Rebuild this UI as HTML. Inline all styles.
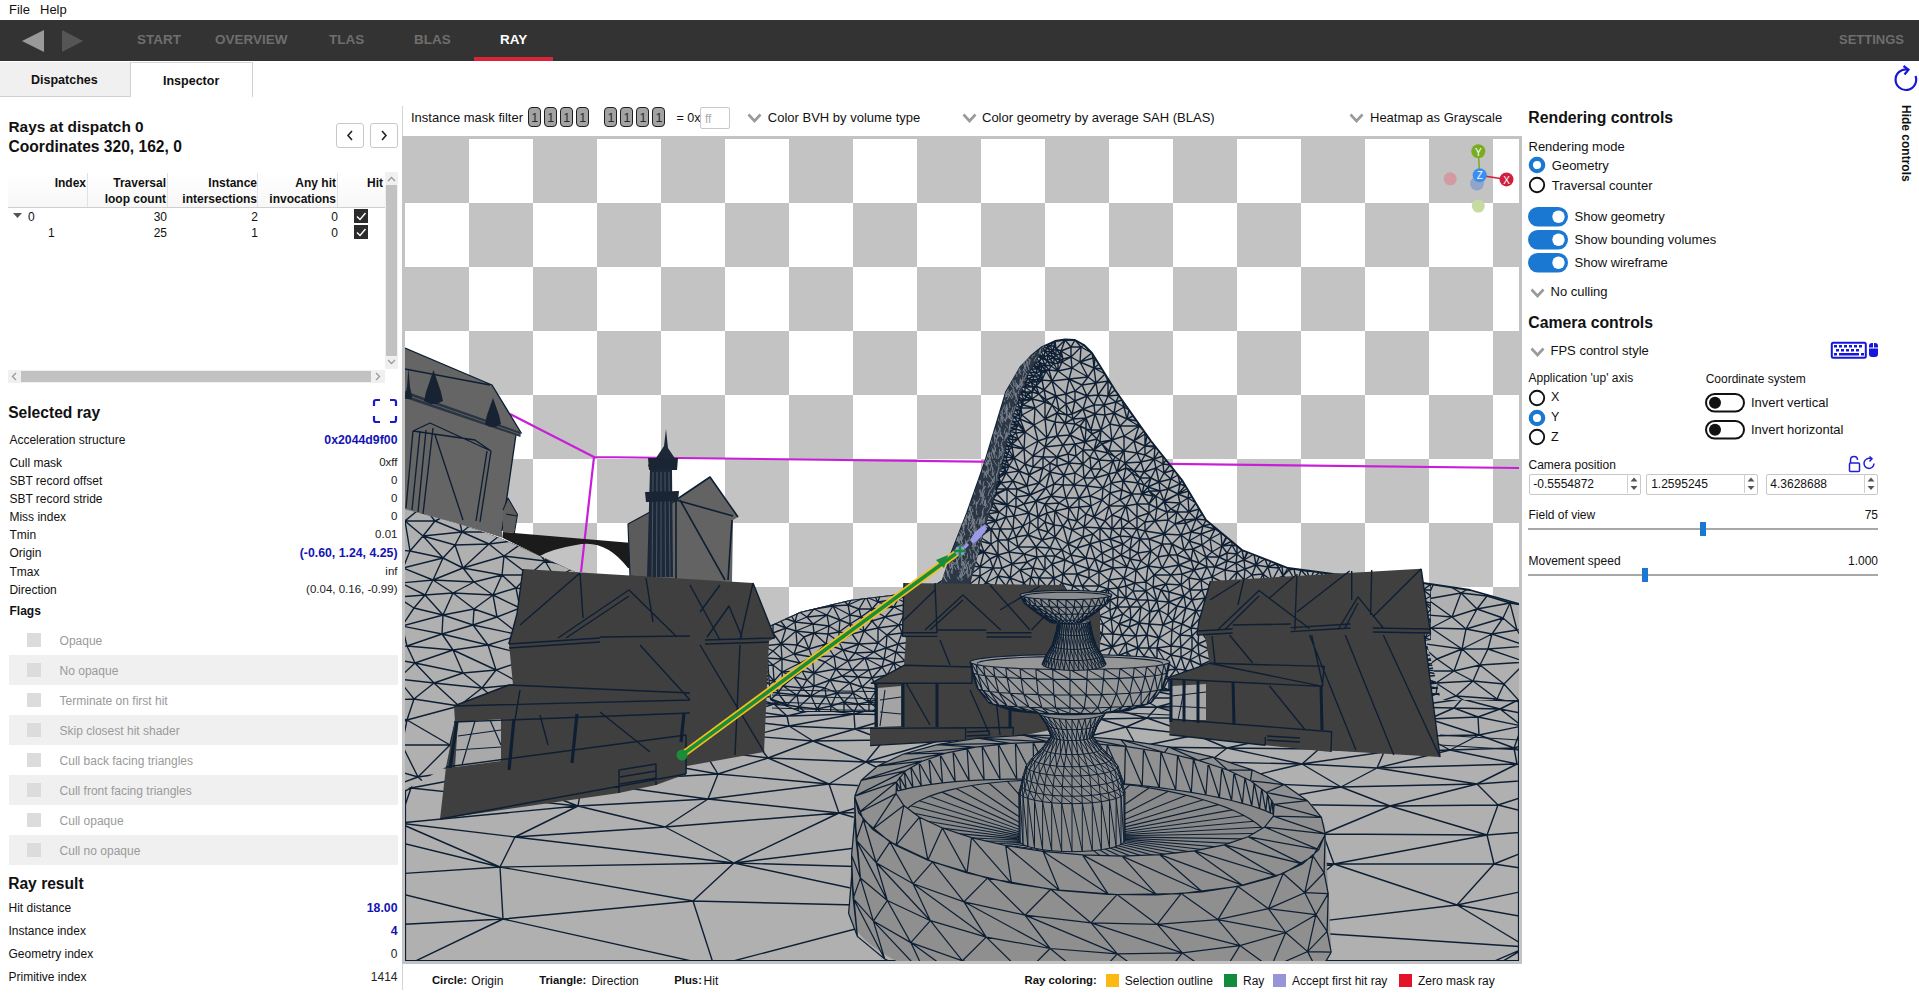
<!DOCTYPE html>
<html><head><meta charset="utf-8"><style>
html,body{margin:0;padding:0;background:#fff;width:1919px;height:997px;overflow:hidden;position:relative;font-family:"Liberation Sans", sans-serif}
.t{position:absolute;white-space:nowrap;font-family:"Liberation Sans", sans-serif}
</style></head><body>
<div class="t" style="left:9px;top:3.00px;font-size:13px;line-height:13px;font-weight:normal;color:#111;">File</div><div class="t" style="left:40px;top:3.00px;font-size:13px;line-height:13px;font-weight:normal;color:#111;">Help</div><div style="position:absolute;left:0;top:20px;width:1919px;height:41px;background:#333333"></div><svg style="position:absolute;left:0;top:20px" width="100" height="41"><polygon points="22,21 44,10 44,32" fill="#9a9a9a"/><polygon points="62,10 83,21 62,32" fill="#555555"/></svg><div class="t" style="left:137px;top:32.57px;font-size:13.5px;line-height:13.5px;font-weight:bold;color:#6e6e6e;">START</div><div class="t" style="left:215px;top:32.57px;font-size:13.5px;line-height:13.5px;font-weight:bold;color:#6e6e6e;">OVERVIEW</div><div class="t" style="left:329px;top:32.57px;font-size:13.5px;line-height:13.5px;font-weight:bold;color:#6e6e6e;">TLAS</div><div class="t" style="left:414px;top:32.57px;font-size:13.5px;line-height:13.5px;font-weight:bold;color:#6e6e6e;">BLAS</div><div class="t" style="left:500px;top:32.57px;font-size:13.5px;line-height:13.5px;font-weight:bold;color:#ffffff;">RAY</div><div class="t" style="right:15px;top:33.00px;font-size:13px;line-height:13px;font-weight:bold;color:#6e6e6e;">SETTINGS</div><div style="position:absolute;left:474px;top:57px;width:79px;height:4px;background:#d9243a"></div><div style="position:absolute;left:0;top:62px;width:130px;height:34px;background:#f0f0f0;border-right:1px solid #d0d0d0;border-bottom:1px solid #d0d0d0"></div><div style="position:absolute;left:131px;top:62px;width:121px;height:34px;background:#fff;border-right:1px solid #d0d0d0;border-top:1px solid #d8d8d8"></div><div class="t" style="left:31px;top:74.42px;font-size:12.5px;line-height:12.5px;font-weight:bold;color:#111;">Dispatches</div><div class="t" style="left:163px;top:75.42px;font-size:12.5px;line-height:12.5px;font-weight:bold;color:#111;">Inspector</div><div class="t" style="left:8.5px;top:118.96px;font-size:15.4px;line-height:15.4px;font-weight:bold;color:#111;">Rays at dispatch 0</div><div class="t" style="left:8.5px;top:138.79px;font-size:15.6px;line-height:15.6px;font-weight:bold;color:#111;">Coordinates 320, 162, 0</div><div style="position:absolute;left:336px;top:123px;width:26px;height:23px;border:1px solid #c8c8c8;border-radius:3px;background:#fff"></div><div style="position:absolute;left:370px;top:123px;width:26px;height:23px;border:1px solid #c8c8c8;border-radius:3px;background:#fff"></div><svg style="position:absolute;left:336px;top:123px" width="62" height="25"><polyline points="16,8 12,12.5 16,17" fill="none" stroke="#222" stroke-width="1.6"/><polyline points="46,8 50,12.5 46,17" fill="none" stroke="#222" stroke-width="1.6"/></svg><div style="position:absolute;left:8px;top:172px;width:377px;height:35px;background:linear-gradient(#ffffff,#f7f7f7);border-bottom:1px solid #cfcfcf"></div><div style="position:absolute;left:87px;top:173px;width:1px;height:34px;background:#e2e2e2"></div><div style="position:absolute;left:167px;top:173px;width:1px;height:34px;background:#e2e2e2"></div><div style="position:absolute;left:257px;top:173px;width:1px;height:34px;background:#e2e2e2"></div><div style="position:absolute;left:337px;top:173px;width:1px;height:34px;background:#e2e2e2"></div><div class="t" style="right:1833px;top:176.84px;font-size:12px;line-height:12px;font-weight:bold;color:#111;">Index</div><div class="t" style="right:1753px;top:176.84px;font-size:12px;line-height:12px;font-weight:bold;color:#111;">Traversal</div><div class="t" style="right:1753px;top:192.84px;font-size:12px;line-height:12px;font-weight:bold;color:#111;">loop count</div><div class="t" style="right:1662px;top:176.84px;font-size:12px;line-height:12px;font-weight:bold;color:#111;">Instance</div><div class="t" style="right:1662px;top:192.84px;font-size:12px;line-height:12px;font-weight:bold;color:#111;">intersections</div><div class="t" style="right:1583px;top:176.84px;font-size:12px;line-height:12px;font-weight:bold;color:#111;">Any hit</div><div class="t" style="right:1583px;top:192.84px;font-size:12px;line-height:12px;font-weight:bold;color:#111;">invocations</div><div class="t" style="right:1536px;top:176.84px;font-size:12px;line-height:12px;font-weight:bold;color:#111;">Hit</div><svg style="position:absolute;left:13px;top:213px" width="10" height="6"><polygon points="0,0 9,0 4.5,5" fill="#555"/></svg><div class="t" style="left:28px;top:210.84px;font-size:12px;line-height:12px;font-weight:normal;color:#111;">0</div><div class="t" style="left:48px;top:226.84px;font-size:12px;line-height:12px;font-weight:normal;color:#111;">1</div><div class="t" style="right:1752px;top:210.84px;font-size:12px;line-height:12px;font-weight:normal;color:#111;">30</div><div class="t" style="right:1752px;top:226.84px;font-size:12px;line-height:12px;font-weight:normal;color:#111;">25</div><div class="t" style="right:1661px;top:210.84px;font-size:12px;line-height:12px;font-weight:normal;color:#111;">2</div><div class="t" style="right:1661px;top:226.84px;font-size:12px;line-height:12px;font-weight:normal;color:#111;">1</div><div class="t" style="right:1581px;top:210.84px;font-size:12px;line-height:12px;font-weight:normal;color:#111;">0</div><div class="t" style="right:1581px;top:226.84px;font-size:12px;line-height:12px;font-weight:normal;color:#111;">0</div><svg style="position:absolute;left:354px;top:209px" width="14" height="14"><rect width="14" height="14" fill="#2b2b2b"/><polyline points="3,7.5 6,10.5 11.5,4" fill="none" stroke="#fff" stroke-width="1.4"/></svg><svg style="position:absolute;left:354px;top:225px" width="14" height="14"><rect width="14" height="14" fill="#2b2b2b"/><polyline points="3,7.5 6,10.5 11.5,4" fill="none" stroke="#fff" stroke-width="1.4"/></svg><div style="position:absolute;left:385px;top:172px;width:13px;height:197px;background:#f0f0f0"></div><div style="position:absolute;left:386px;top:185px;width:11px;height:171px;background:#c2c2c2"></div><svg style="position:absolute;left:385px;top:172px" width="13" height="197"><polyline points="3,9 6.5,5.5 10,9" fill="none" stroke="#999" stroke-width="1.3"/><polyline points="3,188 6.5,191.5 10,188" fill="none" stroke="#999" stroke-width="1.3"/></svg><div style="position:absolute;left:8px;top:370px;width:377px;height:13px;background:#f0f0f0"></div><div style="position:absolute;left:21px;top:371px;width:350px;height:11px;background:#c2c2c2"></div><svg style="position:absolute;left:8px;top:370px" width="377" height="13"><polyline points="8,3 4.5,6.5 8,10" fill="none" stroke="#999" stroke-width="1.3"/><polyline points="368,3 371.5,6.5 368,10" fill="none" stroke="#999" stroke-width="1.3"/></svg><div class="t" style="left:8.2px;top:404.79px;font-size:15.6px;line-height:15.6px;font-weight:bold;color:#111;">Selected ray</div><svg style="position:absolute;left:372px;top:398px" width="27" height="27"><path d="M2,8 V4 Q2,2 4,2 H8 M18,2 H22 Q24,2 24,4 V8 M24,18 V22 Q24,24 22,24 H18 M8,24 H4 Q2,24 2,22 V18" fill="none" stroke="#1a1acc" stroke-width="2.2"/></svg><div class="t" style="left:9.4px;top:433.84px;font-size:12px;line-height:12px;font-weight:normal;color:#111;">Acceleration structure</div><div class="t" style="right:1521.5px;top:433.59px;font-size:12.3px;line-height:12.3px;font-weight:bold;color:#1414b4;">0x2044d9f00</div><div class="t" style="left:9.4px;top:456.84px;font-size:12px;line-height:12px;font-weight:normal;color:#111;">Cull mask</div><div class="t" style="right:1521.5px;top:457.27px;font-size:11.5px;line-height:11.5px;font-weight:normal;color:#222;">0xff</div><div class="t" style="left:9.4px;top:474.84px;font-size:12px;line-height:12px;font-weight:normal;color:#111;">SBT record offset</div><div class="t" style="right:1521.5px;top:475.27px;font-size:11.5px;line-height:11.5px;font-weight:normal;color:#222;">0</div><div class="t" style="left:9.4px;top:492.84px;font-size:12px;line-height:12px;font-weight:normal;color:#111;">SBT record stride</div><div class="t" style="right:1521.5px;top:493.27px;font-size:11.5px;line-height:11.5px;font-weight:normal;color:#222;">0</div><div class="t" style="left:9.4px;top:510.84px;font-size:12px;line-height:12px;font-weight:normal;color:#111;">Miss index</div><div class="t" style="right:1521.5px;top:511.27px;font-size:11.5px;line-height:11.5px;font-weight:normal;color:#222;">0</div><div class="t" style="left:9.4px;top:528.84px;font-size:12px;line-height:12px;font-weight:normal;color:#111;">Tmin</div><div class="t" style="right:1521.5px;top:529.27px;font-size:11.5px;line-height:11.5px;font-weight:normal;color:#222;">0.01</div><div class="t" style="left:9.4px;top:546.84px;font-size:12px;line-height:12px;font-weight:normal;color:#111;">Origin</div><div class="t" style="right:1521.5px;top:546.59px;font-size:12.3px;line-height:12.3px;font-weight:bold;color:#1414b4;">(-0.60, 1.24, 4.25)</div><div class="t" style="left:9.4px;top:565.84px;font-size:12px;line-height:12px;font-weight:normal;color:#111;">Tmax</div><div class="t" style="right:1521.5px;top:566.27px;font-size:11.5px;line-height:11.5px;font-weight:normal;color:#222;">inf</div><div class="t" style="left:9.4px;top:583.84px;font-size:12px;line-height:12px;font-weight:normal;color:#111;">Direction</div><div class="t" style="right:1521.5px;top:584.27px;font-size:11.5px;line-height:11.5px;font-weight:normal;color:#222;">(0.04, 0.16, -0.99)</div><div class="t" style="left:9.5px;top:605.44px;font-size:12px;line-height:12px;font-weight:bold;color:#111;">Flags</div><div style="position:absolute;left:27px;top:633px;width:14px;height:14px;background:#dcdcdc"></div><div class="t" style="left:59.6px;top:634.64px;font-size:12px;line-height:12px;font-weight:normal;color:#9a9a9a;">Opaque</div><div style="position:absolute;left:9px;top:655px;width:389px;height:30px;background:#f0f0f0"></div><div style="position:absolute;left:27px;top:663px;width:14px;height:14px;background:#dcdcdc"></div><div class="t" style="left:59.6px;top:664.64px;font-size:12px;line-height:12px;font-weight:normal;color:#9a9a9a;">No opaque</div><div style="position:absolute;left:27px;top:693px;width:14px;height:14px;background:#dcdcdc"></div><div class="t" style="left:59.6px;top:694.64px;font-size:12px;line-height:12px;font-weight:normal;color:#9a9a9a;">Terminate on first hit</div><div style="position:absolute;left:9px;top:715px;width:389px;height:30px;background:#f0f0f0"></div><div style="position:absolute;left:27px;top:723px;width:14px;height:14px;background:#dcdcdc"></div><div class="t" style="left:59.6px;top:724.64px;font-size:12px;line-height:12px;font-weight:normal;color:#9a9a9a;">Skip closest hit shader</div><div style="position:absolute;left:27px;top:753px;width:14px;height:14px;background:#dcdcdc"></div><div class="t" style="left:59.6px;top:754.64px;font-size:12px;line-height:12px;font-weight:normal;color:#9a9a9a;">Cull back facing triangles</div><div style="position:absolute;left:9px;top:775px;width:389px;height:30px;background:#f0f0f0"></div><div style="position:absolute;left:27px;top:783px;width:14px;height:14px;background:#dcdcdc"></div><div class="t" style="left:59.6px;top:784.64px;font-size:12px;line-height:12px;font-weight:normal;color:#9a9a9a;">Cull front facing triangles</div><div style="position:absolute;left:27px;top:813px;width:14px;height:14px;background:#dcdcdc"></div><div class="t" style="left:59.6px;top:814.64px;font-size:12px;line-height:12px;font-weight:normal;color:#9a9a9a;">Cull opaque</div><div style="position:absolute;left:9px;top:835px;width:389px;height:30px;background:#f0f0f0"></div><div style="position:absolute;left:27px;top:843px;width:14px;height:14px;background:#dcdcdc"></div><div class="t" style="left:59.6px;top:844.64px;font-size:12px;line-height:12px;font-weight:normal;color:#9a9a9a;">Cull no opaque</div><div class="t" style="left:8.2px;top:875.79px;font-size:15.6px;line-height:15.6px;font-weight:bold;color:#111;">Ray result</div><div class="t" style="left:8.5px;top:901.84px;font-size:12px;line-height:12px;font-weight:normal;color:#111;">Hit distance</div><div class="t" style="right:1521.5px;top:901.59px;font-size:12.3px;line-height:12.3px;font-weight:bold;color:#1414b4;">18.00</div><div class="t" style="left:8.5px;top:924.84px;font-size:12px;line-height:12px;font-weight:normal;color:#111;">Instance index</div><div class="t" style="right:1521.5px;top:924.59px;font-size:12.3px;line-height:12.3px;font-weight:bold;color:#1414b4;">4</div><div class="t" style="left:8.5px;top:947.84px;font-size:12px;line-height:12px;font-weight:normal;color:#111;">Geometry index</div><div class="t" style="right:1521.5px;top:947.84px;font-size:12px;line-height:12px;font-weight:normal;color:#222;">0</div><div class="t" style="left:8.5px;top:970.84px;font-size:12px;line-height:12px;font-weight:normal;color:#111;">Primitive index</div><div class="t" style="right:1521.5px;top:970.84px;font-size:12px;line-height:12px;font-weight:normal;color:#222;">1414</div><div style="position:absolute;left:402px;top:106px;width:1px;height:884px;background:#d4d4d4"></div><div class="t" style="left:411px;top:111.00px;font-size:13px;line-height:13px;font-weight:normal;color:#111;">Instance mask filter</div><div style="position:absolute;left:528px;top:107px;width:11px;height:18px;border:1.5px solid #1e1e1e;border-radius:4px;background:#a3a3a3"></div><div class="t" style="left:531.2px;top:112.42px;font-size:12.5px;line-height:12.5px;font-weight:normal;color:#2a2a2a;">1</div><div style="position:absolute;left:544px;top:107px;width:11px;height:18px;border:1.5px solid #1e1e1e;border-radius:4px;background:#a3a3a3"></div><div class="t" style="left:547.2px;top:112.42px;font-size:12.5px;line-height:12.5px;font-weight:normal;color:#2a2a2a;">1</div><div style="position:absolute;left:560px;top:107px;width:11px;height:18px;border:1.5px solid #1e1e1e;border-radius:4px;background:#a3a3a3"></div><div class="t" style="left:563.2px;top:112.42px;font-size:12.5px;line-height:12.5px;font-weight:normal;color:#2a2a2a;">1</div><div style="position:absolute;left:576px;top:107px;width:11px;height:18px;border:1.5px solid #1e1e1e;border-radius:4px;background:#a3a3a3"></div><div class="t" style="left:579.2px;top:112.42px;font-size:12.5px;line-height:12.5px;font-weight:normal;color:#2a2a2a;">1</div><div style="position:absolute;left:604.3px;top:107px;width:11px;height:18px;border:1.5px solid #1e1e1e;border-radius:4px;background:#a3a3a3"></div><div class="t" style="left:607.5px;top:112.42px;font-size:12.5px;line-height:12.5px;font-weight:normal;color:#2a2a2a;">1</div><div style="position:absolute;left:620.3px;top:107px;width:11px;height:18px;border:1.5px solid #1e1e1e;border-radius:4px;background:#a3a3a3"></div><div class="t" style="left:623.5px;top:112.42px;font-size:12.5px;line-height:12.5px;font-weight:normal;color:#2a2a2a;">1</div><div style="position:absolute;left:636.3px;top:107px;width:11px;height:18px;border:1.5px solid #1e1e1e;border-radius:4px;background:#a3a3a3"></div><div class="t" style="left:639.5px;top:112.42px;font-size:12.5px;line-height:12.5px;font-weight:normal;color:#2a2a2a;">1</div><div style="position:absolute;left:652.3px;top:107px;width:11px;height:18px;border:1.5px solid #1e1e1e;border-radius:4px;background:#a3a3a3"></div><div class="t" style="left:655.5px;top:112.42px;font-size:12.5px;line-height:12.5px;font-weight:normal;color:#2a2a2a;">1</div><div class="t" style="left:676.5px;top:112.42px;font-size:12.5px;line-height:12.5px;font-weight:normal;color:#111;">= 0x</div><div style="position:absolute;left:700px;top:107px;width:28px;height:20px;border:1px solid #c8c8c8;border-radius:2px;background:#fff"></div><div class="t" style="left:705px;top:112.84px;font-size:12px;line-height:12px;font-weight:normal;color:#aaa;">ff</div><svg style="position:absolute;left:746.5px;top:112.5px" width="16" height="11"><polyline points="1.5,1.5 7.5,8 13.5,1.5" fill="none" stroke="#9a9a9a" stroke-width="2.6"/></svg><div class="t" style="left:767.8px;top:111.00px;font-size:13px;line-height:13px;font-weight:normal;color:#111;">Color BVH by volume type</div><svg style="position:absolute;left:961.5px;top:112.5px" width="16" height="11"><polyline points="1.5,1.5 7.5,8 13.5,1.5" fill="none" stroke="#9a9a9a" stroke-width="2.6"/></svg><div class="t" style="left:982px;top:111.00px;font-size:13px;line-height:13px;font-weight:normal;color:#111;">Color geometry by average SAH (BLAS)</div><svg style="position:absolute;left:1348.5px;top:112.5px" width="16" height="11"><polyline points="1.5,1.5 7.5,8 13.5,1.5" fill="none" stroke="#9a9a9a" stroke-width="2.6"/></svg><div class="t" style="left:1370px;top:111.00px;font-size:13px;line-height:13px;font-weight:normal;color:#111;">Heatmap as Grayscale</div><div style="position:absolute;left:402px;top:136px;width:1120px;height:828px;background:#c3c3c3"></div><svg style="position:absolute;left:405px;top:139px" width="1114" height="822" viewBox="405 139 1114 822"><rect x="405" y="139" width="1114" height="822" fill="#ffffff"/><rect x="405" y="139" width="64" height="64" fill="#c3c3c3"/><rect x="533" y="139" width="64" height="64" fill="#c3c3c3"/><rect x="661" y="139" width="64" height="64" fill="#c3c3c3"/><rect x="789" y="139" width="64" height="64" fill="#c3c3c3"/><rect x="917" y="139" width="64" height="64" fill="#c3c3c3"/><rect x="1045" y="139" width="64" height="64" fill="#c3c3c3"/><rect x="1173" y="139" width="64" height="64" fill="#c3c3c3"/><rect x="1301" y="139" width="64" height="64" fill="#c3c3c3"/><rect x="1429" y="139" width="64" height="64" fill="#c3c3c3"/><rect x="469" y="203" width="64" height="64" fill="#c3c3c3"/><rect x="597" y="203" width="64" height="64" fill="#c3c3c3"/><rect x="725" y="203" width="64" height="64" fill="#c3c3c3"/><rect x="853" y="203" width="64" height="64" fill="#c3c3c3"/><rect x="981" y="203" width="64" height="64" fill="#c3c3c3"/><rect x="1109" y="203" width="64" height="64" fill="#c3c3c3"/><rect x="1237" y="203" width="64" height="64" fill="#c3c3c3"/><rect x="1365" y="203" width="64" height="64" fill="#c3c3c3"/><rect x="1493" y="203" width="64" height="64" fill="#c3c3c3"/><rect x="405" y="267" width="64" height="64" fill="#c3c3c3"/><rect x="533" y="267" width="64" height="64" fill="#c3c3c3"/><rect x="661" y="267" width="64" height="64" fill="#c3c3c3"/><rect x="789" y="267" width="64" height="64" fill="#c3c3c3"/><rect x="917" y="267" width="64" height="64" fill="#c3c3c3"/><rect x="1045" y="267" width="64" height="64" fill="#c3c3c3"/><rect x="1173" y="267" width="64" height="64" fill="#c3c3c3"/><rect x="1301" y="267" width="64" height="64" fill="#c3c3c3"/><rect x="1429" y="267" width="64" height="64" fill="#c3c3c3"/><rect x="469" y="331" width="64" height="64" fill="#c3c3c3"/><rect x="597" y="331" width="64" height="64" fill="#c3c3c3"/><rect x="725" y="331" width="64" height="64" fill="#c3c3c3"/><rect x="853" y="331" width="64" height="64" fill="#c3c3c3"/><rect x="981" y="331" width="64" height="64" fill="#c3c3c3"/><rect x="1109" y="331" width="64" height="64" fill="#c3c3c3"/><rect x="1237" y="331" width="64" height="64" fill="#c3c3c3"/><rect x="1365" y="331" width="64" height="64" fill="#c3c3c3"/><rect x="1493" y="331" width="64" height="64" fill="#c3c3c3"/><rect x="405" y="395" width="64" height="64" fill="#c3c3c3"/><rect x="533" y="395" width="64" height="64" fill="#c3c3c3"/><rect x="661" y="395" width="64" height="64" fill="#c3c3c3"/><rect x="789" y="395" width="64" height="64" fill="#c3c3c3"/><rect x="917" y="395" width="64" height="64" fill="#c3c3c3"/><rect x="1045" y="395" width="64" height="64" fill="#c3c3c3"/><rect x="1173" y="395" width="64" height="64" fill="#c3c3c3"/><rect x="1301" y="395" width="64" height="64" fill="#c3c3c3"/><rect x="1429" y="395" width="64" height="64" fill="#c3c3c3"/><rect x="469" y="459" width="64" height="64" fill="#c3c3c3"/><rect x="597" y="459" width="64" height="64" fill="#c3c3c3"/><rect x="725" y="459" width="64" height="64" fill="#c3c3c3"/><rect x="853" y="459" width="64" height="64" fill="#c3c3c3"/><rect x="981" y="459" width="64" height="64" fill="#c3c3c3"/><rect x="1109" y="459" width="64" height="64" fill="#c3c3c3"/><rect x="1237" y="459" width="64" height="64" fill="#c3c3c3"/><rect x="1365" y="459" width="64" height="64" fill="#c3c3c3"/><rect x="1493" y="459" width="64" height="64" fill="#c3c3c3"/><rect x="405" y="523" width="64" height="64" fill="#c3c3c3"/><rect x="533" y="523" width="64" height="64" fill="#c3c3c3"/><rect x="661" y="523" width="64" height="64" fill="#c3c3c3"/><rect x="789" y="523" width="64" height="64" fill="#c3c3c3"/><rect x="917" y="523" width="64" height="64" fill="#c3c3c3"/><rect x="1045" y="523" width="64" height="64" fill="#c3c3c3"/><rect x="1173" y="523" width="64" height="64" fill="#c3c3c3"/><rect x="1301" y="523" width="64" height="64" fill="#c3c3c3"/><rect x="1429" y="523" width="64" height="64" fill="#c3c3c3"/><rect x="469" y="587" width="64" height="64" fill="#c3c3c3"/><rect x="597" y="587" width="64" height="64" fill="#c3c3c3"/><rect x="725" y="587" width="64" height="64" fill="#c3c3c3"/><rect x="853" y="587" width="64" height="64" fill="#c3c3c3"/><rect x="981" y="587" width="64" height="64" fill="#c3c3c3"/><rect x="1109" y="587" width="64" height="64" fill="#c3c3c3"/><rect x="1237" y="587" width="64" height="64" fill="#c3c3c3"/><rect x="1365" y="587" width="64" height="64" fill="#c3c3c3"/><rect x="1493" y="587" width="64" height="64" fill="#c3c3c3"/><rect x="405" y="651" width="64" height="64" fill="#c3c3c3"/><rect x="533" y="651" width="64" height="64" fill="#c3c3c3"/><rect x="661" y="651" width="64" height="64" fill="#c3c3c3"/><rect x="789" y="651" width="64" height="64" fill="#c3c3c3"/><rect x="917" y="651" width="64" height="64" fill="#c3c3c3"/><rect x="1045" y="651" width="64" height="64" fill="#c3c3c3"/><rect x="1173" y="651" width="64" height="64" fill="#c3c3c3"/><rect x="1301" y="651" width="64" height="64" fill="#c3c3c3"/><rect x="1429" y="651" width="64" height="64" fill="#c3c3c3"/><rect x="469" y="715" width="64" height="64" fill="#c3c3c3"/><rect x="597" y="715" width="64" height="64" fill="#c3c3c3"/><rect x="725" y="715" width="64" height="64" fill="#c3c3c3"/><rect x="853" y="715" width="64" height="64" fill="#c3c3c3"/><rect x="981" y="715" width="64" height="64" fill="#c3c3c3"/><rect x="1109" y="715" width="64" height="64" fill="#c3c3c3"/><rect x="1237" y="715" width="64" height="64" fill="#c3c3c3"/><rect x="1365" y="715" width="64" height="64" fill="#c3c3c3"/><rect x="1493" y="715" width="64" height="64" fill="#c3c3c3"/><rect x="405" y="779" width="64" height="64" fill="#c3c3c3"/><rect x="533" y="779" width="64" height="64" fill="#c3c3c3"/><rect x="661" y="779" width="64" height="64" fill="#c3c3c3"/><rect x="789" y="779" width="64" height="64" fill="#c3c3c3"/><rect x="917" y="779" width="64" height="64" fill="#c3c3c3"/><rect x="1045" y="779" width="64" height="64" fill="#c3c3c3"/><rect x="1173" y="779" width="64" height="64" fill="#c3c3c3"/><rect x="1301" y="779" width="64" height="64" fill="#c3c3c3"/><rect x="1429" y="779" width="64" height="64" fill="#c3c3c3"/><rect x="469" y="843" width="64" height="64" fill="#c3c3c3"/><rect x="597" y="843" width="64" height="64" fill="#c3c3c3"/><rect x="725" y="843" width="64" height="64" fill="#c3c3c3"/><rect x="853" y="843" width="64" height="64" fill="#c3c3c3"/><rect x="981" y="843" width="64" height="64" fill="#c3c3c3"/><rect x="1109" y="843" width="64" height="64" fill="#c3c3c3"/><rect x="1237" y="843" width="64" height="64" fill="#c3c3c3"/><rect x="1365" y="843" width="64" height="64" fill="#c3c3c3"/><rect x="1493" y="843" width="64" height="64" fill="#c3c3c3"/><rect x="405" y="907" width="64" height="64" fill="#c3c3c3"/><rect x="533" y="907" width="64" height="64" fill="#c3c3c3"/><rect x="661" y="907" width="64" height="64" fill="#c3c3c3"/><rect x="789" y="907" width="64" height="64" fill="#c3c3c3"/><rect x="917" y="907" width="64" height="64" fill="#c3c3c3"/><rect x="1045" y="907" width="64" height="64" fill="#c3c3c3"/><rect x="1173" y="907" width="64" height="64" fill="#c3c3c3"/><rect x="1301" y="907" width="64" height="64" fill="#c3c3c3"/><rect x="1429" y="907" width="64" height="64" fill="#c3c3c3"/><path d="M510 414L594 457L1519 468M594 457L581 572" stroke="#c81ed8" stroke-width="2.2" fill="none" stroke-linejoin="round"/><clipPath id="c1"><polygon points="405.0,509.0 460.0,524.0 500.0,538.0 540.0,556.0 575.0,572.0 610.0,586.0 700.0,600.0 765.0,628.0 800.0,612.0 850.0,600.0 900.0,594.0 930.0,588.0 945.0,578.0 949.0,559.0 967.0,513.0 985.0,462.0 1006.0,392.0 1020.0,368.0 1031.0,356.0 1042.0,347.0 1055.0,341.0 1065.0,339.5 1075.0,340.0 1084.0,345.0 1092.0,353.0 1115.0,390.0 1151.0,441.0 1182.0,480.0 1206.0,520.0 1242.0,550.0 1288.0,568.0 1333.0,574.0 1423.0,583.0 1470.0,590.0 1519.0,604.0 1519.0,961.0 405.0,961.0"/></clipPath><polygon points="405.0,509.0 460.0,524.0 500.0,538.0 540.0,556.0 575.0,572.0 610.0,586.0 700.0,600.0 765.0,628.0 800.0,612.0 850.0,600.0 900.0,594.0 930.0,588.0 945.0,578.0 949.0,559.0 967.0,513.0 985.0,462.0 1006.0,392.0 1020.0,368.0 1031.0,356.0 1042.0,347.0 1055.0,341.0 1065.0,339.5 1075.0,340.0 1084.0,345.0 1092.0,353.0 1115.0,390.0 1151.0,441.0 1182.0,480.0 1206.0,520.0 1242.0,550.0 1288.0,568.0 1333.0,574.0 1423.0,583.0 1470.0,590.0 1519.0,604.0 1519.0,961.0 405.0,961.0" fill="#b0b0b0"/><path d="M470 568L453 572M397 584L420 583M933 553L957 552M545 552L513 552M981 522L966 518M1450 666L1418 670M1511 668L1485 670M1281 649L1305 641M502 681L475 681M1026 501L995 504M419 637L432 642M752 711L774 704M966 518L1001 515M482 702L460 695M741 670L710 672M1057 650L1053 644M1141 666L1153 660M1318 611L1338 614M1049 562L1074 561M1302 764L1341 787M1152 642L1171 637M420 610L399 607M881 691L856 694M803 700L779 696M921 789L1023 787M1239 649L1262 652M957 655L971 651M1284 683L1303 690M1129 672L1105 674M992 530L1001 525M1021 387L996 382M1011 599L999 603M1066 387L1056 391M1061 524L1080 522M1004 740L981 761M407 720L481 721M1033 615L1006 608M1143 599L1134 595M1059 532L1076 539M1172 547L1165 551M1097 684L1072 680M1077 421L1086 417M969 532L992 530M1108 708L1147 718M1264 586L1277 592M1035 521L1026 527M531 657L523 651M1041 486L1024 492M580 621L553 618M1015 438L990 438M1058 367L1069 375M655 608L635 607M1106 366L1091 362M1376 587L1391 590M1140 518L1176 516M813 643L833 638M924 617L945 618M506 598L527 601M1098 607L1117 605M1373 598L1358 601M490 543L499 548M1097 465L1119 467M971 651L985 660M1236 639L1269 637M1494 864L1334 864M680 624L650 623M1010 624L1013 618M837 672L801 668M1513 604L1522 599M697 637L674 635M944 624L931 633M1116 540L1151 535M1134 488L1112 490M1001 662L985 660M1078 663L1077 670M681 608L680 604M1042 622L1066 618M1169 606L1194 606M726 689L700 681M1218 604L1215 610M1450 750L1479 735M639 611L670 612M453 536L460 529M1149 506L1140 511M807 653L777 649M631 670L594 671M888 610L877 617M724 615L699 614M745 649L735 644M416 591L437 586M1120 526L1139 529M858 682L836 687M1475 688L1437 688M1104 476L1087 480M673 681L649 678M408 627L418 621M471 550L456 556M639 611L617 611M494 749L491 773M1381 614L1373 607M791 624L810 621M455 682L453 676M579 692L577 684M1360 651L1365 644M1475 688L1487 695M734 605L711 610M1139 524L1139 529M1339 684L1364 687M1107 699L1108 708M1146 555L1151 560M1114 453L1109 460M1279 614L1303 614M1116 506L1149 506M988 613L966 610M765 668L789 663M636 590L638 597M1024 449L1028 456M738 627L703 625M1099 386L1104 394M502 681L532 688M1073 471L1052 469M783 631L789 637M1316 656L1302 649M658 667L666 676M1465 594L1443 596M1302 764L1227 748M1140 698L1107 699M565 640L539 642M1127 649L1127 644M1196 735L1287 735M631 670L647 673M1104 394L1093 401M497 636L483 640M477 649L457 648M1025 444L1046 443M697 637L690 631M1271 689L1230 692M1142 653L1127 649M515 558L496 563M614 624L606 631M1068 656L1102 653M650 623L654 618M480 670L463 667M696 667L724 661M1086 381L1069 375M1013 618L993 620M1458 603L1439 602M1527 947L1387 1029M739 678L770 676M1368 725L1429 719M1211 538L1232 539M605 591L590 594M1044 374L1018 377M1005 629L1030 628M988 613L993 620M1014 472L991 468M1413 626L1430 620M1333 633L1330 624M1019 413L1003 418M1262 652L1233 653M1095 666L1116 663M1289 608L1279 614M1097 465L1099 470M1031 511L1047 504M733 632L725 637M1424 736L1368 725M812 648L777 649M997 565L1028 561M892 704L915 692M681 608L670 612M1325 688L1369 694M1305 641L1334 644M1287 735L1320 727M1095 666L1077 670M1189 564L1165 567M428 696L445 703M1146 555L1165 551M1041 696L1076 697M1189 564L1193 556M1190 493L1166 493M735 644L717 646M841 643L812 648M1001 515L972 513M831 604L808 604M1077 350L1104 345M1042 434L1017 433M1211 499L1177 498M807 616L830 610M780 686L765 683M1498 805L1587 776M1077 350L1050 350M753 698L779 696M547 652L566 660M1001 515L1017 506M969 467L991 468M1458 603L1470 609M405 685L407 692M893 677L927 673M620 689L643 686M1123 514L1096 508M1218 648L1231 644M603 615L583 607M1208 570L1188 574M502 681L539 683M1033 463L1048 457M1339 651L1302 649M1299 578L1335 579M1343 668L1315 663M455 682L476 688M621 648L607 655M1169 485L1132 483M1314 584L1335 579M1397 667L1402 659M1126 441L1115 448M1013 618L988 613M1324 574L1341 566M1090 649L1057 650M1390 604L1373 607M735 644L757 644M527 601L526 595M574 601L590 594M1387 642L1409 642M1470 673L1457 680M1169 606L1184 602M1353 589L1376 587M1013 407L1037 410M497 636L507 627M957 557L932 563M549 667L566 660M1184 594L1161 601M1499 675L1524 675M544 587L517 586M739 678L721 680M533 570L506 573M1441 675L1418 670M930 963L1154 898M1405 707L1362 714M879 634L897 629M1001 662L976 665M1169 485L1142 478M460 695L476 688M1233 629L1228 634M1031 511L1057 516M1333 633L1351 638M1083 543L1096 540M1024 492L1044 493M972 513L989 509M660 639L643 643M890 657L868 656M919 603L899 604M984 600L984 594M1405 648L1418 654M1008 520L1024 516M1018 377L996 382M1470 609L1490 606M1254 929L1334 864M883 600L899 604M1024 449L990 448M1056 391L1035 395M1079 630L1087 622M964 636L978 631M960 614L945 618M981 761L1023 787M1408 579L1385 580M1153 454L1130 457M1215 610L1201 613M1127 649L1135 657M1017 428L1042 434M546 592L517 586M1033 725L1082 738M1102 761L1023 787M1334 644L1365 644M1130 619L1129 624M1124 560L1151 560M750 636L758 629M879 634L901 634M551 623L552 631M1098 607L1080 604M1296 594L1293 588M450 566L453 572M1107 485L1132 483M1125 475L1119 467M1196 735L1257 724M1470 673L1441 675M1213 630L1228 634M1054 595L1025 591M1157 707L1108 708M429 552L471 550M620 689L636 695M1467 650L1486 652M467 543L490 543M1211 576L1213 582M1160 524L1198 523M1390 806L1477 784M759 690L726 689M830 610L858 610M1391 595L1411 591M1471 661L1471 666M1184 594L1171 591M642 719L685 716M1151 535L1158 530M464 579L484 581M1003 399L1035 395M1478 717L1429 719M1520 628L1524 638M1333 633L1310 631M445 577L432 571M1429 719L1454 708M1017 428L1017 433M1450 666L1471 661M1077 670L1113 669M416 591L440 593M644 710L685 716M637 638L660 639M951 682L947 675M1116 506L1123 514M952 578L969 575M995 504L1017 506M1066 618L1066 623M602 602L622 600M1234 553L1211 549M718 774L582 782M1517 764L1587 776M581 653L547 652M981 500L995 504M460 695L507 698M981 761L945 739M803 700L774 704M1315 663L1335 658M765 668L782 672M1494 644L1466 644M908 579L932 586M497 636L517 640M698 660L681 657M1180 615L1153 619M665 827L734 863M1208 570L1239 564M1049 547L1074 548M1429 608L1439 602M993 639L978 631M1057 516L1024 516M1425 647L1409 642M981 689L1014 688M1021 604L1006 608M1450 666L1471 666M726 719L787 716M461 588L437 586M697 637L669 643M438 618L454 622M441 539L441 532M1286 584L1264 586M1078 581L1092 589M1060 429L1097 428M1102 761L1226 782M603 615L617 611M1077 421L1097 428M1487 599L1489 591M876 625L847 624M836 687L809 687M1081 532L1115 531M1176 516L1160 524M1310 636L1310 631M1022 638L1049 636M1035 521L1057 516M488 571L479 576M1195 518L1176 516M789 726L726 719M724 615L756 615M1019 413L996 411M705 728L726 719M1425 639L1445 639M991 468L1018 466M1003 418L1023 421M1147 718L1100 719M1035 367L1017 362M495 652L484 656M883 600L853 597M1125 475L1099 470M1166 580L1147 583M999 572L961 571M1257 724L1320 727M1218 604L1184 602M1236 610L1239 618M1025 591L1026 584M937 612L960 614M616 675L620 684M1097 494L1112 490M797 679L770 676M1080 689L1061 684M1091 372L1079 367M1409 642L1425 639M1357 627L1333 633M1055 661L1078 663M1024 492L1008 486M1387 642L1390 636M1211 641L1231 644M813 643L812 648M813 643L789 637M1411 591L1402 599M557 613L578 616M1153 593L1134 595M569 596L590 594M996 411L1003 418M1277 592L1268 599M615 595L638 597M1214 659L1233 653M1413 626L1438 629M1490 612L1492 620M1405 707L1436 694M960 614L966 610M924 617L905 619M1492 620L1520 628M588 629L614 624M1054 595L1063 590M1108 615L1108 622M878 590L888 594M1255 606L1268 599M1520 628L1509 633M1326 605L1330 597M1072 477L1087 480M1351 638L1365 644M805 660L789 663M936 593L932 586M1138 470L1125 475M665 699L697 698M556 581L573 578M944 624L972 620M1017 428L998 426M1025 444L1001 443M1201 613L1194 606M1221 558L1243 558M1357 737L1384 752M684 672L696 667M517 671L525 666M1008 486L981 483M475 681L497 686M1297 561L1279 563M996 652L1025 656M662 600L680 604M1321 617L1338 614M1373 598L1354 596M1482 679L1470 673M1058 673L1092 678M1316 646L1339 651M837 672L864 675M780 618L791 624M1143 851L1247 804M814 693L836 687M961 484L987 488M644 710L687 706M497 636L474 632M1464 615L1492 620M637 638L622 642M1103 442L1115 448M789 726L751 736M1140 511L1123 514M705 728L751 736M574 601L554 603M907 649L890 657M1390 806L1247 804M1108 615L1135 614M1097 494L1069 494M531 657L517 661M1302 764L1384 752M1091 362L1067 362M482 529L475 538M854 714L903 715M1031 352L1050 350M615 595L622 600M866 661L844 665M1156 611L1153 619M1525 622L1507 616M1183 621L1213 621M1137 681L1118 683M1206 512L1181 509M1516 701L1587 726M979 626L944 624M556 581L521 579M620 689L612 698M482 529L495 535M1357 737L1320 727M581 750L521 735M1314 714L1323 704M552 631L529 624M961 563L957 557M1015 438L1046 443M847 624L830 621M437 712L445 703M1213 630L1196 625M572 677L593 680M1390 604L1402 599M594 671L621 665M1402 691L1437 688M1189 533L1212 533M947 698L981 689M1134 488L1107 485M1045 415L1037 410M1383 575L1355 581M753 698L774 704M407 692L337 676M801 668L765 668M1153 660L1164 653M476 606L480 600M1318 611L1303 614M1086 616L1108 615M1252 642L1239 649M1097 684L1061 684M1044 493L1060 490M1485 670L1471 666M1086 409L1115 408M570 591L569 596M689 689L700 681M443 636L419 637M549 667L578 665M733 632L710 630M482 702L507 698M801 668L789 663M1294 567L1303 574M529 612L511 608M1310 636L1334 644M1522 726L1514 748M477 649L450 654M914 725L945 739M480 612L483 618M811 611L785 612M507 698L476 688M1169 606L1140 604M960 614L988 613M1284 683L1310 682M1030 402L1035 395M539 683L577 684M1264 586L1262 578M1021 387L1035 395M1376 587L1385 580M1045 666L1078 663M1026 584L1009 587M1079 630L1049 636M1146 555L1172 558M985 493L987 488M1066 455L1092 458M736 684L721 680M1153 691L1190 690M1142 478L1125 475M1045 681L1029 674M1046 362L1067 362M494 749L419 765M1354 679L1338 673M894 665L869 667M1095 666L1107 658M639 611L654 618M1341 787L1377 768M697 698L724 703M724 615L711 610M464 579L479 576M1373 607L1358 601M513 691L476 688M1437 612L1429 608M1266 632L1269 637M1201 613L1223 614M1247 804L1152 798M1055 661L1024 665M884 740L945 739M1054 689L1061 684M1449 623L1480 625M1028 632L1030 628M1139 412L1125 417M1063 590L1059 584M990 583L1026 584M1384 752L1319 749M1106 644L1127 644M1254 929L1527 947M1166 580L1170 586M440 631L474 632M517 645L539 642M507 627L526 630M1130 619L1108 622M1130 619L1153 619M484 662L499 667M809 687L797 679M1500 709L1587 726M458 612L441 609M453 536L475 538M998 559L1020 556M1227 748L1319 749M1049 562L1062 565M1047 504L1044 499M1137 681L1117 678M1060 429L1065 434M1097 684L1104 691M529 612L557 613M1024 492L1044 499M1060 429L1038 426M1245 687L1230 692M1189 533L1190 540M1152 497L1122 496M783 631L770 635M745 621L738 627M500 867L337 878M461 588L440 593M1480 625L1465 628M1126 441L1166 441M583 607L557 613M1235 670L1228 664M770 676L782 672M866 661L869 667M1163 631L1148 636M571 672L546 676M693 901L714 966M1010 495L1044 499M477 675L453 676M1088 356L1109 357M1125 417L1110 413M559 560L562 565M683 597L719 602M1232 539L1213 544M1196 735L1137 747M411 788L337 827M455 682L475 681M1186 475L1163 472M1059 705L1108 708M742 610L724 615M459 733L481 721M997 669L976 665M523 618L529 624M1106 644L1110 639M500 867L515 837M1170 586L1171 591M401 701L445 703M566 660L591 658M577 684L601 686M1152 588L1170 586M1073 471L1072 477M1163 631L1153 625M1283 655L1259 661M702 605L711 610M1438 683L1405 681M1004 635L978 631M1334 864L1323 834M1257 681L1245 687M408 627L337 625M397 584L411 595M1238 660L1233 653M936 593L961 596M1164 429L1139 428M488 626L474 632M1196 625L1193 629M587 713L612 698M461 588L472 592M1071 556L1092 557M1099 386L1119 386M1125 475L1104 476M1390 636L1425 639M1249 699L1288 705M1466 644L1445 645M432 662L437 669M1099 386L1079 392M437 586L420 583M757 644L770 635M927 673L960 668M866 661L894 665M505 567L496 563M888 685L893 677M1231 547L1213 544M1257 681L1253 676M990 583L987 588M1193 556L1214 563M984 600L999 603M1061 524L1035 521M1107 567L1113 573M1457 633L1465 628M546 703L573 700M1321 617L1318 611M1354 679L1387 679M1026 527L1001 525M1011 549L1022 540M1008 486L987 488M419 765L409 749M1103 423L1086 417M546 592L509 592M1228 634L1248 634M1152 497L1166 493M677 617L670 612M866 651L831 651M546 703L544 693M847 615L807 616M517 586L509 592M1130 688L1118 683M1395 655L1418 654M1314 714L1362 714M1079 630L1050 629M503 919L337 928M1449 623L1413 626M990 448L980 453M945 607L966 610M1259 661L1238 660M724 653L717 646M520 676L546 676M1245 623L1253 628M605 591L625 585M1084 512L1096 508M1150 541L1171 536M780 618L745 621M1021 569L1050 569M1041 486L1044 493M441 689L427 681M1150 541L1125 544M919 660L894 665M1260 571L1260 565M1015 438L1042 434M1359 704L1393 699M1165 572L1184 569M486 556L496 563M1060 344L1082 338M1130 457L1152 459M1283 655L1254 657M969 676L986 683M1364 687L1391 686M745 621L756 615M1049 562L1071 556M1236 639L1231 644M848 654L866 651M615 595L636 590M992 646L968 643M1140 464L1130 457M1031 511L1024 516M1166 580L1188 574M1080 689L1076 697M477 649L484 656M1288 705L1284 696M1045 666L1024 665M942 710L1009 716M1070 413L1046 406M1034 609L1021 604M1231 547L1259 547M1460 588L1452 581M1230 692L1213 686M1521 655L1509 650M1081 532L1076 539M521 735L577 736M689 689L697 698M811 611L783 607M1015 438L1017 433M602 602L615 595M1373 607L1357 612M456 556L433 562M1066 462L1092 458M854 700L856 694M893 677L858 682M437 712L481 721M1381 614L1391 621M1137 747L1227 748M1441 675L1457 680M1305 641L1302 649M1048 457L1047 448M665 699L636 695M683 597L714 596M622 659L599 665M488 626L504 621M1091 372L1112 376M807 616L810 621M1127 610L1098 607M440 593L472 592M872 639L893 646M622 600L635 607M1288 627L1310 631M1038 426L1058 424M488 626L483 618M807 653L831 651M813 741L751 736M1152 642L1133 639M1467 650L1468 655M710 630L738 627M733 632L750 636M1518 609L1490 606M520 676L497 675M1120 526L1113 519M1116 433L1138 435M1071 556L1074 561M947 698L915 692M1525 684L1511 679M1068 500L1047 504M1034 649L1053 644M962 590L987 588M817 709L774 704M1286 584L1299 578M581 750L577 736M1395 628L1418 634M1333 696L1284 696M951 682L932 679M403 675L405 685M587 713L644 710M1107 567L1084 566M1014 472L1003 482M1045 666L1031 670M1056 540L1049 547M1030 358L1017 362M546 592L548 597M1103 423L1118 428M483 618L454 622M1213 630L1233 629M443 636L420 633M1015 438L1001 443M484 662L517 661M985 422L998 426M1024 449L1001 443M1191 589L1170 586M517 586L484 581M1130 457L1137 448M1083 396L1093 401M1003 399L987 403M536 713L546 703M1042 580L1058 576M1079 630L1066 623M1271 689L1249 699M1524 675L1519 663M1357 737L1368 725M954 629L978 631M1256 594L1277 592M989 433L1017 433M1125 552L1092 557M1470 673L1454 671M1078 663L1095 666M1228 664L1209 667M515 558L532 561M1099 528L1104 523M1084 512L1080 517M1281 649L1252 642M432 662L408 656M399 823L500 867M437 669L463 667M1079 442L1046 443M957 557L933 553M1019 413L1037 410M549 667L543 662M565 640L554 647M1077 350L1083 343M1061 524L1081 532M1134 488L1132 483M1096 562L1092 557M1079 442L1086 435M504 621L483 618M1035 521L1024 516M1041 486L1008 486M536 556L532 561M1374 632L1351 638M1096 594L1132 589M432 571L409 569M1357 627L1374 632M847 615L830 610M602 602L635 607M812 648L831 651M1499 675L1511 668M1079 367L1069 375M700 653L681 657M1254 929L1287 1029M1289 677L1310 682M1395 655L1402 659M678 652L669 643M544 693L507 698M1443 596L1439 602M1003 482L1029 476M1126 727L1147 718M1343 668L1307 668M1042 602L1021 604M1125 544L1144 550M1097 428L1118 428M502 604L527 601M502 614L511 608M1239 564L1265 560M1138 470L1163 472M637 638L613 637M1115 531L1139 529M1076 697L1104 691M940 649L968 643M820 664L828 657M1135 398L1104 394M440 631L465 626M669 643L643 643M1387 642L1351 638M1057 419L1023 421M482 702L490 711M1238 583L1236 592M1196 735L1227 748M920 644L941 637M854 714L817 709M783 631L809 636M614 624L627 632M1083 396L1073 404M724 653L745 649M949 641L941 637M1367 622L1391 621M1129 424L1125 417M441 689L407 692M1091 372L1069 375M1092 501L1075 505M1054 689L1076 697M867 604L899 604M1005 629L1028 632M1140 518L1161 512M1140 631L1103 632M1192 649L1218 648M914 725L855 729M1324 574L1319 567M1334 587L1314 584M1033 615L1059 611M1214 587L1191 589M1126 441L1111 438M1221 558L1234 553M1104 476L1107 485M471 550L490 543M622 659L653 655M471 550L499 548M1216 673L1253 676M1124 380L1086 381M1155 684L1177 683M651 762L581 750M1008 486L1026 483M1212 680L1213 686M1032 470L1029 476M1239 649L1218 648M1113 669L1105 674M1058 673L1029 674M1277 592L1293 588M989 433L998 426M509 592L490 594M1143 599L1161 601M981 522L1001 515M807 616L811 611M892 704L903 715M493 644L483 640M1091 452L1092 458M1015 394L994 393M437 586L464 579M461 588L464 579M884 740L914 725M511 544L490 543M590 594L588 588M1351 618L1357 612M1265 560L1279 563M1056 540L1038 532M876 625L861 629M884 740L855 729M1237 571L1260 571M1151 535L1115 531M1124 560L1140 565M1063 483L1060 490M606 631L613 637M1405 707L1429 719M809 636L813 643M1183 621L1153 625M1213 630L1193 629M1143 599L1140 604M1022 679L1045 681M1128 581L1132 589M1060 429L1077 421M1096 594L1122 600M607 655L591 658M399 823L515 837M1192 637L1211 641M768 661L805 660M1116 433L1086 435M515 538L511 544M1129 672L1113 669M1437 612L1470 609M957 552L933 548M447 524L441 532M1235 670L1259 669M1096 562L1074 561M783 631L768 625M681 608L702 605M1079 442L1103 442M1103 341L1083 343M1068 500L1069 494M1080 522L1080 517M1021 569L1028 561M1390 636L1374 632M1127 649L1106 644M999 462L1013 459M1303 614L1304 623M627 632L606 631M748 661L765 668M1001 515L1024 516M1254 929L1187 1029M649 678L620 684M1283 672L1280 667M942 660L919 660M433 674L453 676M884 740L813 741M1044 588L1025 591M1066 462L1066 455M1054 689L1014 688M1060 344L1039 346M594 671L572 677M1339 609L1357 612M658 667L696 667M1183 621L1153 619M1157 707L1147 718M511 608L527 601M1526 614L1507 616M1063 590L1092 589M1323 592L1314 584M1103 423L1097 428M551 623L580 621M1140 631L1129 624M428 696L401 701M1314 584L1299 578M416 591L411 595M979 626L1005 629M471 550L435 547M992 530L1026 527M587 713L536 713M409 569L337 574M649 678L666 676M1150 541L1116 540M1190 493L1177 498M447 524L426 522M978 554L981 562M407 577L337 574M867 604L853 597M1116 433L1111 438M1339 651L1357 656M702 605L680 604M1130 688L1137 681M1191 589L1213 582M1005 629L1004 635M1288 627L1304 623M1192 637L1171 637M545 552L536 556M768 625L791 624M1195 718L1157 707M1014 688L1000 679M1114 453L1130 457M1520 628L1480 625M570 591L588 588M1033 463L1066 462M1091 362L1079 367M1184 668L1170 677M986 683L1000 679M1351 662L1335 658M1467 650L1466 644M1163 465L1185 468M493 644L477 649M1214 528L1212 533M1026 501L1044 499M1083 543L1074 548M1000 674L1000 679M639 611L635 607M1399 584L1376 587M541 637L526 630M1140 698L1130 688M1074 548L1092 557M1056 540L1076 539M990 583L1015 577M1097 494L1122 496M1129 424L1145 421M1391 686L1369 694M1321 617L1330 624M1509 650L1521 644M1504 659L1486 652M807 653L828 657M658 667L677 663M1269 637L1248 634M513 691L532 688M1289 608L1258 614M1427 660L1437 656M957 655L930 655M1078 581L1112 578M1165 567L1144 570M960 601L941 598M1190 550L1193 556M1142 478L1162 477M1231 547L1234 553M997 565L999 572M657 589L636 590M1028 561L998 559M1478 717L1500 709M831 604L853 597M1498 805L1587 827M1054 689L1033 686M1243 576L1262 578M919 660L890 657M453 536L441 532M1191 589L1171 591M1373 598L1402 599M826 626L810 621M866 762L921 789M979 626L993 620M966 585L969 575M768 758L751 736M517 671L497 675M1113 573L1145 577M475 538L495 535M927 673L947 675M839 813L708 799M897 671L915 667M1008 520L1001 515M1284 696L1323 704M966 585L987 588M1357 573L1355 581M1029 476L1026 483M1126 727L1082 738M511 655L484 656M916 589L932 586M1113 573L1084 566M1048 400L1030 402M612 698L573 700M1395 655L1360 651M1129 672L1117 678M1391 686L1387 679M942 660L957 655M602 575L567 572M1494 644L1466 639M1391 686L1405 681M1214 528L1198 523M1196 676L1170 677M1097 600L1122 600M1149 506L1160 501M726 689L721 680M507 627L529 624M477 675L475 681M1209 762L1226 782M1033 551L1056 552M1433 585L1460 588M1227 704L1190 698M1091 452L1114 453M525 666L499 667M614 624L580 621M1221 558L1239 564M399 521L426 522M1127 610L1140 604M1449 623L1430 620M581 750L582 782M1169 485L1134 488M1096 594L1092 589M890 657L909 655M1071 571L1087 576M708 799L582 782M1140 518L1123 514M594 671L593 680M493 644L517 640M630 620L603 615M1494 644L1524 638M1334 587L1355 581M577 684L593 680M1147 406L1115 408M1076 539L1096 540M678 652L700 653M460 561L496 563M515 558L513 552M1527 947L1457 905M1084 512L1113 519M1487 835L1334 864M1189 533L1190 527M1433 585L1445 591M1381 614L1357 612M409 749L397 732M1091 452L1066 455M996 652L992 646M408 656L433 649M1211 538L1213 544M1236 639L1248 634M1518 609L1513 604M1237 571L1243 576M1108 615L1083 611M1003 399L981 397M1195 518L1198 523M1082 490L1112 490M866 651L862 645M1184 668L1209 667M1097 494L1082 490M1011 549L1049 547M580 621L578 616M1302 764L1226 782M1127 644L1133 639M1129 424L1139 428M551 623L570 627M759 690L753 698M554 647L578 646M470 568L479 576M703 750L637 733M1033 725L1009 716M515 538L495 535M1254 929L1154 898M1074 548L1056 552M1524 638L1509 633M1120 526L1099 528M1387 642L1382 648M962 590L932 586M399 823L411 788M1059 532L1026 527M1438 683L1457 680M548 597L526 595M996 387L1021 387M1169 485L1184 480M529 612L502 614M807 653L786 654M847 615L847 624M521 579L484 581M971 651L968 643M907 649L930 655M1478 717L1522 726M791 624L808 629M881 691L854 700M1060 490L1069 494M408 532L441 532M420 633L397 634M725 637L735 644M905 619L897 624M587 713L642 719M1121 501L1160 501M657 628L680 624M734 863L939 907M726 719L685 716M1299 578L1303 574M1049 636L1053 644M1387 642L1405 648M1086 616L1066 618M1236 610L1218 604M462 661L463 667M653 655L678 652M724 621L738 627M1211 576L1243 576M698 620L699 614M1022 638L1029 642M1059 705L1076 697M1034 609L1042 602M665 827L578 806M1050 475L1029 476M1104 476L1132 483M990 448L962 446M1193 629L1171 637M1357 656L1360 651M1041 696L1022 707M1228 634L1211 641M495 652L511 655M1514 748L1587 776M1140 631L1148 636M1129 672L1141 666M1087 480L1107 485M551 623L553 618M1071 571L1084 566M1438 629L1465 628M1304 602L1278 604M527 601L545 608M1370 667L1343 668M1079 442L1062 439M1231 682L1213 686M506 598L526 595M1021 604L1011 599M1450 666L1449 661M1516 701L1587 676M539 642L517 640M673 681L666 676M1245 687L1213 686M1195 502L1177 498M936 593L941 598M1082 490L1069 494M1172 558L1165 567M820 679L809 687M1044 374L1069 375M456 599L472 592M1324 574L1303 574M1060 344L1061 337M985 660L1005 657M1272 712L1314 714M1003 482L981 483M1096 594L1134 595M1184 594L1211 593M1060 490L1083 485M710 630L690 631M1001 662L1025 656M1092 501L1068 500M432 662L463 667M1047 448L1025 444M1296 594L1277 592M533 570L547 576M1011 549L1002 554M461 588L484 581M1190 550L1211 549M1157 707L1190 698M1492 620L1507 616M447 524L456 517M559 560L532 561M570 591L590 594M768 625L745 621M1310 631L1330 624M1370 667L1370 675M459 733L521 735M1212 680L1253 676M1416 604L1402 599M1013 407L1030 402M1008 520L1035 521M674 635L660 639M1485 670L1454 671M1058 367L1067 362M1058 673L1077 670M630 620L654 618M495 652L517 645M1154 672L1163 666M1418 634L1445 639M1057 516L1080 517M1381 614L1367 622M1078 581L1110 586M1062 356L1067 362M934 688L981 689M1046 406L1030 402M1033 615L1034 609M1333 633L1374 632M637 733L577 736M831 604L867 604M1057 650L1046 655M1214 659L1193 662M1062 356L1077 350M458 612L454 622M653 655L646 648M1153 660L1182 658M1014 472L1018 466M1026 501L1010 495M1049 547L1022 540M814 693L856 694M780 618L807 616M1107 485L1083 485M552 631L570 627M1189 564L1172 558M1082 490L1083 485M426 522L437 515M1071 556L1074 548M1208 598L1211 593M1233 533L1212 533M1409 615L1405 609M500 867L693 901M1284 696L1303 690M1418 685L1405 681M1014 472L977 473M435 547L441 539M718 774L829 784M866 762L829 784M1015 394L1035 395M1189 564L1184 569M1163 465L1138 470M1381 614L1351 618M1521 655L1486 652M963 489L985 493M1283 655L1281 649M637 638L674 635M739 678L710 672M658 667L647 673M502 681L497 686M1143 851L1334 864M1370 675L1338 673M1441 675L1454 671M1422 665L1402 659M1104 691L1118 683M505 567L532 561M993 639L1029 642M1321 617L1351 618M581 750L491 773M826 626L826 632M1427 660L1418 654M804 674L782 672M1140 518L1140 511M1032 470L1014 472M1010 495L981 500M1102 761L1152 798M783 631L758 629M1062 356L1088 356M998 426L977 428M866 762L945 739M653 655L632 653M724 667L748 661M1355 581L1335 579M888 610L858 610M1324 679L1310 682M1107 567L1124 560M921 624L931 633M1104 523L1080 517M944 624L954 629M602 575L573 578M429 552L456 556M957 557L981 562M724 667L696 667M1177 683L1213 686M1130 457L1109 460M1116 433L1118 428M457 642L483 640M1096 562L1084 566M1192 649L1157 648M1152 642L1127 644M919 603L941 598M562 724L642 719M1281 649L1280 640M893 677L877 671M569 596L548 597M1100 719L1058 716M1255 606L1278 604M1420 677L1387 679M471 550L467 543M1055 661L1045 666M644 710L665 699M837 672L804 674M1518 609L1522 599M657 628L637 627M1420 677L1405 681M1470 609L1429 608M1287 735L1227 748M1239 618L1223 614M1522 691L1516 701M708 677L666 676M1025 591L1006 593M1138 435L1164 429M1071 571L1062 565M440 593L411 595M992 577L969 575M805 660L828 657M578 806L708 799M942 710L964 720M1485 670L1495 665M1449 623L1438 629M739 678L736 684M1125 552L1101 550M1062 565L1050 569M936 666L915 667M759 690L779 696M1466 644L1445 639M1424 598L1402 599M921 624L924 617M1066 450L1096 447M419 765L491 773M1053 644L1078 643M813 741L768 758M1082 738L1046 752M409 563L431 557M1424 736L1384 752M460 561L486 556M951 682L981 689M1026 584L1059 584M620 689L579 692M1115 531L1096 540M1113 519L1123 514M1079 442L1066 450M1032 470L1052 469M1140 464L1109 460M947 698L892 704M1152 497L1160 501M419 765L337 776M1092 501L1121 501M1209 762L1137 747M1189 564L1214 563M1433 585L1411 591M939 907L940 869M465 626L454 622M1370 675L1387 679M544 587L521 579M1042 622L1050 629M1259 661L1280 667M826 626L861 629M1163 472L1162 477M1359 704L1323 704M939 907L693 901M599 665L621 665M488 571L506 573M443 636L440 631M1450 750L1517 764M1028 632L1004 635M1235 670L1253 676M1351 662L1370 667M1153 625L1129 624M503 919L500 867M539 683L556 688M1457 905L1587 928M1304 602L1330 597M1367 622L1351 618M621 648L622 642M1304 602L1289 608M1138 470L1119 467M627 632L637 627M1239 618L1258 614M1004 740L945 739M1057 396L1073 404M411 788L491 773M1125 544L1096 540M1487 599L1490 606M1034 609L1006 608M1050 510L1075 505M768 661L765 668M1013 459L994 458M622 659L632 653M523 618L553 618M1429 719L1479 735M1321 617L1304 623M1066 450L1046 443M467 543L441 539M888 610L908 610M1019 413L1045 415M457 642L477 649M963 489L987 488M1475 688L1436 694M1228 664L1238 660M1283 574L1260 571M1190 550L1190 540M854 714L787 716M1492 620L1480 625M484 662L511 655M662 600L635 607M1066 455L1066 450M411 788L337 776M480 600L502 604M475 681L497 675M581 653L566 660M961 563L932 563M599 665L591 658M1000 674L978 672M1152 497L1177 498M1028 456L1013 459M966 585L932 586M637 733L642 719M1266 632L1253 628M1011 599L984 600M1054 689L1041 696M1184 602L1194 606M1190 493L1210 492M1427 660L1402 659M829 784L921 789M398 649L433 649M1289 608L1318 611M1195 502L1211 499M1026 501L1017 506M441 689L455 682M708 677L710 672M493 588L472 592M854 714L854 700M969 538L969 532M673 681L700 681M1380 658L1402 659M1437 612L1430 620M937 612L919 603M1522 726L1500 709M969 532L961 526M811 611L830 610M1029 674L1031 670M820 664L789 663M1249 699L1284 696M657 589L660 594M1104 394L1115 403M1124 380L1099 386M562 565L590 568M660 594L638 597M1211 641L1218 648M927 673L932 679M1063 483L1029 476M1272 712L1257 724M1031 511L1001 515M511 608L545 608M988 613L972 620M934 688L915 692M888 685L915 692M532 688L497 686M506 598L490 594M1097 600L1070 599M1113 573L1112 578M533 570L567 572M482 702L445 703M440 631L435 626M1390 636L1409 642M1303 690L1310 682M960 601L966 610M893 677L897 671M1042 622L1066 623M1099 470L1104 476M1216 673L1209 667M529 612L523 618M1059 532L1038 532M617 611L635 607M807 653L812 648M1231 682L1245 687M752 711L724 703M400 600L411 595M907 649L893 646M1103 423L1077 421M479 576L506 573M1184 668L1163 666M1387 642L1365 644M426 602L420 610M1184 594L1184 602M1418 670L1454 671M418 526L397 527M1333 696L1323 704M1080 522L1104 523M1231 682L1253 676M1038 384L1021 387M399 615L421 616M1279 622L1304 623M588 629L568 635M1490 612L1470 609M1254 929L1337 1029M1025 656L1024 665M539 565L532 561M1140 631L1110 639M1130 688L1153 691M1033 615L1042 622M1139 412L1110 413M1255 606L1289 608M876 625L877 617M456 556L486 556M1042 556L1056 552M1116 540L1115 531M426 602L400 600M1418 685L1438 683M601 650L578 646M495 652L477 649M517 661L511 655M1195 502L1225 504M1107 567L1096 562M1169 606L1178 610M597 641L601 650M1068 656L1078 663M1382 648L1395 655M398 555L431 557M494 749L409 749M1359 704L1362 714M997 669L978 672M1317 674L1338 673M1208 598L1184 602M569 596L574 601M413 643L398 640M940 569L961 571M997 565L981 562M1494 864L1587 827M1260 571L1262 578M460 561L450 566M1252 642L1280 640M1464 615L1470 609M432 662L398 663M890 657L866 651M657 628L627 632M420 633L435 626M1017 433L990 438M897 671L877 671M554 647L539 642M1066 387L1099 386M992 530L961 526M710 630L725 637M1214 659L1209 667M1050 475L1073 471M939 523L961 526M1228 664L1259 661M1511 668L1524 675M969 676L1000 679M1266 632L1248 634M470 568L488 571M881 691L915 692M1034 649L1029 642M708 677L700 681M1153 660L1163 666M914 725L964 720M1413 626L1395 628M1282 662L1307 668M748 661L761 654M541 637L568 635M745 649L777 649M1153 619L1135 614M1310 631L1304 623M1038 426L1023 421M1066 462L1052 469M1334 587L1323 592M523 618L502 614M1420 677L1438 683M438 618L435 626M1214 659L1182 658M1152 642L1180 644M888 685L858 682M997 565L1021 569M493 644L495 652M457 642L474 632M1140 565L1165 567M1310 631L1287 634M977 549L1002 554M1353 589L1354 596M1151 535L1171 536M1209 762L1227 748M1135 398L1115 403M1294 567L1279 563M1068 500L1044 499M680 624L698 620M1255 606L1246 599M1158 530L1171 536M651 762L582 782M1466 639L1445 639M1477 784L1587 776M1227 704L1230 692M999 462L1018 466M1236 639L1211 641M677 617L650 623M476 606L441 609M1138 435L1166 441M486 556L513 552M814 693L779 696M1490 612L1490 606M1035 367L1014 369M930 963L1254 929M1045 681L1033 686M1281 649L1262 652M1265 555L1243 558M1254 929L1237 1029M457 642L443 636M427 681L405 685M649 678L643 686M1071 571L1058 576M1026 501L1047 504M1050 475L1052 469M1078 643L1110 639M1150 541L1190 540M493 588L490 594M1326 605L1318 611M429 552L431 557M1170 677L1177 683M866 651L868 656M1190 493L1195 485M1137 681L1154 672M523 651L547 652M593 680L620 684M1169 485L1195 485M431 655L432 662M1357 656L1335 658M837 672L820 664M409 749L337 776M966 518L939 523M549 667L537 671M1391 686L1402 691M607 655L601 650M1153 625L1153 619M1368 725L1320 727M398 649L408 656M1033 725L1058 716M1066 387L1062 379M1108 708L1058 716M1106 366L1091 372M1109 627L1129 624M1182 658L1164 653M960 668L978 672M1233 629L1253 628M996 652L1012 649M1004 740L1033 725M1015 577L1026 584M1103 632L1109 627M1359 704L1333 696M1124 560L1092 557M1032 470L1050 475M698 620L703 625M1004 740L1046 752M657 628L637 638M531 657L547 652M1380 658L1360 651M864 675L877 671M836 687L843 678M1284 683L1257 681M1042 580L1026 584M858 682L864 675M809 636L833 638M890 657L866 661M1212 654L1182 658M1367 622L1395 628M465 626L474 632M1393 699L1436 694M603 615L578 616M1333 696L1303 690M476 606L511 608M872 639L879 634M1325 688L1310 682M1373 607L1405 609M1154 898L940 869M789 726L787 716M1227 704L1195 718M458 612L476 606M1238 583L1264 586M909 638L901 634M1153 625L1140 631M947 698L942 710M724 615L724 621M1016 534L1026 527M1045 415L1057 419M1033 463L1028 456M1152 588L1132 589M1086 417L1057 419M1195 518L1160 524M1163 465L1140 464M750 636L770 635M1214 659L1212 654M745 621L724 615M622 600L638 597M938 529L969 532M1169 485L1166 493M1087 576L1112 578M517 586L493 588M1113 573L1071 571M1009 716L1058 716M1390 636L1418 634M420 610L399 615M987 588L1009 587M637 638L643 643M1458 603L1443 596M993 701L1041 696M594 671L599 665M1245 623L1279 622M1001 515L989 509M405 685L337 676M1239 649L1233 653M1351 618L1338 614M1264 586L1236 592M1468 655L1449 661M484 662L462 661M888 610L867 604M602 602L590 594M1482 679L1499 688M1058 367L1079 367M1059 705L1041 696M745 649L742 656M1180 644L1211 641M1020 556L1002 554M660 594L636 590M1033 725L1100 719M1050 475L1063 483M1163 631L1193 629M1236 592L1246 599M1108 708L1100 719M645 583L636 590M988 613L984 608M426 602L441 609M1390 806L1323 834M443 636L474 632M1137 448L1126 441M765 683L770 676M952 578L966 585M964 636L949 641M1140 511L1161 512M783 631L808 629M1254 929L1137 1029M1334 644L1351 638M399 615L418 621M1353 589L1391 590M960 614L972 620M477 675L497 675M1033 725L964 720M1211 576L1188 574M1091 452L1066 450M1487 599L1501 595M1087 576L1058 576M1010 495L995 504M612 698L665 699M1271 689L1284 683M1465 594L1487 599M591 635L568 635M1487 637L1509 633M1370 675L1398 672M1180 615L1156 611M940 649L930 655M1024 449L1047 448M1425 647L1437 656M1025 591L1034 596M1034 609L1057 605M1165 572L1166 580M855 729L903 715M1129 424L1118 428M533 570L521 579M409 563L337 574M1021 569L999 572M1450 750L1377 768M1339 609L1338 614M1283 655L1302 649M597 641L621 648M981 500L985 493M579 692L601 686M1090 649L1102 653M1324 574L1335 579M1086 409L1086 417M1478 717L1454 708M578 806L582 782M1369 694L1402 691M687 706L724 703M697 637L717 646M1010 495L1024 492M544 587L546 592M531 657L543 662M969 538L952 545M1436 694L1402 691M1086 435L1097 428M1147 583L1132 589M1304 602L1268 599M1180 644L1171 637M890 657L894 665M1088 356L1118 353M471 550L486 556M1092 678L1077 670M952 578L961 571M1110 586L1132 589M952 578L932 578M432 571L450 566M1141 666L1163 666M1063 483L1087 480M1101 550L1092 557M1405 707L1359 704M1006 695L981 689M951 682L986 683M664 688L665 699M1189 533L1211 538M1097 465L1092 458M581 653L601 650M1083 396L1079 392M426 602L399 607M646 648L632 653M1467 650L1425 647M1056 540L1022 540M465 626L483 618M698 620L677 617M1042 580L1059 584M1467 650L1494 644M408 532L418 538M1233 629L1248 634M1257 681L1231 682M1458 603L1487 599M1140 464L1138 470M447 524L418 526M1086 381L1099 386M1288 627L1253 628M1504 659L1495 665M1437 656L1418 654M1001 662L997 669M964 720L903 715M1260 571L1294 567M1297 561L1265 560M1139 524L1160 524M1079 630L1109 627M1418 685L1402 691M477 675L480 670M1324 679L1338 673M1055 661L1046 655M1163 465L1163 472M1184 602L1161 601M1002 454L980 453M1091 362L1109 357M1097 600L1098 607M1125 552L1125 544M927 673L936 666M1128 581L1112 578M1279 622L1258 614M1215 610L1194 606M912 681L934 688M1237 571L1239 564M996 652L1005 657M579 692L612 698M702 605L719 602M681 657L677 663M826 626L850 633M546 703L490 711M1055 661L1068 656M952 578L946 582M673 681L689 689M453 676L475 681M1429 719L1362 714M1038 384L1056 391M1143 851L1152 798M971 651L992 646M1465 594L1445 591M673 681L643 686M1060 344L1050 350M1330 597L1354 596M1041 486L1026 483M1245 623L1239 618M502 614L504 621M966 518L937 516M1140 518L1139 524M1283 655L1316 656M892 704L854 700M1253 676L1283 672M1169 606L1156 611M862 645L831 651M1289 677L1317 674M614 624L630 620M1022 679L1000 679M1045 666L1058 673M985 416L1003 418M1201 613L1178 610M909 638L893 646M972 620L945 618M615 595L590 594M502 614L483 618M930 963L939 907M947 675L932 679M1218 604L1246 599M1437 612L1405 609M919 660L936 666M1514 748L1587 726M1314 714L1257 724M1061 684L1033 686M1252 642L1262 652M1125 552L1146 555M1482 679L1475 688M677 617L699 614M739 678L765 683M1172 547L1190 540M1195 718L1257 724M990 448L1001 443M964 636L968 643M1121 501L1122 496M559 560L539 565M472 592L490 594M939 907L714 966M1050 569L1058 576M1422 665L1449 661M1420 677L1441 675M451 604L441 609M1428 580L1433 585M578 806L515 837M409 563L409 569M1084 512L1050 510M869 667L844 665M1042 602L1057 605M1022 638L1028 632M481 721L521 735M1070 413L1045 415M1060 429L1086 435M1026 527L1038 532M1143 851L929 839M1122 600L1117 605M630 620L637 627M1062 379L1069 375M568 635L570 627M837 672L877 671M1500 709L1454 708M972 458L994 458M609 582L575 583M1190 540L1171 536M780 618L810 621M1138 435L1111 438M426 602L440 593M460 529L441 532M1416 604L1439 602M839 813L929 839M467 543L435 547M1086 381L1062 379M1145 577L1147 583M942 710L903 715M1000 674L1031 670M921 624L897 629M438 618L418 621M1265 555L1265 560M1084 566L1074 561M1316 656L1335 658M523 651L554 647M643 686L620 684M1010 624L979 626M1377 768L1384 752M1355 581L1385 580M669 643L646 648M571 672L578 665M1377 768L1477 784M1092 589L1059 584M1086 409L1110 413M1195 502L1181 509M1062 356L1030 358M1245 623L1213 621M620 689L601 686M893 677L912 681M1054 595L1034 596M993 701L947 698M1518 609L1507 616M976 478L981 483M892 704L881 691M1424 598L1411 591M1013 407L996 411M1109 627L1108 622M1279 614L1279 622M753 698L724 703M554 647L547 652M718 774L703 750M997 565L977 566M907 649L940 649M1397 667L1422 665M1310 636L1305 641M1438 683L1437 688M579 692L544 693M1066 618L1087 622M1066 387L1038 384M578 665L566 660M1247 804L1323 834M1181 509L1176 516M1487 695L1522 691M603 615L580 621M432 642L457 648M1324 679L1339 684M505 567L539 565M1137 747L1046 752M1055 808L1143 851M1086 381L1091 372M1138 435L1126 441M1189 580L1213 582M993 639L968 643M893 677L864 675M657 628L674 635M450 654L457 648M1153 691L1177 683M1215 610L1223 614M427 681L455 682M1289 677L1257 681M658 667L684 672M992 646L1012 649M1107 699L1104 691M1169 485L1190 493M582 782L491 773M1092 501L1069 494M578 806L491 773M1003 399L1030 402M1339 609L1318 611M976 478L1014 472M972 513L953 510M1487 637L1489 629M1130 688L1104 691M437 712L490 711M572 677L577 684M1080 689L1104 691M864 675L843 678M1092 501L1097 494M1049 636L1029 642M1430 620L1409 615M997 669L1024 665M1003 399L1013 407M969 532L991 536M1443 596L1445 591M440 593L437 586M897 671L927 673M1049 547L1056 552M399 547L418 538M588 629L580 621M1098 607L1083 611M841 643L833 638M1006 695L1014 688M433 562L431 557M850 633L833 638M765 668L770 676M398 649L413 643M1048 457L1066 462M544 587L575 583M1174 448L1154 445M779 696L774 704M1184 668L1216 673M708 799L829 784M480 670L453 676M1265 560L1243 558M797 679L780 686M591 635L613 637M1014 472L1029 476M1142 478L1132 483M969 676L978 672M700 653L724 653M1362 714L1320 727M1086 435L1065 434M1283 574L1262 578M866 661L828 657M745 621L724 621M969 538L947 540M539 683L546 676M811 611L808 604M523 618L504 621M1022 638L1004 635M991 536L980 543M1145 577L1112 578M1046 406L1073 404M813 741L866 762M809 636L789 637M1212 654L1233 653M426 602L456 599M418 621L435 626M567 572L547 576M1316 656L1339 651M1078 581L1087 576M1014 688L1033 686M1425 647L1418 654M1002 454L994 458M1465 594L1458 603M972 620L993 620M1176 437L1138 435M841 643L862 645M1050 629L1066 623M750 636L735 644M515 558L536 556M643 643L622 642M703 750L751 736M964 496L981 500M952 545L957 552M1092 589L1132 589M1116 506L1140 511M1055 808L1023 787M1424 598L1439 602M848 654L831 651M1031 670L1024 665M990 583L966 585M1086 616L1087 622M1156 611L1135 614M697 637L725 637M1104 345L1083 343M1190 690L1230 692M1238 583L1213 582M997 669L1031 670M1005 353L1030 358M1125 544L1101 550M670 612L699 614M808 629L826 632M1499 675L1511 679M972 513L937 516M460 561L433 562M407 720L459 733M921 624L897 624M1351 662L1357 656M768 661L761 654M1239 564L1243 558M1227 704L1272 712M625 585L588 588M826 626L808 629M1427 660L1449 661M1016 534L1038 532M866 762L981 761M419 637L420 633M858 682L881 691M1390 604L1373 598M1370 667L1397 667M1152 642L1157 648M1236 592L1211 593M1265 555L1234 553M1280 640L1287 634M805 660L820 664M938 529L961 526M578 616L553 618M1042 622L1030 628M908 610L905 619M493 644L457 642M999 462L991 468M1271 689L1284 696M981 500L954 502M981 522L1008 520M1110 586L1092 589M1058 673L1045 681M1355 581L1376 587M1324 679L1354 679M1457 905L1587 878M1190 527L1158 530M1180 615L1201 613M1060 429L1042 434M1381 614L1405 609M1464 615L1430 620M649 678L647 673M636 590L625 585M1166 493L1177 498M1323 592L1296 594M433 674L403 675M1139 428L1118 428M408 656L398 663M1107 567L1144 570M678 652L646 648M529 612L545 608M418 621L421 616M1286 584L1293 588M724 667L741 670M1059 611L1083 611M450 654L462 661M1097 465L1109 460M1084 512L1075 505M583 607L545 608M1021 569L1035 574M1057 419L1058 424M1003 482L1008 486M552 631L568 635M1357 627L1367 622M1236 525L1198 523M1022 638L993 639M992 530L991 536M416 542L441 539M1073 471L1066 462M1050 475L1072 477M1070 413L1086 409M1118 353L1077 350M1017 362L1046 362M992 646L1029 642M1214 587L1211 593M1499 688L1511 679M797 679L765 683M1042 580L1015 577M942 660L936 666M530 547L499 548M964 720L1009 716M1218 648L1233 653M1129 672L1154 672M1272 712L1288 705M993 639L1004 635M587 713L546 703M476 606L451 604M736 684L759 690M597 641L613 637M399 547L408 532M581 653L554 647M724 667L710 672M503 919L693 901M1153 593L1132 589M1457 633L1418 634M1059 705L1022 707M862 645L893 646M1130 619L1135 614M1283 655L1262 652M700 681L666 676M429 552L435 547M513 691L497 686M1399 584L1428 580M1237 571L1260 565M981 761L1046 752M484 662L484 656M964 636L993 639M1102 761L1046 752M526 630L529 624M1075 636L1078 643M513 691L507 698M1150 541L1151 535M433 674L437 669M1214 528L1233 533M780 643L789 637M962 590L966 585M1086 417L1125 417M1090 649L1078 643M697 646L669 643M1398 672L1418 670M588 629L570 627M1166 580L1145 577M1195 718L1147 718M583 607L617 611M1062 439L1065 434M1005 544L980 543M969 676L951 682M1165 572L1188 574M1056 391L1079 392M724 703L774 704M1125 392L1104 394M1116 433L1139 428M801 668L820 664M1186 475L1162 477M828 657L844 665M736 684L765 683M914 725L903 715M587 713L562 724M966 518L972 513M1397 667L1398 672M1060 429L1058 424M517 661L525 666M1213 621L1223 614M1192 649L1164 653M1077 421L1058 424M689 689L726 689M1234 553L1243 558M1399 584L1408 579M646 648L643 643M1343 668L1370 675M1316 646L1302 649M1059 611L1057 605M1047 504L1050 510M1462 699L1500 709M1236 639L1252 642M1214 659L1238 660M995 504L954 502M1115 403L1093 401M638 597L635 607M839 813L921 789M1075 636L1103 632M1468 655L1437 656M674 635L690 631M1090 649L1127 649M1107 699L1076 697M837 672L843 678M1021 569L1015 577M1517 764L1514 748M484 581L506 573M1390 604L1405 609M517 661L499 667M1221 558L1211 549M978 554L957 552M496 563L532 561M517 661L543 662M872 639L909 638M1247 804L1341 787M546 592L526 595M1134 488L1122 496M1457 633L1489 629M940 649L949 641M621 648L646 648M1024 449L1002 454M804 674L797 679M1196 676L1177 683M1032 470L1018 466M1464 615L1490 612M990 583L992 577M750 636L757 644M1049 562L1050 569M984 608L999 603M1127 610L1108 615M1125 552L1144 550M432 571L453 572M1471 661L1504 659M483 640L517 640M1140 698L1153 691M1494 644L1521 644M1070 413L1086 417M969 467L999 462M1140 604L1156 611M494 749L459 733M1055 661L1025 656M1498 805L1477 784M1143 851L940 869M1236 610L1223 614M1096 447L1115 448M1166 580L1189 580M1511 668L1495 665M1092 678L1072 680M1405 648L1409 642M745 649L761 654M867 604L858 610M587 713L573 700M1140 565L1151 560M1141 666L1154 672M1068 656L1057 650M981 522L992 530M993 701L942 710M1349 647L1339 651M457 642L432 642M502 681L497 675M495 652L523 651M1443 596L1411 591M426 602L451 604M549 667L571 672M912 596L883 600M1050 350L1039 346M1010 624L1030 628M533 570L539 565M1227 704L1249 699M502 614L480 612M1192 649L1211 641M940 649L920 644M801 668L782 672M1351 662L1343 668M1023 421L1058 424M517 671L520 676M1449 623L1465 628M984 594L962 590M1063 483L1026 483M1034 596L1006 593M803 700L817 709M1411 591L1445 591M1120 526L1139 524M921 624L945 618M1315 663L1316 656M621 648L632 653M1449 661L1437 656M1008 520L1001 525M1157 418L1125 417M1163 465L1152 459M1063 483L1083 485M1060 344L1077 350M1450 666L1422 665M1334 644L1339 651M1405 609L1429 608M533 570L505 567M1172 547L1190 550M653 655L681 657M1184 668L1193 662M549 667L525 666M993 701L1009 716M1214 659L1228 664M947 698L934 688M497 636L526 630M1134 488L1166 493M1260 539L1232 539M1153 454L1154 445M583 607L602 602M847 615L877 617M780 643L777 649M1154 445L1166 441M1289 608L1303 614M1351 618L1330 624M1283 574L1294 567M1042 434L1065 434M445 577L407 577M1339 684L1310 682M630 620L617 611M831 604L858 610M1180 644L1157 648M1283 655L1282 662M476 688L475 681M456 556L431 557M1010 624L1005 629M1045 415L1023 421M1314 584L1293 588M1236 610L1258 614M1125 475L1132 483M1215 519L1198 523M1262 578L1299 578M432 571L433 562M399 615L408 627M932 578L932 586M1257 724L1230 713M848 654L828 657M945 607L941 598M1255 606L1258 614M1115 408L1115 403M1034 649L1025 656M1062 356L1050 350M551 623L523 618M1259 547L1234 553M814 693L854 700M1282 662L1259 661M1135 657L1116 663M483 640L474 632M977 473L991 468M1405 648L1395 655M954 502L989 509M1142 653L1153 660M1324 679L1317 674M961 596L960 601M1152 798L1023 787M969 538L991 536M979 626L972 620M876 625L897 629M984 608L960 601M1323 592L1330 597M1470 673L1485 670M565 640L568 635M536 713L562 724M1499 675L1485 670M562 724L481 721M1013 618L1006 608M1042 602L1011 599M969 538L947 533M536 713L481 721M961 484L981 483M1057 396L1079 392M1140 698L1108 708M988 613L1006 608M1005 544L977 549M517 645L517 640M441 689L428 696M1517 764L1477 784M1338 673L1307 668M1099 528L1115 531M1289 677L1283 672M1054 595L1044 588M1083 396L1057 396M622 642L613 637M1218 604L1194 606M957 557L978 554M1192 649L1180 644M1145 421L1139 428M897 629L931 633M1405 707L1454 708M1126 727L1137 747M1464 615L1437 612M1231 547L1211 549M1122 600L1134 595M1279 622L1253 628M1208 570L1184 569M1494 864L1587 878M1046 406L1037 410M1086 409L1046 406M810 621L830 621M521 579L506 573M665 699L687 706M976 665L978 672M507 627L474 632M1349 647L1365 644M456 556L460 561M745 649L717 646M1010 624L993 620M1391 621L1413 626M569 596L546 592M998 559L981 562M797 679L782 672M443 636L432 642M937 612L924 617M1163 472L1142 478M581 653L607 655M683 597L660 594M697 637L710 630M1454 671L1471 666M662 600L638 597M1113 573L1144 570M1078 643L1106 644M1058 576L1059 584M1010 624L1042 622M1212 680L1231 682M428 696L460 695M1113 519L1080 517M1259 669L1283 672M413 643L433 649M1487 637L1457 633M1047 504L1075 505M1305 641L1287 634M807 616L830 621M883 600L888 594M1391 621L1409 615M1181 462L1152 459M1087 480L1083 485M1315 663L1307 668M1097 600L1117 605M841 643L872 639M1015 438L1025 444M921 789L981 761M1057 650L1078 643M726 689L697 698M1063 483L1072 477M1152 798L1226 782M780 686L779 696M1127 610L1156 611M447 524L477 524M1024 449L1025 444M1102 761L1209 762M745 649L757 644M839 813L829 784M511 544L499 548M1101 550L1074 548M1017 428L1038 426M463 667L453 676M1002 454L1028 456M1092 458L1109 460M1310 636L1351 638M1050 510L1057 516M1014 688L1041 696M1163 465L1181 462M942 660L960 668M1495 665L1471 666M969 676L960 668M431 655L433 649M964 496L985 493M697 646L700 653M1060 344L1083 343M1351 662L1315 663M1424 736L1479 735M1191 589L1189 580M650 662L621 665M1256 594L1236 592M1153 454L1152 459M977 549L978 554M1140 518L1113 519M768 661L786 654M1458 603L1490 606M559 560L536 556M879 634L861 629M1062 379L1038 384M1015 394L1003 399M658 667L650 662M976 478L1003 482M866 651L893 646M1487 695L1516 701M1058 673L1031 670M1077 421L1057 419M1107 658L1116 663M507 698L490 711M529 612L553 618M1357 627L1395 628M1004 740L964 720M1165 567L1184 569M698 620L724 615M894 665L915 667M1035 367L1046 362M936 593L912 596M1135 657L1153 660M637 733L562 724M961 563L981 562M409 749L337 726M1000 674L1029 674M1035 367L1044 374M1339 609L1326 605M1192 637L1228 634M876 625L897 624M996 652L971 651M814 693L809 687M1495 665L1519 663M1120 361L1091 362M533 570L562 565M1208 570L1214 563M1279 614L1258 614M1525 684L1499 688M408 532L337 524M1153 691L1190 698M507 627L504 621M1070 599L1096 594M1032 470L1033 463M579 692L556 688M421 511L403 514M1113 573L1087 576M1196 625L1183 621M908 610L899 604M1006 695L1041 696M551 623L529 624M854 714L892 704M665 827L708 799M1011 599L1006 593M1028 561L1020 556M705 728L685 716M639 611L630 620M1070 413L1057 419M1450 750L1514 748M1499 675L1470 673M1424 736L1357 737M912 596L899 604M416 591L420 583M820 679L843 678M1399 584L1391 590M1126 727L1100 719M1066 387L1086 381M1056 391L1021 387M912 596L888 594M1075 505L1096 508M1004 740L1082 738M927 673L915 667M1092 501L1122 496M1324 574L1299 578M1152 588L1153 593M1184 668L1196 676M1213 630L1192 637M960 668L947 675M515 558L486 556M1152 642L1148 636M450 654L484 656M1098 607L1108 615M1153 454L1183 454M1115 408L1093 401M546 676L537 671M1010 495L1008 486M1237 571L1208 570M1399 584L1433 585M1088 356L1091 362M1402 659L1418 654M1086 409L1093 401M1044 493L1044 499M752 711L787 716M1192 637L1180 644M1153 454L1137 448M426 602L411 595M567 572L573 578M1314 714L1288 705M734 863L500 867M957 557L957 552M919 660L915 667M839 813L734 863M1436 694L1437 688M1152 588L1147 583M650 662L677 663M1047 448L1028 456M1009 716L1022 707M433 562L409 569M708 677L721 680M1081 532L1099 528M966 585L946 582M909 638L931 633M1141 666L1113 669M428 696L407 692M441 539L418 538M780 643L813 643M999 572L969 575M481 721L490 711M593 680L601 686M1252 642L1269 637M993 701L981 689M1326 605L1358 601M1487 695L1499 688M1380 658L1370 667M1487 835L1587 827M831 604L822 598M1208 598L1218 604M1437 612L1409 615M1390 636L1395 628M1127 610L1135 614M1002 454L990 448M1482 679L1499 675M517 671L499 667M916 589L936 593M1145 577L1128 581M1163 472L1185 468M945 739L964 720M1211 576L1208 570M573 578L575 583M1078 581L1058 576M1504 659L1519 663M1150 541L1144 550M1078 663L1107 658M1057 396L1035 395M1271 689L1245 687M581 653L591 658M741 670L770 676M1080 689L1097 684M1137 448L1115 448M480 670L499 667M1418 685L1437 688M1236 525L1214 528M1120 526L1115 531M820 679L837 672M711 610L699 614M1253 676L1259 669M944 624L945 618M1019 413L1023 421M523 651L511 655M525 666L543 662M556 581L544 587M780 643L770 635M1181 509L1160 501M1061 524L1026 527M1001 662L1005 657M1041 486L1060 490M454 622L435 626M1116 540L1096 540M544 693L556 688M1364 687L1369 694M465 626L435 626M872 639L850 633M1441 675L1438 683M1304 602L1318 611M921 624L905 619M1211 538L1233 533M1086 409L1073 404M700 653L724 661M605 591L636 590M998 559L1002 554M1213 621L1201 613M977 549L957 552M940 569L952 578M1211 549L1193 556M1169 606L1161 601M1050 629L1030 628M1097 465L1073 471M1097 600L1080 604M453 536L441 539M416 542L435 547M1154 445L1126 441M703 750L581 750M814 693L803 700M531 657L511 655M548 597L554 603M556 581L575 583M1367 622L1330 624M999 572L992 577M1393 699L1369 694M1070 599L1042 602M1289 554L1265 560M1359 704L1369 694M703 750L768 758M437 669L453 676M1033 463L1052 469M523 651L517 645M759 690L780 686M1450 750L1384 752M557 613L545 608M599 665L578 665M1102 761L981 761M1303 574L1319 567M1190 690L1213 686M1370 667L1398 672M833 638L826 632M1304 602L1296 594M621 648L643 643M1471 661L1449 661M1364 687L1387 679M503 919L714 966M431 655L408 656M734 863L515 837M1487 695L1436 694M1031 511L1050 510M683 597L702 605M1487 835L1498 805M583 607L554 603M509 531L495 535M456 599L440 593M1304 623L1330 624M588 629L591 635M957 655L985 660M427 681L403 675M657 628L650 623M1183 621L1201 613M1438 629L1418 634M980 453L994 458M1099 470L1119 467M1028 561L1050 569M666 676L647 673M696 667L710 672M1460 588L1445 591M1157 648L1127 644M697 646L697 637M1140 698L1104 691M1475 688L1438 683M437 669L401 668M541 637L517 640M1196 735L1147 718M883 600L867 594M1104 394L1079 392M1196 625L1213 621M578 806L399 823M1391 621L1395 628M1212 680L1216 673M1382 648L1365 644M509 592L526 595M1266 632L1287 634M826 626L830 621M1195 518L1215 519M1172 558L1193 556M1135 657L1107 658M480 600L506 598M1034 649L1057 650M1153 593L1143 599M416 542L418 538M1289 677L1284 683M777 649L761 654M407 720L401 701M1030 358L1031 352M1227 704L1288 705M643 686L636 695M1048 457L1028 456M841 643L813 643M1254 657L1233 653M614 624L637 627M752 711L726 719M1153 593L1184 594M1049 636L1028 632M427 681L433 674M484 581L479 576M1256 594L1246 599M867 604L883 600M1127 649L1102 653M1049 562L1042 556M1110 586L1112 578M418 526L441 532M655 608L680 604M1208 598L1236 592M866 661L868 656M992 577L966 585M1113 669L1116 663M1125 392L1099 386M1310 636L1287 634M642 719L644 710M934 688L932 679M739 678L741 670M1181 509L1161 512M1091 452L1115 448M1182 658L1163 666M1190 493L1211 499M1325 688L1303 690M1092 678L1097 684M1520 628L1489 629M1190 527L1212 533M726 719L751 736M1137 681L1155 684M1391 595L1354 596M1038 426L1042 434M984 594L987 588M484 662L480 670M698 620L724 621M1494 644L1509 650M808 604L830 610M1433 585L1452 581M939 907L1154 898M836 687L856 694M1082 338L1083 343M1324 574L1357 573M759 690L765 683M531 657L566 660M607 655L632 653M1148 636L1171 637M1017 428L1023 421M877 617L897 624M1102 761L1137 747M1073 471L1099 470M1124 560L1146 555M1333 696L1369 694M1116 506L1096 508M419 637L413 643M1061 524L1099 528M1149 506L1121 501M786 654L777 649M1377 768L1517 764M877 617L847 624M1460 588L1489 591M605 591L615 595M1287 735L1319 749M1281 649L1302 649M1381 614L1409 615M1137 747L1082 738M1425 647L1405 648M847 624L861 629M854 714L855 729M966 518L961 526M1490 612L1518 609M1011 549L1020 556M768 625L738 627M1062 565L1074 561M493 644L517 645M1259 669L1228 664M697 637L660 639M1025 656L1046 655M820 679L836 687M961 571L969 575M407 577L420 583M985 422L1003 418M470 568L496 563M1272 712L1230 713M1391 621L1430 620M1264 586L1293 588M1095 666L1113 669M1028 561L1049 562M1157 648L1164 653M1314 714L1320 727M1163 631L1140 631M1137 681L1170 677M494 749L581 750M741 670L765 668M1047 448L1066 455M1147 583L1170 586M897 671L894 665M1033 463L1013 459M460 695L445 703M441 689L460 695M850 633L879 634M1021 604L999 603M1022 679L1014 688M1380 658L1397 667M655 608L670 612M1154 672L1170 677M1092 501L1116 506M961 596L941 598M1351 662L1380 658M1190 527L1198 523M1172 547L1144 550M426 522L456 517M407 720L437 712M1521 655L1519 663M1486 583L1460 588M397 584L407 577M888 685L912 681M1160 524L1139 529M909 638L879 634M753 698L726 689M1059 705L1058 716M1490 612L1507 616M1030 358L1046 362M1049 636L1050 629M1045 681L1072 680M954 629L931 633M1005 629L978 631M1416 604L1424 598M758 629L770 635M664 688L689 689M1079 442L1096 447M1060 344L1040 340M1334 587L1353 589M1390 806L1498 805M969 676L947 675M960 668L976 665M664 688L643 686M1033 615L1013 618M1212 680L1177 683M1154 898L1334 864M1140 464L1152 459M724 661L742 656M1413 626L1418 634M809 636L826 632M1018 377L994 372M1075 636L1110 639M1125 544L1116 540M1016 534L991 536M445 577L453 572M1471 661L1468 655M1088 356L1067 362M998 426L1003 418M1478 717L1479 735M458 612L438 618M803 700L854 700M1405 707L1462 699M418 538L441 532M1141 666L1135 657M1088 356L1077 350M1282 662L1280 667M1153 691L1155 684M1259 669L1259 661M602 602L574 601M961 563L977 566M1139 524L1113 519M1422 665L1418 670M984 600L960 601M1317 674L1307 668M1165 572L1144 570M1071 556L1056 552M445 577L437 586M1110 639L1133 639M597 641L578 646M1006 593L1009 587M1235 670L1216 673M1169 485L1162 477M1420 677L1418 670M1083 543L1056 540M809 687L780 686M1305 641L1280 640M1287 735L1257 724M1115 408L1139 412M1097 684L1118 683M952 545L980 543M1391 595L1391 590M1288 627L1279 622M612 698L636 695M407 720L337 726M777 649L757 644M1339 609L1358 601M1489 629L1509 633M1238 583L1243 576M1418 685L1391 686M783 631L791 624M1467 650L1445 645M1061 524L1057 516M572 677L571 672M881 691L836 687M1025 656L1012 649M1462 699L1516 701M916 589L888 594M1147 406L1115 403M403 514L437 515M1022 679L1033 686M1192 649L1182 658M748 661L724 661M1042 556L1020 556M1079 630L1103 632M1047 448L1046 443M1017 506L989 509M1108 622L1129 624M807 616L785 612M997 669L1000 674M940 649L971 651M908 610L924 617M1086 616L1108 622M1475 688L1457 680M1416 604L1405 609M511 544L539 540M637 733L581 750M869 667L877 671M1140 518L1160 524M999 572L1015 577M1130 688L1155 684M1083 543L1049 547M681 608L699 614M768 661L789 663M1283 574L1299 578M1145 577L1144 570M1062 356L1031 352M1150 541L1172 547M820 664L844 665M768 661L748 661M416 591L397 584M972 458L999 462M664 688L636 695M1264 586L1256 594M1011 599L1034 596M554 647L517 645M1087 622L1108 622M814 693L780 686M1146 555L1144 550M1341 787L1477 784M1233 629L1213 621M726 719L724 703M1266 632L1288 627M1387 679L1405 681M1462 699L1454 708M562 724L521 735M940 569L961 563M1044 374L1062 379M826 626L847 624M1180 615L1178 610M562 565L539 565M854 714L789 726M734 863L929 839M650 623L637 627M1399 584L1385 580M494 749L521 735M919 603L945 607M1160 501L1177 498M1124 560L1096 562M1494 864L1457 905M1211 538L1212 533M1425 639L1418 634M1071 571L1050 569M1288 705L1323 704M1140 464L1119 467M401 701L407 692M996 652L985 660M505 567L470 568M639 611L655 608M1070 599L1080 604M1333 696L1325 688M1310 636L1333 633M1059 611L1034 609M1018 377L1021 387M820 679L797 679M1113 519L1104 523M1068 656L1046 655M940 649L957 655M680 624L703 625M1016 534L1022 540M733 632L738 627M1511 668L1519 663M894 665L877 671M1091 372L1125 372M1152 588L1171 591M1213 630L1213 621M622 659L607 655M1097 684L1117 678M467 543L475 538M1048 457L1066 455M1254 657L1238 660M1140 604L1161 601M616 675L649 678M552 631L541 637M768 625L758 629M877 617L858 610M837 672L844 665M1416 604L1390 604M1211 593L1191 589M1134 488L1152 497M872 639L833 638M557 613L553 618M1068 656L1107 658M502 604L506 598M456 599L451 604M847 615L830 621M1193 662L1209 667M1073 471L1104 476M888 685L934 688M1142 653L1164 653M1116 433L1097 428M408 627L397 634M1354 596L1391 590M488 626L465 626M1239 564L1260 565M1330 597L1358 601M1321 617L1303 614M1468 655L1486 652M1192 649L1212 654M504 621L529 624M942 660L985 660M431 655L462 661M1127 649L1157 648M1066 387L1079 392M1181 509L1203 506M1526 614L1518 609M541 637L539 642M1208 598L1246 599M1405 707L1393 699M1271 689L1303 690M932 586L907 584M774 704L787 716M907 649L909 655M687 706L726 719M1357 737L1287 735M761 654L742 656M1057 396L1056 391M1055 808L1152 798M616 675L594 671M432 642L433 649M1140 631L1133 639M920 644L893 646M1106 366L1079 367M1142 653L1135 657M872 639L862 645M1048 400L1035 395M848 654L868 656M897 629L901 634M1117 678L1118 683M546 703L507 698M1011 549L1033 551M1033 615L1066 618M1083 543L1101 550M750 636L725 637M1193 662L1182 658M450 654L433 649M1296 594L1330 597M1070 599L1063 590M1092 678L1117 678M407 720L397 732M1256 594L1268 599M513 552L530 547M653 655L650 662M1058 367L1046 362M591 635L597 641M1092 557L1074 561M1211 538L1190 540M1062 356L1046 362M505 567L488 571M479 576L453 572M1339 651L1360 651M681 608L655 608M408 627L420 633M1058 367L1044 374M1466 644L1466 639M1092 501L1096 508M1190 540L1213 544M1425 647L1445 645M993 701L1006 695M665 827L515 837M616 675L647 673M683 597L675 591M992 646L993 639M999 462L994 458M1152 497L1121 501M683 597L695 592M571 672L537 671M601 686L620 684M897 629L861 629M1025 656L1005 657M1030 358L992 361M680 624L690 631M952 545L977 549M1061 684L1072 680M1192 637L1193 629M1103 442L1096 447M1156 611L1178 610M1073 404L1093 401M789 726L855 729M1316 646L1305 641M1464 615L1480 625M1055 808L929 839M1357 737L1319 749M1487 835L1323 834M936 666L960 668M530 547L511 544M669 643L660 639M1464 615L1449 623M985 377L1018 377M841 643L831 651M718 774L651 762M1527 947L1337 1029M1339 684L1354 679M916 589L912 596M1018 377L1038 384M912 681L932 679M1090 649L1068 656M567 572L590 568M432 662L401 668M1122 496L1112 490M1339 684L1325 688M1353 589L1355 581M1282 662L1315 663M1190 690L1177 683M464 579L453 572M662 600L660 594M1077 670L1105 674M1304 602L1326 605M433 674L401 668M1190 550L1213 544M1253 628L1248 634M1183 621L1180 615M1288 627L1287 634M1307 668L1280 667M1103 423L1129 424M837 672L869 667M964 636L941 637M1107 567L1140 565M780 643L757 644M888 594L867 594M1086 417L1110 413M1184 480L1162 477M680 624L677 617M1055 808L839 813M1138 435L1139 428M1462 699L1436 694M578 665L591 658M554 603L527 601M937 612L945 607M1279 622L1303 614M1260 565L1294 567M1196 625L1153 625M1302 764L1319 749M480 612L511 608M476 606L480 612M820 679L804 674M920 644L949 641M1048 400L1046 406M1405 648L1382 648M1467 650L1437 656M897 629L897 624M513 552L499 548M888 610L905 619M1416 604L1429 608M1120 526L1104 523M1084 512L1057 516M1196 735L1126 727M1283 574L1303 574M951 682L934 688M627 632L613 637M1317 674L1283 672M622 659L621 665M1271 689L1257 681M1343 668L1338 673M1479 735L1522 726M1425 647L1425 639M987 488L981 483M992 530L1016 534M1080 522L1099 528M1047 504L1017 506M520 676L537 671M1368 725L1362 714M445 577L420 583M581 653L578 646M620 689L620 684M1357 573L1335 579M1097 465L1066 462M609 582L588 588M1513 604L1490 606M678 652L681 657M969 440L990 448M708 677L684 672M642 719L705 728M1194 606L1178 610M850 633L826 632M907 649L920 644M1003 482L1026 483M1183 454L1152 459M1042 556L1033 551M1254 657L1259 661M1254 929L1457 905M1487 637L1466 639M1427 660L1422 665M1001 662L1024 665M1252 642L1231 644M1001 443L990 438M1045 666L1077 670M1325 688L1364 687M1075 636L1079 630M622 659L650 662M480 670L497 675M1302 764L1209 762M1249 699L1230 692M1105 674L1117 678M1044 588L1063 590M1083 543L1076 539M1254 657L1262 652M1316 646L1334 644M1058 673L1072 680M1057 605L1080 604M1062 565L1084 566M1035 574L1050 569M998 426L1023 421M570 591L546 592M1144 550L1165 551M1008 520L1026 527M1450 666L1454 671M942 660L976 665M1018 377L1014 369M1390 604L1358 601M1519 663L1587 676M1080 604L1083 611M1158 530L1160 524M909 655L930 655M733 632L758 629M622 659L591 658M1349 647L1360 651M432 571L407 577M1236 639L1228 634M588 629L606 631M1457 633L1445 639M1211 549L1213 544M1487 637L1524 638M1028 561L1042 556M1230 692L1190 698M884 740L866 762M1334 587L1335 579M1116 506L1121 501M936 593L962 590M1239 618L1213 621M1193 556L1165 551M429 552L399 547M1010 495L985 493M1221 558L1214 563M458 612L483 618M748 661L742 656M438 618L421 616M612 698L644 710M1114 453L1115 448M1520 628L1587 625M1103 442L1111 438M979 626L954 629M441 689L476 688M940 869L929 839M1525 622L1492 620M710 630L703 625M677 617L654 618M1212 680L1196 676M562 724L577 736M440 631L420 633M1109 460L1119 467M441 689L405 685M1195 718L1230 713M1190 550L1165 551M1042 602L1034 596M1107 485L1112 490M919 660L930 655M888 685L881 691M1390 806L1487 835M1302 764L1377 768M1420 677L1398 672M1323 592L1293 588M565 640L541 637M1195 502L1160 501M1140 604L1117 605M1114 453L1137 448M651 762L703 750M718 774L768 758M817 709L787 716M1354 679L1370 675M866 762L768 758M1380 658L1357 656M807 653L805 660M1070 599L1057 605M698 660L696 667M1189 533L1171 536M724 667L724 661M991 536L1022 540M789 637L770 635M1011 549L977 549M850 633L861 629M1471 661L1495 665M1140 698L1190 698M1044 374L1038 384M1091 452L1096 447M506 598L509 592M1165 572L1165 567M1143 851L1323 834M1206 512L1176 516M480 600L472 592M1383 575L1385 580M977 566L981 562M470 568L450 566M532 688L556 688M892 704L942 710M1103 442L1126 441M399 547L416 542M804 674L801 668M684 672L666 676M630 620L650 623M1063 483L1041 486M431 655L450 654M1153 454L1174 448M507 627L488 626M432 662L462 661M703 750L705 728M986 683L981 689M1227 704L1157 707M817 709L854 700M949 641L968 643M675 591L660 594M1080 522L1057 516M1005 544L991 536M409 563L398 555M597 641L622 642M1059 611L1066 618M1163 631L1171 637M627 632L637 638M1260 571L1243 576M1487 637L1494 644M831 604L830 610M1255 606L1218 604M1045 681L1061 684M1247 804L1226 782M1487 599L1513 604M1189 580L1170 586M621 648L601 650M1066 623L1087 622M734 863L940 869M748 661L741 670M681 657L650 662M1393 699L1402 691M1147 583L1128 581M594 671L578 665M984 608L966 610M1013 407L1046 406M1238 583L1262 578M1110 586L1128 581M1246 599L1268 599M1283 672L1307 668M1019 413L1013 407M484 662L463 667M734 863L693 901M1214 587L1213 582M1211 576L1189 580M1524 675L1511 679M567 572L562 565M1190 527L1214 528M1494 644L1486 652M616 675L593 680M1208 598L1184 594M698 660L677 663M961 596L962 590M1239 564L1214 563M1130 619L1108 615M1425 639L1445 645M1373 598L1391 595M687 706L697 698M521 579L547 576M1044 588L1026 584M877 617L905 619M480 600L456 599M544 693L532 688M937 612L945 618M909 638L941 637M978 554L1002 554M1362 714L1323 704M1231 547L1232 539M1050 629L1028 632M490 711L445 703M1323 592L1354 596M1149 506L1161 512M1525 622L1520 628M1140 698L1157 707M539 683L520 676M565 640L578 646M808 629L810 621M499 667L497 675M1011 599L984 594M1172 558L1151 560M1044 374L1014 369M1457 633L1438 629M1015 577L992 577M1058 367L1035 367M758 629L738 627M609 582L573 578M1196 625L1163 631M438 618L441 609M1465 594L1460 588M1380 658L1395 655M1022 679L1029 674M1153 593L1161 601M1391 595L1402 599M1462 699L1487 695M570 591L544 587M562 565L587 559M931 633L901 634M1025 591L1009 587M1482 679L1457 680M457 642L457 648M411 788L419 765M1387 679L1398 672M1324 679L1289 677M1010 495L987 488M945 607L960 601M526 630L517 640M1245 623L1233 629M1057 605L1083 611M969 538L980 543M1397 667L1418 670M1155 684L1170 677M1140 565L1144 570M1124 560L1125 552M1081 532L1059 532M1044 493L1069 494M1063 590L1096 594M683 597L680 604M490 543L475 538M724 653L724 661M1048 400L1057 396M813 741L855 729M736 684L726 689M1035 574L1058 576M995 504L989 509M697 646L678 652M1055 808L921 789M700 681L721 680M1048 400L1073 404M961 596L984 594M490 543L495 535M681 608L711 610M1255 606L1236 610M437 712L401 701M1238 583L1214 587M1058 716L1022 707M1450 750L1424 736M1084 512L1123 514M570 591L575 583M742 610L711 610M1500 709L1516 701M969 676L1000 674M1268 599L1278 604M1153 619L1129 624M684 672L710 672M670 612L654 618M976 665L985 660M1357 627L1330 624M1129 672L1137 681M1086 435L1111 438M662 600L655 608M1357 612L1338 614M1193 662L1163 666M1445 645L1445 639M1227 704L1230 713M1005 544L1022 540M1457 633L1466 639M409 563L433 562M665 827L839 813M1172 558L1165 551M1103 632L1110 639M984 608L1006 608M513 691L544 693M921 624L944 624M445 577L464 579M1149 506L1181 509M1070 413L1037 410M683 597L662 600M1374 632L1395 628M1140 604L1122 600M1259 669L1280 667M460 529L477 524M1189 580L1188 574M502 604L511 608M1231 547L1260 539M1153 593L1171 591M999 572L977 566M725 637L717 646M1127 610L1117 605M1143 599L1122 600M1059 532L1056 540M493 588L509 592M734 605L702 605M1190 527L1160 524M1125 417L1145 421M1260 565L1265 560M786 654L761 654M459 733L409 749M1243 576L1213 582M1475 688L1499 688M631 670L621 665M399 547L435 547M1072 477L1104 476M1140 631L1109 627M408 627L435 626M614 624L603 615M577 684L556 688M696 667L677 663M1083 396L1104 394M997 565L998 559M1138 470L1142 478M1071 556L1042 556M932 578L946 582M1218 648L1212 654M591 635L606 631M1457 905L1334 864M460 561L470 568M517 671L537 671M1110 639L1127 644M1115 408L1110 413M1068 500L1075 505M931 633L941 637M1034 649L1046 655M1044 588L1059 584M1053 644L1029 642M828 657L831 651M998 559L978 554M858 682L843 678M937 612L966 610M480 600L490 594M1286 584L1314 584M1349 647L1334 644M631 670L650 662M426 522L418 526M937 612L908 610M1239 649L1231 644M631 670L658 667M698 660L700 653M1148 636L1133 639M1184 668L1154 672M525 666L537 671M986 683L1014 688M399 521L418 526M1296 594L1268 599M1086 435L1103 442M1176 516L1161 512M409 569L407 577M579 692L573 700M1489 629L1480 625M572 677L546 676M1114 453L1092 458M1189 533L1158 530M1286 584L1262 578M1047 448L1066 450M847 615L858 610M1465 594L1489 591M1075 636L1049 636M753 698L697 698M977 549L980 543M1079 367L1067 362M1015 394L1021 387M961 563L961 571M502 681L520 676M1236 610L1215 610M1015 394L996 387M942 660L930 655M420 610L421 616M1103 423L1125 417M1062 439L1046 443M999 603L1006 608M419 637L398 640M1487 599L1522 599M1458 603L1429 608M1154 445L1137 448M573 578L547 576M1062 439L1086 435M1135 657L1102 653M1070 599L1054 595M1082 490L1060 490M1029 642L1012 649M583 607L578 616M907 649L866 651M594 671L571 672M565 640L591 635M1000 674L1022 679M953 510L989 509M908 610L919 603M739 678L708 677M1235 670L1209 667M718 774L708 799M503 919L403 967M1033 463L1018 466M912 596L919 603M1049 636L1078 643M1382 648L1360 651M969 532L947 533M500 867L337 827M990 583L1009 587M1504 659L1521 655M689 689L665 699M476 688L497 686M909 638L920 644M517 586L521 579M1015 577L1035 574M1390 806L1341 787M1002 454L1013 459M1066 618L1083 611M912 596L941 598M813 741L789 726M1339 651L1335 658M1424 736L1429 719M1042 580L1035 574M575 583L588 588M493 588L484 581M441 539L475 538M1260 565L1279 563M1165 567L1151 560M433 562L450 566M419 637L397 634M888 610L899 604M964 636L954 629M1042 622L1013 618M1522 691L1499 688M556 581L547 576M657 628L690 631M700 653L717 646M1083 543L1125 544M480 600L451 604M1141 666L1116 663M548 597L574 601M1221 558L1193 556M408 532L397 527M418 526L408 532M1289 677L1253 676M932 586L946 582M1034 649L1012 649M1494 864L1487 835M1280 640L1269 637M1504 659L1468 655M1279 622L1239 618M1189 564L1208 570M1092 678L1105 674M457 648L433 649M1081 532L1096 540M1399 584L1411 591M664 688L673 681M637 733L705 728M805 660L786 654M460 529L482 529M602 602L617 611M429 552L398 555M912 681L927 673M460 529L475 538M1354 679L1364 687M1282 662L1316 656M1020 556L1033 551M1017 428L989 433M631 670L616 675M1151 535L1139 529M1184 594L1191 589M605 591L588 588M513 552L536 556M1061 524L1059 532M459 733L397 732M583 607L574 601M421 616L441 609M1196 735L1195 718M544 693L573 700M979 626L978 631M515 538L490 543M1158 530L1139 529M426 522L403 514M432 642L413 643M1411 591L1391 590M961 596L984 600M1341 787L1226 782M1339 609L1373 607M697 646L717 646M458 612L480 612M1003 399L994 393M1013 459L1018 466M505 567L506 573M984 608L984 600M503 919L337 878M919 660L909 655M1196 676L1216 673M1044 499L1069 494M1211 576L1237 571M1509 650L1486 652M1080 689L1054 689M1390 636L1351 638M1424 598L1443 596M1353 589L1323 592M954 629L941 637M984 594L1006 593M866 661L848 654M536 713L490 711M1031 511L1017 506M1190 690L1190 698M421 511L399 507M1042 434L1046 443M1090 649L1106 644M1107 658L1102 653M1479 735L1514 748M1087 622L1109 627M539 683L532 688M1232 539L1233 533M1214 587L1236 592M1078 581L1059 584M1086 616L1083 611M420 610L441 609M1358 601L1354 596M1049 547L1033 551M1082 738L1100 719M687 706L685 716M447 524L460 529M552 631L526 630M981 522L961 526M1134 595L1132 589M1006 593L987 588M566 660L543 662M565 640L597 641M724 621L703 625M1188 574L1184 569M1108 708L1076 697M427 681L453 676M1143 851L1154 898M476 606L502 604M981 522L1001 525M486 556L499 548M578 806L411 788M1082 490L1107 485M809 636L808 629M572 677L539 683M1482 679L1511 679M1165 572L1145 577M690 631L703 625M829 784L768 758M554 603L545 608M462 661L484 656M1011 549L1005 544M1206 512L1195 518M1054 595L1042 602M1289 608L1278 604M969 440L1001 443M993 701L1022 707M1013 407L987 403M1142 653L1157 648M1097 600L1096 594M1489 629L1465 628M724 653L742 656M1195 502L1203 506M580 621L570 627M961 571L977 566M1269 637L1287 634M461 588L493 588M1086 381L1112 376M1022 540L1038 532M548 597L527 601M698 660L724 661M1062 439L1042 434M780 643L812 648" stroke="#0e1f33" stroke-width="1.4" fill="none" clip-path="url(#c1)"/><polygon points="405.0,509.0 460.0,524.0 500.0,538.0 540.0,556.0 575.0,572.0 610.0,586.0 700.0,600.0 765.0,628.0 800.0,612.0 850.0,600.0 900.0,594.0 930.0,588.0 945.0,578.0 949.0,559.0 967.0,513.0 985.0,462.0 1006.0,392.0 1020.0,368.0 1031.0,356.0 1042.0,347.0 1055.0,341.0 1065.0,339.5 1075.0,340.0 1084.0,345.0 1092.0,353.0 1115.0,390.0 1151.0,441.0 1182.0,480.0 1206.0,520.0 1242.0,550.0 1288.0,568.0 1333.0,574.0 1423.0,583.0 1470.0,590.0 1519.0,604.0 1519.0,961.0 405.0,961.0" fill="none" stroke="#0e1f33" stroke-width="2.2399999999999998" clip-path="url(#c1)"/><clipPath id="c2"><polygon points="405.0,509.0 460.0,524.0 500.0,538.0 540.0,556.0 575.0,572.0 610.0,586.0 640.0,620.0 600.0,700.0 520.0,730.0 446.0,767.0 405.0,790.0"/></clipPath><polygon points="405.0,509.0 460.0,524.0 500.0,538.0 540.0,556.0 575.0,572.0 610.0,586.0 640.0,620.0 600.0,700.0 520.0,730.0 446.0,767.0 405.0,790.0" fill="#b0b0b0"/><path d="M504 556L463 568M496 670L488 645M504 556L529 575M535 726L583 718M611 648L647 661M555 578L545 561M473 625L488 645M402 626L443 615M473 625L474 609M462 532L435 521M463 673L415 663M566 627L520 635M502 575L493 595M405 521L423 536M504 556L502 575M473 625L443 615M608 588L580 582M504 556L545 561M397 597L425 595M414 608L425 595M462 532L483 515M459 706L493 741M463 568L489 544M535 657L488 645M542 592L529 575M482 688L434 683M545 561L556 539M643 640L620 628M423 506L435 521M549 706L535 726M453 650L442 634M549 706L522 684M566 627L574 648M644 616L620 628M554 676L587 686M611 648L620 628M542 592L571 595M459 706L482 688M482 688L522 684M414 699L398 679M407 720L459 706M608 588L640 584M410 551L405 521M462 532L457 510M608 588L571 595M574 648L611 648M450 745L459 706M493 595L474 609M504 707L482 688M418 777L337 754M415 663L337 650M571 595L580 582M453 593L474 582M614 674L647 661M402 626L407 646M545 561L528 539M414 608L397 597M455 545L423 536M608 702L587 686M443 615L425 595M407 720L337 702M398 679L434 683M581 608L571 595M453 593L425 595M614 674L587 686M405 521L337 493M443 615L442 634M453 650L415 663M433 580L401 583M414 699L407 720M574 648L554 676M450 745L468 770M504 707L535 726M504 707L522 684M620 628L592 622M453 650L463 673M453 650L488 645M407 720L337 754M415 663L434 683M574 648L614 674M614 674L611 648M581 608L553 613M516 588L520 608M516 588L493 595M520 608L553 613M497 617L474 609M405 521L337 545M496 670L482 688M545 746L493 741M453 593L493 595M405 521L435 521M441 798L418 777M403 568L443 558M520 608L497 617M433 580L403 568M423 536L435 521M398 679L415 663M504 707L549 706M520 635L535 657M614 674L645 694M520 608L493 595M402 626L442 634M433 580L453 593M616 611L620 628M433 580L463 568M410 551L423 536M433 580L443 558M581 608L608 588M504 707L459 706M614 674L554 676M407 646L337 650M555 578L580 582M423 506L405 521M496 670L535 657M608 702L614 674M473 625L442 634M496 670L522 684M418 777L402 745M566 627L581 608M502 575L463 568M502 575L529 575M600 572L608 588M402 626L414 608M414 699L434 683M504 556L489 544M488 645L442 634M473 625L497 617M549 706L583 718M423 536L443 558M463 568L443 558M542 592L553 613M459 706L434 683M450 745L493 741M555 578L529 575M611 648L592 622M407 646L442 634M493 595L474 582M468 770L493 741M555 578L571 595M455 545L489 544M407 720L402 745M549 706L587 686M401 583L425 595M542 592L520 608M418 777L337 806M574 648L535 657M496 670L463 673M545 561L529 575M545 561L576 567M473 625L520 635M554 676L535 657M462 532L423 536M554 676L522 684M450 745L418 777M574 648L592 622M414 608L443 615M608 588L640 598M527 773L493 741M462 532L489 544M611 648L643 640M414 699L459 706M493 741L535 726M468 770L418 777M493 595L497 617M520 635L553 613M496 670L453 650M455 545L463 568M455 545L443 558M574 648L520 635M571 595L553 613M504 532L489 544M407 646L415 663M581 608L592 622M528 539L489 544M586 738L535 726M520 635L497 617M463 673L482 688M644 616L616 611M542 592L555 578M410 551L337 545M520 635L520 608M455 545L462 532M414 699L337 702M549 706L554 676M443 615L474 609M580 582L576 567M433 580L474 582M453 593L474 609M504 707L493 741M407 720L450 745M516 588L529 575M463 673L434 683M407 646L453 650M433 580L425 595M545 746L535 726M453 593L443 615M566 627L553 613M457 510L435 521M502 575L474 582M555 578L576 567M608 702L549 706M504 556L528 539M600 572L580 582M410 551L403 568M616 611L592 622M463 568L474 582M516 588L502 575M520 635L488 645M405 521L397 503M571 553L545 561M616 611L608 588M616 611L640 598M410 551L443 558M581 608L616 611M504 532L462 532M516 588L542 592M535 657L522 684M450 745L402 745M566 627L592 622" stroke="#0e1f33" stroke-width="1.4" fill="none" clip-path="url(#c2)"/><clipPath id="c3"><polygon points="765.0,628.0 800.0,612.0 850.0,600.0 900.0,594.0 930.0,588.0 945.0,578.0 955.0,600.0 965.0,690.0 905.0,712.0 800.0,712.0 770.0,700.0"/></clipPath><polygon points="765.0,628.0 800.0,612.0 850.0,600.0 900.0,594.0 930.0,588.0 945.0,578.0 955.0,600.0 965.0,690.0 905.0,712.0 800.0,712.0 770.0,700.0" fill="#b0b0b0"/><path d="M840 620L829 626M956 627L955 641M961 684L950 675M850 683L842 676M830 680L814 686M869 702L858 704M955 641L965 634M773 633L773 623M908 711L896 714M855 653L874 652M958 668L971 667M827 615L807 617M829 626L828 634M817 598L814 609M826 696L811 696M761 666L773 665M872 678L887 675M852 634L859 644M869 670L872 678M885 617L878 628M944 615L934 622M885 617L872 621M802 688L807 680M814 633L828 634M884 659L882 667M899 698L896 714M814 673L812 657M934 576L929 588M955 641L941 639M917 612L908 604M830 680L837 693M798 611L795 622M911 642L902 633M910 698L919 689M887 635L898 644M840 620L833 606M944 647L926 641M900 589L898 599M872 609L878 602M919 601L908 604M931 697L935 685M910 672L925 667M908 595L915 587M763 646L773 633M959 619L950 608M859 644L864 631M848 605L866 597M910 698L908 711M834 656L812 657M852 634L850 624M800 663L782 672M887 675L898 678M831 706L830 719M896 652L886 648M926 608L944 615M787 705L773 709M968 676L950 675M884 659L886 648M872 609L866 597M909 653L905 661M906 688L899 698M906 688L898 678M798 611L806 599M862 687L858 677M896 652L884 659M908 711L910 720M902 633L898 644M888 705L899 698M837 593L833 606M878 643L886 648M763 614L773 623M831 706L844 702M831 706L817 709M963 661L971 667M799 707L787 705M848 661L843 650M765 658L782 659M961 684L968 676M964 602L946 600M886 648L874 652M884 659L874 652M910 698L906 688M931 653L952 655M848 605L837 593M931 653L921 650M814 673L814 686M909 653L898 644M865 658L882 667M781 644L796 631M761 691L771 699M958 668L950 675M813 624L814 633M926 676L937 675M862 687L872 678M887 635L902 633M878 643L874 652M945 665L931 653M954 590L940 593M896 652L905 661M826 696L837 693M855 653L865 658M809 649L812 657M869 714L854 712M944 647L952 655M888 696L899 698M781 644L763 646M929 588L946 580M862 687L869 702M839 642L828 634M827 615L829 626M925 667L931 653M926 641L931 653M826 644L843 650M840 620L850 624M961 684L946 687M840 620L850 615M781 644L786 628M869 670L852 670M814 633L804 637M941 711L945 697M945 697L954 704M961 684L972 690M945 665L950 675M893 688L887 675M778 693L783 686M910 672L908 680M771 699L773 709M908 595L908 604M844 702L854 712M915 587L929 588M944 615L959 619M894 663L882 667M894 607L908 604M905 613L894 607M865 658L874 652M878 643L878 628M918 633L902 633M950 608L946 600M887 635L886 648M786 628L773 633M888 696L877 689M919 689L906 688M944 647L941 639M936 602L929 588M937 675L925 667M852 634L839 642M936 602L950 608M837 693L853 693M958 668L968 676M882 588L878 602M774 681L773 665M959 619L945 625M796 631L804 637M848 605L833 606M796 631L795 622M797 645L804 637M866 597L856 592M776 615L795 622M859 644L878 643M884 659L865 658M921 659L921 650M814 673L802 671M760 702L771 699M814 673L807 680M964 602L950 608M888 705L888 696M877 689L887 675M862 687L850 683M774 681L761 666M955 641L967 643M869 714L877 708M800 663L802 671M782 672L802 671M839 632L829 626M921 659L925 667M893 688L877 689M941 639L945 625M910 698L921 702M797 695L783 686M831 706L826 696M911 642L909 653M817 709L826 696M894 663L884 659M919 601L929 588M825 688L811 696M926 676L919 689M797 645L794 654M859 644L855 653M937 675L935 685M859 609L850 615M786 628L795 622M946 580L956 582M798 611L791 597M937 675L945 665M834 656L836 669M918 623L918 633M950 608L966 612M839 642L839 632M936 602L940 593M844 702L853 693M799 707L817 709M950 572L946 580M878 628L872 621M911 642L921 650M864 631L878 628M778 693L787 705M864 631L872 621M814 633L826 644M941 639L929 629M794 677L782 672M802 688L811 696M894 663L905 661M797 695L799 707M859 644L874 652M908 595L900 589M763 646L773 651M899 625L905 613M825 688L826 696M918 633L929 629M887 635L878 628M812 657L794 654M839 642L843 650M802 688L797 695M936 602L946 600M848 661L834 656M774 681L778 693M786 607L795 622M864 631L850 624M852 634L839 632M814 686L811 696M894 663L887 675M776 615L786 628M931 697L921 702M872 609L872 621M765 658L773 665M798 611L814 609M765 658L773 651M878 602L866 597M888 705L869 702M844 702L837 693M859 644L839 642M813 624L807 617M800 663L814 673M802 688L794 677M910 698L899 698M825 688L814 686M908 711L919 710M937 675L950 675M919 710L921 702M836 669L830 680M848 605L850 615M800 663L782 659M869 670L865 658M899 625L902 633M782 672L782 659M848 661L852 670M919 689L935 685M894 663L910 672M869 670L882 667M910 672L905 661M797 695L787 705M864 631L878 643M774 681L760 679M971 622L956 627M888 705L896 714M814 609L806 599M926 641L918 633M956 627L945 625M954 590L946 600M888 696L869 702M781 644L797 645M859 720L854 712M799 707L811 696M896 652L898 644M886 648L898 644M887 635L878 643M827 615L814 609M797 645L809 649M893 688L899 698M893 688L898 678M855 653L843 650M918 623L902 633M910 672L898 678M813 624L827 615M956 627L965 634M800 663L794 654M850 624L839 632M936 602L919 601M887 675L882 667M840 620L839 632M817 709L812 718M839 642L826 644M774 681L782 672M921 659L909 653M899 625L887 635M813 624L795 622M814 673L830 680M919 689L931 697M869 702L877 708M894 663L896 652M817 709L811 696M858 677L872 678M967 651L952 655M864 631L861 617M956 627L941 639M834 656L843 650M926 676L925 667M908 711L899 698M894 607L878 602M884 719L877 708M830 680L842 676M945 665L958 668M861 617L850 615M919 601L917 612M844 715L854 712M888 705L884 719M899 625L885 617M919 689L908 680M814 633L829 626M909 653L921 650M946 687L935 685M929 588L940 593M862 687L877 689M958 668L952 655M918 623L917 612M962 697L945 697M763 627L773 623M858 677L842 676M929 629L945 625M944 647L931 653M872 609L861 617M814 609L807 617M926 676L935 685M794 677L802 671M813 624L829 626M844 702L844 715M963 661L958 668M836 669L842 676M869 702L877 689M794 677L807 680M799 707L785 716M809 649L804 637M905 613L918 623M826 644L812 657M836 669L814 673M934 576L946 580M830 719L817 709M944 647L955 641M781 644L773 633M905 613L917 612M885 617L905 613M944 615L950 608M853 693L850 683M797 645L796 631M946 600L940 593M937 675L946 687M945 665L952 655M918 623L929 629M809 649L794 654M826 644L809 649M918 623L934 622M794 654L782 659M830 680L850 683M776 615L773 623M929 629L934 622M800 663L812 657M781 644L782 659M945 665L925 667M954 590L946 580M885 617L894 607M817 598L833 606M781 644L773 651M869 714L858 704M839 632L828 634M926 641L921 650M869 702L869 714M814 686L807 680M858 704L854 712M837 693L850 683M963 661L967 651M771 699L787 705M834 656L826 644M812 657L825 662M831 706L837 693M946 687L950 675M878 602L898 599M899 625L878 628M782 659L773 665M848 605L859 609M893 688L888 696M782 659L773 651M786 628L796 631M894 607L872 609M848 661L865 658M858 677L850 683M963 661L952 655M814 633L809 649M926 676L908 680M885 617L872 609M946 580L940 593M906 688L908 680M894 663L898 678M908 680L898 678M786 628L773 623M921 659L931 653M931 706L931 697M872 609L859 609M836 669L825 662M878 602L870 588M945 697L935 685M931 706L921 702M946 687L945 697M929 588L922 579M926 608L917 612M844 702L858 704M794 677L783 686M921 659L905 661M848 605L856 592M858 677L852 670M926 608L919 601M781 644L794 654M908 595L919 601M795 622L807 617M905 613L908 604M782 672L773 665M836 669L852 670M797 695L778 693M852 670L842 676M872 678L882 667M787 705L785 716M888 705L877 708M798 611L786 607M926 676L910 672M825 688L837 693M848 661L855 653M956 627L959 619M802 688L783 686M799 707L812 718M763 627L773 633M783 686L782 672M926 641L941 639M802 688L814 686M926 641L929 629M931 706L945 697M961 684L962 697M936 602L944 615M865 658L852 670M926 608L934 622M911 642L918 633M861 617L872 621M840 620L827 615M945 697L931 697M919 601L915 587M899 625L918 623M861 617L859 609M814 673L825 662M908 711L921 702M862 687L853 693M921 659L910 672M852 634L864 631M802 671L807 680M850 624L850 615M858 704L853 693M955 641L967 651M893 688L906 688M760 635L773 633M898 599L908 604M919 689L921 702M866 597L870 588M861 617L850 624M825 688L830 680M908 595L898 599M869 702L853 693M778 693L771 699M774 681L761 691M814 609L833 606M848 661L836 669M797 695L811 696M911 642L898 644M955 641L952 655M798 611L807 617M834 656L825 662M814 633L796 631M911 642L926 641M894 607L898 599M946 687L962 697M761 691L778 693M831 706L844 715M944 615L945 625M827 615L833 606M833 606L850 615M866 597L859 609M877 689L872 678M799 707L795 719M934 622L945 625M882 588L898 599M774 681L783 686M934 622L917 612M896 652L909 653M926 608L936 602M826 644L828 634M813 624L796 631M869 670L858 677M859 644L843 650" stroke="#0e1f33" stroke-width="1.35" fill="none" clip-path="url(#c3)"/><polygon points="765.0,628.0 800.0,612.0 850.0,600.0 900.0,594.0 930.0,588.0 945.0,578.0 955.0,600.0 965.0,690.0 905.0,712.0 800.0,712.0 770.0,700.0" fill="none" stroke="#0e1f33" stroke-width="2.16" clip-path="url(#c3)"/><path d="M772 695L820 697L880 699L960 700M772 702L830 704L900 705L960 706M772 708L840 710L960 711M772 690L840 691L960 693M1105 705L1170 708L1210 711M1105 712L1170 715L1210 717M1440 735L1519 740M1440 745L1519 750" stroke="#0e1f33" stroke-width="1.1" fill="none" stroke-linejoin="round"/><clipPath id="c4"><polygon points="1423.0,583.0 1470.0,590.0 1519.0,604.0 1519.0,700.0 1441.0,700.0 1426.0,640.0"/></clipPath><polygon points="1423.0,583.0 1470.0,590.0 1519.0,604.0 1519.0,700.0 1441.0,700.0 1426.0,640.0" fill="#b0b0b0"/><path d="M1437 659L1454 671M1456 696L1427 706M1510 576L1487 596M1487 596L1522 590M1437 659L1462 649M1477 609L1510 603M1483 580L1487 596M1466 629L1477 609M1504 684L1522 704M1466 629L1462 649M1488 649L1526 662M1437 659L1418 643M1477 609L1461 593M1473 681L1497 699M1461 593L1487 596M1427 599L1355 566M1527 646L1492 634M1503 618L1492 634M1461 593L1452 617M1436 683L1454 671M1510 603L1587 616M1477 609L1503 618M1431 628L1415 614M1504 684L1480 665M1456 696L1497 699M1488 649L1492 634M1420 671L1454 671M1466 629L1452 617M1461 593L1436 578M1488 649L1480 665M1431 628L1452 617M1526 662L1480 665M1427 599L1461 593M1473 681L1480 665M1436 683L1473 681M1488 649L1462 649M1473 681L1454 671M1437 659L1420 671M1510 603L1503 618M1517 630L1587 616M1427 599L1355 616M1504 684L1473 681M1522 704L1497 699M1517 630L1527 646M1462 649L1431 628M1476 707L1497 699M1462 649L1492 634M1418 643L1431 628M1436 683L1427 706M1427 599L1415 614M1462 649L1480 665M1462 649L1454 671M1477 609L1487 596M1452 617L1415 614M1436 683L1420 671M1517 630L1503 618M1456 696L1476 707M1477 609L1452 617M1526 662L1504 684M1517 630L1510 603M1427 599L1452 617M1517 630L1492 634M1488 649L1527 646M1462 649L1418 643M1483 580L1461 593M1480 665L1454 671M1466 629L1503 618M1456 696L1436 683M1456 696L1473 681M1510 603L1487 596M1466 629L1431 628M1427 599L1436 578M1504 684L1497 699M1466 629L1492 634M1510 603L1522 590" stroke="#0e1f33" stroke-width="1.35" fill="none" clip-path="url(#c4)"/><clipPath id="c5"><polygon points="940.0,620.0 949.0,559.0 967.0,513.0 985.0,462.0 1006.0,392.0 1020.0,368.0 1031.0,356.0 1042.0,347.0 1055.0,341.0 1065.0,339.5 1075.0,340.0 1084.0,345.0 1092.0,353.0 1115.0,390.0 1151.0,441.0 1182.0,480.0 1206.0,520.0 1242.0,550.0 1288.0,568.0 1333.0,574.0 1423.0,583.0 1431.0,584.0 1431.0,640.0 1300.0,660.0 1200.0,690.0 1100.0,690.0 960.0,650.0 930.0,630.0"/></clipPath><polygon points="940.0,620.0 949.0,559.0 967.0,513.0 985.0,462.0 1006.0,392.0 1020.0,368.0 1031.0,356.0 1042.0,347.0 1055.0,341.0 1065.0,339.5 1075.0,340.0 1084.0,345.0 1092.0,353.0 1115.0,390.0 1151.0,441.0 1182.0,480.0 1206.0,520.0 1242.0,550.0 1288.0,568.0 1333.0,574.0 1423.0,583.0 1431.0,584.0 1431.0,640.0 1300.0,660.0 1200.0,690.0 1100.0,690.0 960.0,650.0 930.0,630.0" fill="#b0b0b0"/><path d="M1247 676L1241 678M1402 603L1402 612M1232 545L1237 546M1033 568L1020 570M1156 690L1150 690M978 486L977 485M1112 440L1100 442M1095 670L1105 663M993 503L993 499M974 524L973 523M1018 656L1013 642M1237 672L1228 679M957 547L954 548M1025 432L1018 425M975 543L977 540M1134 441L1145 446M963 588L950 591M1162 671L1165 661M1063 485L1066 498M1215 529L1201 534M992 484L992 480M1147 635L1149 648M1016 429L1017 426M1011 387L1016 390M1045 570L1045 556M1046 488L1051 496M1283 590L1273 595M1273 641L1267 646M1362 655L1360 651M1075 401L1075 391M1068 544L1083 537M1368 599L1352 600M1094 450L1090 457M972 566L967 566M1034 376L1036 373M1402 603L1395 599M992 451L994 453M1006 586L996 596M1139 426L1144 431M1008 540L1000 529M1120 536L1110 539M1111 619L1103 624M1123 682L1135 685M972 511L977 509M1088 655L1095 660M984 473L986 470M1425 638L1425 641M1282 566L1288 568M1146 591L1146 582M1042 358L1039 354M1093 624L1103 624M1235 584L1226 592M1375 578L1381 579M1007 396L1004 398M942 586L944 590M1018 422L1020 419M1229 681L1224 683M1423 590L1431 584M1029 364L1032 361M1189 512L1188 498M1188 498L1178 494M953 553L960 556M969 559L967 555M1192 650L1198 644M955 633L948 627M1035 677L1036 672M1008 446L1012 444M1237 554L1227 553M1206 557L1199 563M1024 583L1031 577M971 537L973 534M1236 629L1247 631M1181 657L1185 670M1006 586L1017 593M1265 558L1259 557M1007 505L993 503M1124 578L1135 583M1194 690L1188 690M1114 685L1123 682M1024 583L1029 589M968 535L973 534M1010 390L1016 390M1052 564L1055 556M1234 528L1227 537M1050 352L1056 355M1101 469L1091 469M993 568L980 567M965 527L967 524M1283 576L1279 568M999 415L1001 410M1164 502L1164 501M1022 641L1013 642M971 557L969 559M1214 698L1212 686M1074 652L1088 655M984 552L991 544M996 470L990 468M1011 416L1008 412M1099 616L1091 607M1007 505L993 499M999 478L1000 475M1301 570L1307 571M1105 351L1092 353M1124 697L1131 690M1137 517L1129 522M980 596L996 596M1022 385L1025 387M1002 414L1003 410M1116 402L1122 400M1181 677L1195 672M1026 366L1026 362M940 624L936 631M1071 347L1075 340M941 576L946 577M1042 373L1046 371M984 504L987 501M962 564L968 563M1135 583L1136 570M1058 645L1062 636M943 541L956 542M1096 383L1105 374M1009 466L1019 471M1181 535L1184 550M1113 568L1099 572M1103 488L1090 496M977 497L981 499M996 443L999 447M1229 609L1235 602M1081 647L1078 636M1164 502L1157 508M1339 575L1345 575M1073 678L1065 680M975 489L978 490M1006 425L1004 426M1299 568L1294 569M1198 490L1192 497M1286 599L1295 609M984 490L978 490M1007 505L1006 517M1196 519L1191 532M1148 487L1159 482M1175 690L1169 690M1042 601L1038 589M1016 394L1021 393M1283 590L1297 584M1014 619L1016 630M1062 550L1071 555M975 489L975 490M964 596L968 612M1057 466L1057 457M1020 400L1024 400M1008 540L1013 529M1037 369L1039 368M1118 656L1105 663M1169 602L1169 592M974 469L981 473M1146 591L1135 583M930 621L935 625M987 497L993 499M1226 584L1235 584M1036 547L1045 556M954 610L942 608M1002 437L1007 438M1310 580L1324 577M1025 387L1033 387M1123 544L1113 548M1223 622L1212 631M1022 415L1020 419M1019 379L1024 382M992 453L988 450M966 490L975 489M1056 396L1046 400M1108 589L1118 588M1414 591L1408 597M1161 590L1169 592M1062 583L1063 574M1002 411L1003 410M1046 400L1052 405M1099 643L1098 652M1388 592L1387 579M1060 360L1060 354M1045 419L1045 402M1330 596L1330 585M1045 370L1045 370M973 523L974 520M1026 362L1031 356M988 513L983 507M1063 445L1075 444M1164 473L1170 465M1112 440L1124 451M1123 682L1125 690M1138 553L1141 561M1031 369L1033 366M1423 590L1431 596M1108 589L1094 594M1386 643L1395 645M968 551L972 553M1065 340L1075 340M1095 414L1086 418M1122 635L1136 636M972 511L967 513M1084 478L1074 485M984 492L988 494M987 501L993 499M1379 626L1381 636M1029 513L1014 516M1393 580L1399 581M1045 616L1053 620M1117 472L1125 463M1400 639L1397 629M1026 397L1025 392M1329 643L1319 634M1054 525L1048 532M1087 396L1083 409M1025 392L1032 392M997 390L1006 392M1116 386L1115 390M1057 457L1043 457M998 555L1002 568M1002 417L999 415M1057 413L1065 423M1221 672L1222 661M1192 636L1199 629M1196 519L1202 514M1036 501L1030 495M1364 578L1363 577M992 480L995 477M985 522L978 521M1005 441L1002 437M1222 546L1219 557M983 480L979 479M1076 456L1069 463M1065 335L1065 340M1009 431L1016 433M1082 385L1096 383M1237 649L1232 657M1143 680L1135 685M1018 425L1017 426M1105 351L1099 364M1124 697L1119 690M1006 419L1009 416M936 631L940 637M1400 639L1413 637M1205 598L1213 588M1149 624L1147 635M1025 432L1024 449M1142 494L1149 491M960 556L955 550M1370 570L1369 578M1007 489L1013 481M1137 517L1137 529M1045 570L1052 564M980 541L991 544M962 545L970 548M1004 398L1006 392M1229 609L1239 612M1221 672L1211 679M1081 647L1087 634M1092 353L1095 358M1038 653L1041 638M1055 511L1068 519M1083 464L1083 450M1031 669L1036 672M993 482L997 485M1113 559L1102 553M1020 419L1019 415M1001 650L1001 662M1189 512L1196 503M1066 404L1066 394M1279 568L1268 567M980 541L976 547M1112 690L1106 690M1375 643L1371 649M1025 464L1033 456M1078 624L1068 618M1226 537L1227 537M1040 367L1039 368M1007 489L997 493M1215 567L1206 557M964 478L979 479M980 626L969 626M971 507L971 502M1042 601L1033 609M1152 687L1153 674M973 534L974 531M1065 607L1077 614M987 497L984 492M1169 602L1184 596M992 488L996 489M1068 618L1077 614M1126 598L1137 600M1381 636L1372 631M1309 566L1301 570M989 475L990 471M1379 626L1372 631M1047 348L1048 344M940 624L948 618M1349 628L1354 615M1224 527L1216 529M970 584L962 578M929 612L940 620M1021 350L1026 362M1014 458L1008 454M991 460L993 461M1056 396L1059 410M1188 687L1194 690M1371 584L1369 578M1268 567L1276 564M972 566L968 563M1088 377L1094 368M992 451L996 450M1349 628L1340 627M1143 680L1147 668M1251 620L1239 612M959 657L960 650M1272 581L1268 567M1000 475L1004 472M1070 631L1062 636M1327 573L1333 574M1017 489L1016 497M1225 570L1237 572M1287 633L1278 630M987 638L974 633M1361 609L1365 619M1013 413L1016 410M1188 690L1181 690M1339 615L1349 628M1008 446L1003 448M1067 415L1073 419M1289 661L1280 650M1216 643L1223 631M1386 643L1383 647M1154 435L1144 431M1103 624L1102 634M1016 630L1022 641M1047 438L1057 436M1039 578L1054 578M1145 446L1147 436M1119 624L1123 614M1043 659L1055 656M1054 525L1063 526M1017 401L1017 399M1227 553L1222 546M1164 534L1172 544M1150 690L1144 690M1236 563L1237 554M962 534L960 530M1048 532L1045 522M1133 591L1137 600M1232 545L1237 554M1025 387L1032 392M1112 515L1105 521M1339 615L1354 615M1179 565L1169 555M1280 659L1289 661M1327 622L1340 627M981 530L984 527M1088 655L1087 665M984 477L979 479M1033 389L1033 387M998 540L1008 540M971 557L972 557M1025 432L1018 422M1108 381L1105 374M966 640L969 626M1079 669L1087 665M997 470L998 466M1122 490L1120 500M996 470L993 464M1009 431L1004 426M1110 677L1103 682M1244 580L1248 590M1349 583L1340 585M1164 534L1168 520M1124 407L1114 413M1021 376L1024 378M1032 358L1031 356M936 631L930 630M1087 683L1088 687M963 588L952 579M1002 452L1006 457M1086 429L1092 434M1056 349L1055 341M1406 588L1399 581M962 545L960 541M1152 687L1150 690M1192 650L1181 647M1422 601L1431 606M1053 686L1059 678M1092 697L1100 690M1426 615L1431 615M1388 610L1374 617M977 497L983 496M996 443L999 443M990 460L990 456M1031 669L1024 668M1003 448L999 443M944 597L944 596M1131 690L1125 690M1212 660L1209 649M1077 521L1086 514M1158 682L1152 687M1333 634L1319 634M960 541L965 543M984 465L985 462M1321 611L1311 601M977 534L976 528M1002 381L1006 392M1038 517L1038 529M1109 506L1120 500M987 497L994 496M1111 483L1110 493M996 596L998 604M1032 345L1031 356M1204 684L1206 688M1361 609L1368 599M997 427L1003 429M1309 566L1314 571M1249 657L1256 665M1233 638L1236 629M994 442L990 444M1094 688L1088 687M1137 529L1122 528M972 599L970 584M1330 585L1338 594M929 612L942 608M1275 557L1271 561M1176 669L1169 678M1109 474L1111 483M1186 608L1184 596M1126 506L1120 500M1188 687L1181 690M1095 685L1103 682M1137 504L1149 504M1354 575L1351 576M970 529L971 526M1040 669L1030 658M1228 679L1221 672M1273 667L1271 669M1135 685L1131 690M988 514L996 521M970 514L972 511M1006 586L1010 578M1180 484L1178 475M1045 370L1049 370M980 541L984 552M980 626L991 630M952 579L947 571M1399 581L1405 581M1362 636L1360 645M1029 372L1034 376M954 571L957 562M988 603L998 604M1032 361L1032 358M1173 466L1170 465M1043 457L1033 467M1043 685L1048 675M1052 631L1041 638M1013 529L1000 529M1140 478L1144 485M1049 370L1051 366M1154 435L1151 441M1309 630L1313 620M1199 655L1209 649M1226 584L1226 592M1157 508L1164 501M1034 389L1032 392M1001 650L1008 660M1025 612L1018 605M1023 370L1016 374M982 484L985 485M1145 446L1155 446M984 447L988 450M1115 696L1106 690M951 653L955 647M1054 611L1068 618M1083 537L1072 530M1211 521L1211 524M984 492L990 491M994 453L996 450M1431 590L1431 596M1012 444L1007 438M980 596L986 583M964 531L960 530M1053 357L1050 359M1353 649L1340 646M1321 611L1320 626M1344 602L1339 615M1250 611L1239 612M1086 418L1080 426M1220 681L1224 683M993 568L998 555M1003 406L1001 410M1221 517L1216 529M1122 490L1111 483M967 536L971 537M952 579L962 578M1027 486L1030 495M1009 466L1005 468M1011 416L1012 421M970 575L970 584M1036 386L1033 387M1333 634L1340 627M1346 570L1339 575M1112 440L1124 436M990 471L990 468M1210 670L1221 672M1279 568L1276 564M1108 381L1112 385M1005 422L1011 424M1022 415L1035 408M1204 684L1196 687M1028 535L1030 522M1003 410L1003 406M1042 673L1036 672M1018 425L1018 422M1272 655L1264 665M1340 585L1348 592M1114 685L1110 677M1087 683L1077 683M1212 552L1206 557M1168 520L1177 512M1388 592L1395 599M1089 578L1089 569M976 524L978 521M1406 588L1411 582M1280 659L1280 650M1115 390L1119 395M1155 447L1155 446M1092 697L1088 687M1414 591L1411 582M1127 662L1122 672M1127 419L1139 426M993 482L999 482M1016 410L1015 406M1068 544L1063 526M977 656L978 655M1256 565L1259 557M984 490L990 491M977 497L973 496M980 541L975 543M1039 362L1041 358M1040 367L1042 366M1020 664L1024 668M1068 618L1053 620M952 556L949 559M988 494L994 496M1375 643L1381 636M984 488L982 484M1002 381L1013 380M989 479L992 480M1135 661L1131 676M1018 439L1016 433M1032 345L1042 347M1256 565L1263 574M1228 679L1229 681M1425 641L1419 642M1063 652L1074 652M1331 606L1338 594M987 473L989 475M1117 472L1126 468M1236 629L1235 620M1027 486L1013 481M997 494L1007 505M1236 563L1227 561M1098 395L1108 381M1237 649L1228 649M1123 544L1121 555M1014 458L1009 450M991 460L995 458M1223 622L1217 609M1006 517L996 521M997 494L1007 489M1077 335L1075 340M1380 602L1368 599M1236 563L1245 569M972 566L969 559M1226 584L1225 570M1371 584L1379 588M974 520L974 515M1439 600L1431 596M1180 484L1185 486M998 466L1000 463M1317 669L1312 658M1014 417L1020 419M1062 362L1058 371M1391 581L1393 580M1095 414L1094 405M1010 405L1012 401M1101 430L1110 424M1254 603L1264 602M1008 446L1006 445M1039 625L1041 638M1046 371L1045 370M1036 501L1046 488M970 548L973 549M1017 401L1012 401M1063 686L1065 680M967 514L965 519M1095 559L1086 558M1093 624L1102 634M1250 672L1256 665M1286 673L1276 667M1029 475L1039 483M1095 358L1099 364M1159 610L1169 602M1177 512L1180 503M978 494L984 492M1249 541L1248 552M984 447L992 439M997 622L991 630M1417 582L1423 583M1069 508L1079 507M1066 404L1067 415M1110 610L1110 600M1023 405L1023 401M1106 690L1100 690M968 535L967 536M1216 643L1224 641M1006 473L999 478M1283 576L1282 566M1038 517L1029 513M1321 568L1320 572M1141 561L1130 559M1201 580L1202 590M1312 650L1312 658M964 527L967 524M1047 361L1050 359M1203 526L1191 532M1123 481L1132 494M998 540L991 529M1140 539L1149 539M1196 611L1206 610M1331 663L1336 655M1415 580L1411 582M980 567L984 552M1093 534L1100 541M1087 396L1094 405M1375 643L1372 631M1195 672L1185 670M1346 570L1351 576M1175 687L1181 690M1237 554L1242 550M1254 603L1245 600M948 618L961 621M970 575L967 566M1422 601L1426 615M1250 611L1254 603M1010 428L1016 429M971 557L972 553M1025 432L1020 419M1074 485L1087 486M1250 611L1251 620M1226 584L1237 572M1155 696L1156 690M984 504L980 502M1308 593L1318 596M1051 663L1048 675M1021 376L1016 374M1126 468L1134 471M1012 564L1009 552M1240 593L1248 590M1001 650L994 645M1257 587L1248 590M1308 593L1319 586M1127 419L1133 416M1094 368L1099 364M1181 657L1190 660M1062 362L1058 363M1007 461L1006 457M1130 607L1117 607M933 590L944 596M1304 663L1306 659M1427 655L1425 641M1267 612L1261 620M1388 592L1380 602M964 596L963 588M1085 594L1075 606M1020 400L1017 399M1088 687L1082 685M974 524L976 528M1065 560L1062 550M1280 659L1273 667M1145 531L1149 539M1063 485L1064 475M1171 646L1171 655M1213 588L1215 600M954 571L948 565M1212 631L1223 631M1020 664L1012 665M1020 391L1021 393M960 541L964 538M1344 602L1352 600M1126 405L1129 410M981 457L987 456M1065 423L1067 415M1084 617L1099 616M992 484L997 485M1032 345L1032 355M1237 649L1251 648M1079 498L1066 498M1205 598L1202 590M1155 447L1145 446M1122 635L1129 627M1218 651L1209 649M1287 562L1282 566M1084 478L1087 486M1364 578L1371 584M1034 376L1039 379M1089 335L1084 345M1086 558L1089 569M1168 615L1177 606M1004 642L1010 650M968 532L973 534M940 645L945 640M989 463L985 462M1257 553L1248 552M1095 670L1087 683M1045 556L1055 556M1086 558L1071 555M966 520L968 517M1113 461L1115 457M987 516L988 513M1134 695L1138 690M1310 580L1308 593M1149 513L1149 504M1083 537L1093 534M1180 635L1181 647M1029 364L1033 366M1401 650L1407 644M1034 425L1022 415M1029 372L1036 373M1041 371L1045 370M1400 639L1407 644M1168 520L1175 524M1273 595L1266 588M1310 610L1313 620M1200 506L1196 503M1201 534L1202 545M1256 636L1267 646M993 461L995 458M966 520L962 524M1179 565L1171 575M982 484L986 481M1386 643L1381 636M1431 634L1431 640M1232 545L1222 546M1038 529L1042 540M1068 618L1065 607M1137 517L1137 504M991 398L1001 410M1168 615L1169 602M1149 648L1144 656M1126 598L1118 597M1053 357L1054 358M1145 531L1164 534M1051 676L1048 675M1051 600L1060 599M1241 662L1256 665M1036 501L1045 504M944 590L945 583M1039 578L1047 587M1181 535L1189 541M965 527L970 529M1181 585L1184 596M1072 414L1073 419M1133 591L1126 586M1038 589L1047 587M1164 688L1169 690M1036 501L1038 517M997 427L996 427M1186 608L1177 606M1007 391L1002 381M1120 500L1132 494M996 470L996 473M1011 416L1014 417M1009 466L1005 464M1113 548L1100 541M1131 676L1143 680M1103 488L1111 483M1175 687L1169 690M1007 438L1012 436M1002 414L1009 416M1056 396L1044 390M1196 519L1184 520M1005 422L1012 421M1181 535L1175 524M1001 662L995 660M1138 483L1132 494M1018 380L1013 380M1250 611L1267 612M940 624L940 620M1361 609L1374 607M1155 521L1145 531M1240 593L1235 602M974 515L976 512M1245 600L1248 590M1084 345L1092 353M986 617L997 622M1185 478L1178 475M1350 639L1360 645M1287 643L1287 633M975 499L973 496M1381 636L1388 625M1153 674L1157 660M1094 368L1105 374M990 456L992 453M1353 649L1360 645M1012 401L1013 398M1303 648L1306 659M1141 561L1136 570M1202 545L1206 557M1145 434L1134 441M1294 624L1295 609M1091 607L1094 594M1374 617L1365 619M977 534L980 537M1402 603L1388 610M1247 552L1242 550M1041 351L1045 351M1422 575L1423 583M1329 643L1336 655M1007 489L1016 497M987 638L983 646M953 553L954 548M985 485L992 488M978 588L970 584M1431 596L1431 603M1112 515L1121 518M1222 693L1224 683M1024 449L1033 456M1383 647L1377 648M1165 661L1157 648M1112 440L1109 451M991 460L989 463M1236 563L1244 560M1109 580L1124 578M1071 682L1065 680M995 431L996 427M1050 359L1054 358M1287 562L1294 569M987 473L990 471M1131 676L1123 682M1052 381L1046 371M1110 539L1123 544M968 532L965 527M1295 648L1294 662M1257 553L1259 557M1014 458L1012 447M1357 589L1357 576M972 511L971 507M1425 638L1431 640M1011 424L1017 426M1039 483L1027 486M1272 655L1280 650M1181 535L1191 532M1031 369L1036 373M1113 568L1103 563M1423 590L1423 583M1401 650L1395 645M1182 624L1172 630M1400 639L1395 645M1196 687L1200 690M1035 677L1042 673M1008 446L1005 441M1006 473L1009 466M1215 529L1216 529M1055 422L1057 413M1046 371L1049 370M983 511L983 507M1119 395L1122 400M1109 506L1105 521M1251 620L1261 620M1348 667L1348 653M1063 574L1054 578M996 450L999 447M1431 615L1431 621M1051 663L1051 676M1103 563L1113 559M1017 399L1019 397M991 398L1004 398M1139 426L1120 426M1023 405L1022 403M1079 498L1074 485M968 535L968 532M1093 534L1084 527M1050 352L1053 351M1149 648L1157 648M1232 695L1224 683M1300 556L1294 569M1140 426L1144 431M1309 630L1319 634M1094 368L1080 362M1027 385L1025 383M992 480L999 482M1215 567L1207 567M1419 642L1413 643M1003 429L998 424M980 567L980 576M975 499L974 500M1006 419L1012 421M1147 697L1150 690M1036 373L1040 376M1018 667L1012 665M1116 402L1119 395M1164 688L1169 678M1026 366L1020 368M955 633L961 621M1149 624L1159 638M1006 473L1001 483M984 504L981 499M962 564L963 561M1245 600L1235 602M1171 509L1177 512M1113 548L1102 553M1105 415L1101 430M1132 473L1138 483M986 470L990 471M1127 567L1136 570M953 526L962 524M1425 638L1429 630M1129 410L1133 416M1078 636L1072 643M1073 678L1071 682M1151 422L1140 426M1001 452L1003 448M1030 658L1025 650M1198 490L1189 491M1062 362L1060 360M1055 511L1069 508M1051 496L1059 503M986 617L991 630M1380 602L1374 607M1016 394L1016 390M1108 453L1094 450M1256 565L1252 575M1090 544L1086 558M1210 539L1202 545M1069 508L1068 519M1283 590L1272 581M1273 595L1264 602M943 602L944 596M1024 449L1018 439M998 555L1009 552M1070 435L1065 423M974 469L979 479M930 621L930 630M1095 478L1091 469M992 506L991 502M1151 441L1155 446M1085 594L1082 586M1020 391L1025 392M1120 536L1122 528M1045 556L1050 548M1118 656L1127 652M989 475L995 477M1025 387L1025 383M1222 693L1212 686M1272 581L1279 568M1349 583L1351 576M1228 649L1222 661M1205 598L1206 610M1012 665L1007 663M1215 567L1219 557M967 524L971 526M1171 646L1180 635M1286 599L1273 605M1050 648L1043 659M988 514L990 510M970 575L980 576M1164 502L1178 494M1425 638L1419 642M1269 621L1267 612M1117 607L1111 619M1007 396L1006 392M1025 612L1033 609M998 540L1009 552M1147 668L1157 660M1031 369L1029 364M1423 590L1431 590M945 566L948 565M1118 656L1112 647M1113 461L1101 469M969 559L972 557M945 583L946 577M1217 609L1215 600M1035 677L1030 670M1042 601L1047 587M1398 590L1393 580M991 656L995 660M1069 671L1067 661M1392 651L1389 646M1087 665L1095 660M1194 570L1189 578M1075 473L1064 475M1066 404L1072 414M1162 544L1149 539M1023 401L1022 403M960 541L956 542M1035 408L1045 419M1130 607L1141 607M1116 386L1112 385M995 431L997 431M1263 574L1266 588M1206 610L1215 600M1234 528L1232 541M1002 417L997 421M1144 472L1141 462M1112 529L1105 521M1006 627L1001 613M993 568L998 576M1024 504L1030 495M1364 578L1357 576M992 480L989 475M1202 514L1199 509M1085 594L1070 596M1308 593L1297 584M999 512L993 503M1011 416L1013 413M978 612L972 599M1244 580L1237 572M1108 396L1116 402M1006 419L1002 414M1410 627L1418 619M1002 414L1008 412M1076 660L1074 652M1074 652L1067 661M1147 697L1138 690M1257 587L1263 574M1160 491L1149 491M1370 570L1363 577M1032 355L1032 358M971 507L974 504M1112 647L1126 643M1109 474L1113 461M1196 611L1200 618M1052 631L1053 620M993 482L992 484M1006 457L1008 454M1159 610L1168 615M1014 619L1025 612M1169 455L1166 460M1375 643L1377 648M1073 678L1079 669M1226 537L1221 533M1045 570L1037 557M940 620L941 614M964 478L977 485M971 507L969 507M1033 568L1037 557M977 534L980 533M1069 379L1052 381M1093 358L1080 362M1070 631L1078 636M974 469L983 468M1016 497L1016 507M973 534L970 529M986 617L998 604M1055 422L1065 423M985 485L992 484M1327 622L1320 626M1168 489L1164 501M999 447L999 443M1431 640L1425 641M1100 601L1110 600M1047 348L1042 347M987 473L984 477M1148 487L1142 494M1289 570L1288 568M1233 638L1247 631M1310 580L1314 571M1011 387L1015 385M1256 565L1244 560M1030 670L1024 668M991 460L990 460M1053 351L1056 349M1056 396L1052 405M1069 508L1077 521M970 529L974 531M1268 567L1271 561M1122 490L1132 494M1388 592L1379 588M1090 646L1098 652M1192 636L1198 644M1108 396L1104 405M1149 624L1159 610M1147 635L1136 636M959 657L966 652M1340 646L1350 639M1043 468L1050 472M988 513L990 510M1000 475L997 470M1164 534L1175 524M959 518L967 514M948 618L941 614M1076 660L1088 655M1227 561L1227 553M1103 693L1106 690M995 660L989 658M1272 581L1266 588M1032 361L1035 363M963 561L965 558M1031 369L1037 369M1386 643L1389 646M1040 376L1041 371M1196 611L1205 598M973 663L983 657M1069 379L1075 391M980 502L981 499M1144 431L1147 436M1112 647L1102 634M991 656L983 657M1052 631L1051 639M1163 625L1173 621M1012 564L1024 554M1138 553L1130 549M1244 580L1252 575M994 442L995 438M1413 643L1407 644M1164 534L1162 544M1111 619L1123 614M1016 390L1020 388M1039 368L1041 371M1138 553L1130 559M1057 457L1045 447M984 552L990 559M1010 650L1008 660M948 565L949 559M1137 529L1145 522M1071 357L1063 359M1117 472L1111 483M1189 512L1196 519M1077 574L1063 574M1002 411L1001 410M1388 610L1402 612M981 530L976 524M1137 504L1132 494M990 471L996 473M1364 578L1369 578M992 480L999 478M1018 656L1010 650M1005 441L1007 438M1377 648L1371 649M1018 380L1024 382M1126 506L1132 494M1070 435L1063 445M1065 335L1075 340M1132 473L1126 468M1220 681L1221 672M1062 583L1070 596M954 642L945 640M1003 410L1008 412M975 499L977 497M1204 684L1211 679M980 596L972 599M936 631L935 633M1000 461L995 458M978 655L972 653M1090 544L1100 541M1304 639L1295 648M1319 586L1324 577M1194 570L1182 574M1007 505L1016 497M1160 491L1164 501M960 556L962 553M1370 570L1375 578M976 524L984 527M1015 385L1010 386M1222 661L1218 651M1287 643L1273 641M986 470L990 468M1142 494L1132 494M1045 570L1033 568M1094 517L1100 528M1039 625L1053 620M1016 410L1020 411M978 612L988 603M1388 610L1395 599M993 503L992 506M1124 436L1124 451M1001 650L995 660M1036 547L1037 557M1033 366L1032 361M1062 362L1063 359M1139 623L1136 636M1144 656L1138 648M1039 362L1042 366M953 535L956 542M984 465L983 468M1020 391L1016 394M961 621L948 627M1210 539L1222 546M1110 677L1123 682M987 497L988 494M1178 475L1182 480M1034 425L1045 419M1283 576L1297 584M1195 672L1190 660M1037 557L1027 562M1164 473L1156 468M1309 566L1307 571M1178 494L1189 491M1360 651L1354 652M1272 581L1263 574M1021 350L1031 356M1001 483L999 482M993 568L1002 568M1054 358L1056 355M1084 478L1095 478M1135 661L1139 672M1228 649L1224 641M1237 672L1247 676M1181 657L1181 647M970 529L967 524M984 473L981 473M967 524L973 523M1273 667L1276 667M1154 459L1163 464M1226 592L1240 593M1145 446L1145 455M1124 407L1116 402M1410 627L1395 618M998 466L1005 468M1045 370L1045 365M1006 473L1013 481M1215 567L1227 561M1269 621L1261 620M1242 681L1241 678M1158 682L1162 690M1227 561L1225 570M1090 496L1087 486M1035 355L1036 352M1153 496L1149 504M1043 468L1033 467M1324 656L1318 657M993 568L980 576M952 579L946 577M1102 500L1103 488M1172 544L1177 555M1010 405L1015 406M1026 370L1031 369M1008 446L1009 450M967 566L968 563M944 635L955 633M1157 508L1156 496M968 551L970 548M1038 517L1045 522M1188 488L1178 494M973 663L972 653M1132 537L1130 549M1008 540L1009 552M1042 540L1055 537M1145 446L1151 441M1115 696L1112 690M1181 585L1190 590M1158 682L1153 674M1008 454L1009 450M1431 606L1431 609M1122 490L1123 481M1020 570L1024 583M1429 630L1431 628M1043 468L1043 457M1019 397L1021 393M1086 418L1073 419M1099 572L1099 586M1023 401L1024 400M1029 589L1027 602M1164 473L1159 482M1330 585L1324 577M995 431L997 427M1121 518L1122 528M1025 432L1016 433M1182 624L1186 608M1155 446L1159 451M1289 661L1288 664M1330 654L1336 655M1155 447L1145 455M1081 647L1088 655M1156 468L1163 464M1211 524L1216 529M1124 451L1134 441M1025 650L1013 642M1120 536L1123 544M995 438L992 439M1001 421L1006 419M1015 385L1017 382M1132 473L1140 478M1350 639L1340 627M1010 373L1016 374M1226 537L1224 527M984 504L983 507M1000 461L1007 461M1165 661L1157 660M973 663L977 656M1138 483L1144 485M1269 621L1278 620M1056 349L1065 340M976 524L974 520M1406 588L1405 581M1090 544L1083 537M1032 355L1035 355M985 466L990 468M1014 458L1025 464M1092 697L1094 688M1076 456L1075 444M991 656L983 646M969 545L975 543M1036 547L1018 547M1118 656L1127 662M1003 448L1006 445M1271 669L1265 671M1149 624L1139 623M1166 584L1153 587M1317 669L1318 657M977 656L983 657M1256 565L1254 554M980 596L988 603M977 534L971 537M1040 669L1042 673M1098 652L1095 660M1034 425L1025 432M955 550L957 547M946 577L947 571M953 535L960 530M977 534L981 530M991 630L999 633M991 502L993 499M1041 638L1034 633M1191 560L1199 563M995 438L995 435M1389 646L1383 647M1032 345L1036 352M1228 679L1235 679M1037 557L1045 556M1050 648L1041 638M1179 565L1182 574M1139 426L1124 436M1327 622L1333 634M1007 391L1006 392M987 473L984 473M1117 472L1120 460M1125 463L1126 468M1006 404L1002 404M955 633L945 640M1028 394L1032 392M989 658L983 657M1159 638L1157 648M1126 506L1121 518M1275 557L1276 564M1045 370L1046 371M1040 669L1043 659M966 520L973 523M1237 672L1235 679M984 527L978 521M1036 501L1024 504M1297 584L1289 570M980 567L972 557M1021 376L1016 377M1055 537L1048 532M970 529L976 528M1114 413L1116 402M1189 491L1192 497M1264 665L1256 665M995 477L1000 475M1094 450L1102 444M1304 639L1295 633M1039 354L1036 352M998 466L993 461M1107 365L1099 364M1267 632L1261 620M1003 406L1009 408M1038 653L1050 648M1126 506L1129 522M1342 654L1336 655M1208 622L1199 629M1245 569L1237 572M1024 382L1024 378M1324 577L1320 572M1125 463L1124 451M955 647L950 643M1071 357L1071 347M1241 662L1249 657M1192 636L1191 628M1068 544L1062 550M962 553L962 549M1032 361L1035 362M1438 637L1431 634M1108 589L1100 601M1025 632L1029 621M1076 456L1083 450M1256 636L1261 620M1180 503L1188 498M1054 611L1045 616M1333 634L1340 646M1286 673L1282 665M978 494L978 490M1146 591L1133 591M1020 570L1031 577M1192 600L1190 590M1249 541L1242 550M1285 625L1287 633M1078 624L1078 636M1012 444L1013 440M1140 539L1130 549M987 638L991 630M978 494L975 490M1237 649L1241 662M1164 502L1180 503M1321 568L1314 571M1354 661L1354 652M1372 631L1365 619M1282 607L1295 609M1220 681L1218 685M1006 669L1012 665M1060 676L1069 671M962 524L965 519M1380 602L1388 610M1168 489L1171 479M1232 657L1222 661M1285 625L1288 613M1257 587L1252 575M1135 661L1144 656M1362 636L1372 631M1330 654L1324 656M1361 569L1363 577M1192 636L1181 647M1280 650L1295 648M980 596L978 588M1244 560L1242 550M1127 662L1127 652M1237 554L1237 546M1002 433L1003 429M1336 655L1330 655M1208 622L1206 610M1279 568L1282 566M1021 376L1023 373M1114 413L1104 405M940 637L935 633M1025 464L1019 471M978 588L972 599M1051 663L1053 677M1118 374L1112 385M1431 584L1431 584M974 515L981 518M1163 464L1163 456M1167 512L1177 512M1073 586L1085 594M1127 419L1129 410M1094 368L1095 358M1151 551L1158 557M1192 600L1205 598M1026 684L1030 670M1140 539L1132 537M990 456L995 458M1018 656L1025 650M1189 541L1191 532M1229 669L1221 672M1438 625L1431 621M1009 605L998 604M1273 605L1278 620M1295 609L1303 620M1414 591L1417 582M980 434L994 433M1012 401L1017 403M1016 410L1021 408M1079 669L1077 683M1154 575L1153 587M1245 569L1256 565M993 503L991 502M977 656L972 653M1050 472L1039 483M1041 351L1044 357M1087 634L1102 634M1075 606L1077 614M1148 566L1136 570M1216 643L1209 649M952 546L954 548M1018 439L1012 444M1267 646L1280 650M985 504L987 501M1020 391L1016 390M1344 602L1354 615M1132 537L1122 528M1302 602L1295 609M1131 619L1123 614M984 488L985 485M981 457L985 462M1045 616L1039 625M1008 660L1012 665M1051 600L1047 587M1039 578L1031 577M966 640L955 633M1058 371L1054 364M1038 589L1031 577M1094 450L1100 442M1228 679L1224 683M1014 458L1007 461M1245 569L1252 575M1055 537L1063 526M1028 379L1034 376M1007 400L1002 404M1390 635L1381 636M1321 611L1318 596M980 626L987 638M1050 359L1054 364M1287 562L1276 564M1329 643L1319 645M1059 503L1045 504M1071 357L1080 362M940 645L950 643M1032 399L1032 392M1001 483L999 478M1203 526L1206 520M981 473L983 468M1077 335L1084 345M1171 575L1182 574M1063 652L1058 645M1083 464L1069 463M1107 365L1105 374M1095 685L1088 687M1282 665L1276 667M1161 590L1166 584M1324 577L1333 574M1098 395L1096 383M1041 371L1042 366M965 558L967 555M1374 617L1388 625M1017 401L1017 403M1001 650L1004 642M983 511L988 513M967 514L967 513M1110 539L1100 528M1008 540L1018 547M1190 590L1189 578M1162 671L1158 682M1341 656L1348 653M1181 657L1192 650M1078 624L1087 634M1021 361L1026 366M1191 560L1184 550M1079 498L1079 507M1353 649L1360 651M1073 586L1063 574M1020 388L1022 385M1022 641L1025 650M968 535L971 537M1321 568L1327 573M1120 500L1110 493M1368 599L1374 607M1113 548L1121 555M1083 464L1090 457M1072 414L1067 415M1024 583L1017 593M1331 663L1330 655M993 499L994 496M1182 480L1185 486M1017 489L1007 489M1025 432L1016 429M1182 624L1196 611M1075 424L1065 423M1248 552L1254 554M1154 459L1144 472M970 575L962 578M1235 584L1244 580M1007 438L1008 435M1244 560L1254 554M1000 461L998 466M1218 651L1224 641M1032 392L1033 389M1131 676L1135 685M1436 613L1431 615M1123 481L1138 483M1074 652L1072 643M1181 677L1169 678M962 564L967 566M1063 652L1067 661M1129 522L1137 529M1186 608L1196 611M1100 601L1091 607M1141 561L1151 551M1069 379L1082 385M1005 360L1020 368M1179 565L1191 560M1024 382L1025 383M974 515L972 511M1182 624L1191 628M974 647L974 633M969 545L970 548M1052 381L1056 396M1087 683L1079 669M1163 464L1170 465M1139 623L1141 607M1127 419L1137 421M1094 368L1102 369M1318 657L1312 658M1438 625L1431 634M989 668L989 658M933 590L944 590M1157 648L1171 655M1304 663L1300 660M1012 564L998 555M977 534L973 534M1422 575L1417 582M972 553L973 549M958 536L960 530M1368 649L1366 650M1194 570L1199 563M1162 671L1153 674M968 517L965 519M1285 625L1278 620M988 494L990 491M999 664L995 660M1089 578L1082 586M1008 660L1001 662M1013 440L1012 436M1156 468L1144 472M1007 396L1013 398M1272 581L1283 576M1233 638L1223 631M1280 659L1276 667M1112 440L1102 444M1010 578L998 576M1112 529L1122 528M969 626L974 619M1033 568L1027 562M1159 610L1150 612M1016 537L1013 529M1027 385L1031 382M1327 622L1321 611M995 431L994 433M987 473L986 470M1287 562L1288 568M1189 541L1201 534M965 543L964 538M1060 599L1070 596M1051 496L1066 498M1228 679L1229 669M1388 592L1391 581M1295 648L1300 660M940 645L940 637M998 424L997 421M1331 572L1333 574M1029 621L1033 609M1210 670L1211 679M1421 626L1426 615M1216 529L1221 533M1267 632L1273 641M1245 569L1244 560M1237 672L1229 669M1147 635L1138 648M1300 660L1294 662M1113 634L1111 619M1321 611L1313 620M1023 373L1026 370M1113 568L1109 580M1401 650L1401 645M1199 655L1190 660M1024 504L1016 497M1091 430L1086 418M1042 601L1045 616M1400 639L1401 645M1148 600L1157 601M1215 529L1211 524M1395 618L1388 625M1409 650L1407 644M992 453L994 453M994 645L1004 642M1050 472L1057 466M1069 379L1088 377M969 654L966 652M1341 656L1336 655M1070 631L1068 618M1099 586L1108 589M982 484L977 485M1161 590L1153 587M987 638L994 645M1361 609L1352 600M1017 399L1016 394M1045 351L1048 355M1124 578L1118 588M1094 368L1096 383M1113 568L1113 559M1353 649L1348 653M1303 648L1295 648M1060 626L1068 618M962 538L962 534M1085 442L1086 429M1431 584L1436 575M1180 635L1172 630M1259 652L1251 648M964 596L950 591M1018 380L1017 382M1232 541L1237 546M1200 506L1202 514M962 566L954 571M964 596L972 599M998 424L1001 421M1171 646L1157 648M1336 564L1333 574M1256 665L1259 672M1233 638L1247 640M1145 434L1144 431M1031 669L1040 669M1037 382L1039 379M988 450L990 444M1223 622L1235 620M1216 643L1218 651M1050 346L1055 341M1024 378L1025 383M971 507L977 509M1143 411L1137 421M974 515L981 514M1038 529L1030 522M953 526L960 530M1265 559L1271 561M1005 468L1000 463M1109 474L1101 469M1085 594L1094 594M1439 600L1431 606M1151 422L1137 421M1038 441L1045 447M1050 472L1050 463M1063 652L1055 656M1309 630L1303 620M1001 452L999 447M1228 649L1233 638M1127 567L1113 559M1431 647L1425 641M1192 636L1192 650M1007 505L1014 516M1196 519L1203 526M1072 530L1068 519M1303 648L1300 660M1054 525L1045 522M1045 370L1045 365M1196 611L1191 628M1388 610L1388 625M1176 669L1181 677M1076 660L1079 669M1181 535L1172 544M1193 549L1202 545M1033 642L1041 638M1247 552L1248 552M983 507L990 510M1273 605L1264 602M1159 482L1160 491M962 648L954 642M1186 523L1191 532M1018 439L1013 440M1020 391L1020 388M1051 600L1055 590M999 447L1003 448M1014 516L1016 507M1009 466L1014 458M1222 693L1218 685M1112 440L1120 426M961 621L974 619M1349 583L1345 575M1321 611L1310 610M1058 371L1058 363M1014 458L1006 457M1099 586L1082 586M986 583L978 588M1053 351L1056 355M1135 661L1127 652M1340 646L1329 643M1034 425L1038 441M1297 584L1294 595M1171 575L1154 575M1075 424L1080 426M968 532L970 529M957 558L960 556M1189 512L1184 520M1023 526L1016 537M1008 435L1009 431M947 556L952 556M1117 472L1113 461M1038 653L1025 650M1241 678L1235 679M1114 685L1112 690M1029 364L1026 362M1294 624L1287 633M1024 378L1027 375M1124 407L1122 400M1103 488L1087 486M963 561L968 563M950 591L945 583M945 566L947 571M1346 570L1354 575M1368 649L1360 645M1108 381L1108 396M962 549L962 545M1379 588L1375 578M1196 687L1194 690M1215 529L1221 533M1112 647L1098 652M1017 401L1020 400M1320 572L1327 573M1294 624L1288 613M1392 651L1395 645M1044 390L1042 380M991 529L981 530M1057 436L1045 447M1150 612L1157 601M964 527L964 531M1077 574L1074 564M1182 574L1189 578M1054 346L1056 349M1085 442L1097 439M1055 537L1050 548M1044 390L1046 400M990 491L992 488M1123 481L1126 468M1206 520L1211 524M1027 385L1033 387M1010 650L1013 642M1079 507L1086 514M1005 441L1012 444M1063 485L1051 496M980 596L995 586M1254 603L1248 590M1068 544L1077 548M1003 429L1004 426M1386 643L1390 635M1177 512L1189 512M1375 643L1362 636M991 449L988 450M1031 382L1033 380M996 521L986 520M1000 461L1000 463M1154 459L1141 462M1147 697L1144 690M1151 478L1144 485M960 556L965 558M1143 680L1144 689M1310 580L1319 586M1155 521L1149 513M1060 626L1052 631M1070 435L1057 436M1001 459L1007 461M969 545L969 544M1126 393L1119 395M1025 632L1022 641M1073 692L1077 683M1276 667L1271 669M1082 385L1088 377M1151 422L1144 431M1215 600L1223 601M947 556L949 559M1028 535L1018 547M1169 455L1163 456M1042 601L1051 600M1375 643L1383 647M1208 622L1200 618M1396 575L1399 581M1184 550L1177 555M969 544L972 541M1090 457L1091 469M977 534L974 531M983 507L980 502M1018 547L1009 552M1214 512L1206 520M1072 368L1080 362M979 481L983 480M995 458L1000 455M1422 601L1414 591M985 485L986 481M1007 396L1012 396M1122 490L1110 493M1349 583L1357 576M1057 413L1052 405M1310 580L1307 571M1054 358L1058 363M1313 620L1320 626M1395 618L1388 610M1053 351L1054 346M1147 668L1139 672M1002 414L999 415M962 534L964 531M1137 453L1141 462M1029 513L1024 504M1268 567L1265 559M1235 620L1239 612M1175 524L1184 520M997 485L999 482M1254 554L1259 557M1184 596L1169 592M1233 638L1224 641M1199 655L1198 644M1095 414L1083 409M1327 622L1331 606M978 612L980 596M964 596L954 610M1141 607L1150 612M948 618L940 620M1032 361L1026 362M1011 424L1012 421M1259 672L1253 674M1410 627L1410 614M1171 646L1181 647M1039 379L1040 376M1077 521L1068 519M1124 407L1129 410M963 561L960 556M945 566L949 559M1148 487L1160 491M969 626L961 621M1024 583L1010 578M1379 588L1387 579M1075 606L1065 607M1099 643L1087 634M980 502L977 497M1398 590L1399 581M991 656L989 658M1362 636L1358 624M1109 506L1110 493M998 540L998 555M1224 683L1218 685M1392 651L1383 647M1263 574L1268 567M1013 398L1017 399M1019 397L1024 400M1179 565L1194 570M1117 472L1123 481M1016 390L1015 385M960 541L958 536M1294 624L1295 633M974 504L971 502M994 645L999 633M1188 498L1192 497M1045 351L1050 352M977 540L980 537M1002 411L999 415M1137 453L1134 441M1036 501L1029 513M1094 517L1105 521M1202 514L1203 514M1271 561L1276 564M1018 380L1019 379M1015 385L1020 388M1168 489L1178 494M954 642L950 643M1272 581L1273 595M1087 396L1082 385M1340 585L1339 575M1054 364L1054 358M1312 658L1312 658M1352 600L1348 592M1036 373L1037 369M1001 410L1002 404M1160 491L1156 496M1188 687L1196 687M1330 654L1319 645M944 635L948 627M999 512L990 510M1131 676L1122 672M986 470L985 466M1307 571L1314 571M978 612L986 617M1010 390L1010 386M1146 591L1153 587M1055 422L1057 436M1003 448L1009 450M1169 602L1157 601M1310 610L1303 620M1060 676L1059 678M1416 645L1413 643M1206 688L1200 690M1169 555L1158 557M1065 560L1071 555M1012 401L1017 399M1014 619L1009 605M955 550L962 553M1023 526L1013 529M981 499L987 501M1205 598L1215 600M1368 599L1357 589M1161 590L1157 601M995 438L1001 440M1018 439L1012 436M1169 555L1172 544M1028 379L1027 375M1012 436L1016 433M1169 690L1162 690M1155 521L1145 522M1178 494L1185 486M1188 687L1181 677M974 647L972 653M1289 570L1294 569M1390 635L1397 629M1189 512L1180 503M1045 365L1051 366M1057 413L1067 415M1103 624L1099 616M1310 580L1320 572M1382 579L1386 571M997 622L999 633M1010 373L1016 377M964 538L967 536M1318 596L1311 601M1051 639L1058 645M967 524L966 520M1148 600L1150 612M1287 633L1295 633M1023 526L1030 522M1192 600L1196 611M1032 392L1039 394M1295 667L1294 662M1211 679L1212 686M1137 504L1149 513M1242 681L1247 676M1004 426L1005 422M1273 595L1273 605M1237 688L1229 681M1330 585L1340 585M1046 488L1030 495M1072 414L1083 409M1066 394L1075 401M952 579L945 583M1120 426L1110 424M948 618L942 608M1421 626L1413 637M1391 581L1398 590M1103 693L1100 690M1066 394L1056 396M1026 370L1026 366M1431 584L1423 590M962 553L967 555M1060 626L1062 636M1039 625L1034 633M1047 348L1045 351M1095 670L1103 682M1017 382L1013 380M977 509L983 511M1076 660L1067 661M978 494L983 496M1148 566L1141 561M1176 669L1165 661M1115 696L1119 690M1363 577L1369 578M1008 454L1003 448M1431 606L1431 603M1004 435L1002 433M1117 607L1110 610M1021 361L1026 362M1025 632L1034 633M1103 682L1106 690M991 529L984 527M974 500L971 502M1077 574L1082 586M1126 643L1127 652M964 527L965 527M973 549L975 543M953 560L948 565M1118 597L1110 600M1061 351L1065 340M1108 589L1110 600M1202 498L1192 497M1289 661L1294 662M1147 668L1144 656M986 481L989 479M1283 590L1283 576M1045 447L1033 456M1129 522L1121 518M1264 665L1273 667M1294 624L1285 625M1108 453L1102 444M950 591L953 601M1001 421L1002 417M1132 473L1134 471M1010 373L1013 380M1226 592L1213 588M1155 521L1164 534M1148 566L1154 575M1112 529L1112 515M996 521L987 516M957 562L962 564M1000 461L1001 459M1127 419L1124 407M1124 451L1109 451M1014 619L1029 621M1138 553L1151 551M1410 614L1413 604M1063 652L1072 643M1138 483L1140 478M996 427L997 421M1050 472L1064 475M1226 592L1223 601M1052 564L1054 578M1048 344L1055 341M1015 385L1013 380M1095 478L1087 486M1267 612L1273 605M1079 498L1090 496M1152 687L1144 689M1001 459L1006 457M1007 505L1016 507M1012 421L1014 417M1024 554L1036 547M1235 679L1229 681M1012 564L1020 570M1171 479L1174 470M1162 568L1158 557M1265 558L1270 548M1181 535L1186 523M1117 472L1109 474M1250 672L1241 662M1033 366L1035 363M1113 568L1127 567M953 560L957 559M1040 669L1048 675M1057 466L1050 463M1177 457L1166 460M1027 602L1018 605M1135 661L1127 662M1250 672L1237 672M1168 489L1159 482M985 504L992 506M1146 591L1137 600M953 535L958 536M1075 424L1086 418M984 488L990 491M1398 590L1395 599M1358 624L1354 615M1273 641L1280 650M1155 521L1167 512M1352 600L1354 615M1055 511L1063 526M1136 636L1129 627M1021 393L1026 397M1125 463L1120 460M1046 488L1054 484M1056 349L1060 354M1047 438L1045 419M1173 621L1177 606M980 537L980 533M1054 358L1060 360M1069 508L1066 498M1237 672L1241 678M988 514L987 516M1039 483L1030 495M984 473L983 468M998 540L1000 529M995 477L996 473M1094 450L1097 439M1070 631L1078 624M1114 668L1122 672M1180 503L1177 512M1242 681L1235 679M1158 682L1156 690M1009 416L1008 412M1218 685L1212 686M1302 602L1308 593M1033 568L1039 578M1155 521L1168 520M1062 550L1055 556M1212 577L1225 570M965 558L969 559M991 656L994 645M1123 682L1122 672M1075 401L1083 409M1158 682L1169 678M1016 374L1020 368M977 509L974 504M1099 460L1113 461M1286 673L1288 664M1142 494L1149 504M1038 441L1033 456M1414 591L1423 590M1345 575L1351 576M948 618L948 627M1019 415L1020 411M1181 690L1175 690M1201 580L1189 578M1429 630L1431 634M1020 388L1025 392M978 494L973 496M1039 368L1042 366M1188 488L1189 491M1175 687L1181 677M974 531L976 528M1310 580L1297 584M1302 602L1311 601M1283 576L1289 570M1289 661L1282 665M1057 436L1065 423M1192 650L1190 660M1330 654L1330 655M1361 569L1357 576M999 443L1005 441M1044 334L1048 344M1051 663L1040 669M1007 438L1013 440M1108 453L1115 457M1094 517L1084 527M1110 539L1112 529M970 575L980 567M1015 385L1022 385M1038 529L1048 532M1033 380L1034 376M1010 373L1020 368M1032 399L1039 394M1056 355L1056 349M1052 405L1059 410M1042 380L1040 376M1081 347L1071 347M1235 584L1240 593M1237 649L1249 657M1118 374L1108 379M1431 584L1423 583M1124 451L1120 460M1408 597L1413 604M984 477L984 473M1190 660L1185 670M1041 351L1042 347M1167 512L1171 509M1148 566L1151 551M999 512L992 506M1004 472L1005 468M1351 576L1357 576M1426 615L1418 619M1122 635L1126 643M1228 649L1232 657M980 434L992 439M1029 475L1025 464M1237 554L1244 560M1162 690L1156 690M1089 578L1077 574M1092 434L1097 439M968 563L965 558M1042 540L1036 547M977 534L977 540M1040 669L1036 672M952 546L951 553M1154 459L1163 456M1168 615L1173 621M1287 633L1273 641M978 490L984 492M1075 340L1084 345M1102 500L1110 493M981 499L987 497M1382 654L1383 647M1157 508L1149 504M1223 622L1236 629M1125 690L1119 690M1101 430L1100 442M1207 640L1209 649M1253 683L1259 672M1241 662L1237 672M1111 619L1099 616M1007 391L1010 386M1125 463L1134 471M965 543L969 544M1226 584L1212 577M974 469L984 465M941 613L948 618M1093 624L1099 616M1210 670L1201 665M964 531L965 527M1164 473L1171 479M992 439L994 433M957 558L952 556M1148 600L1141 607M984 527L986 524M1181 585L1182 574M1126 598L1118 588M1247 640L1251 648M1212 660L1221 672M1220 681L1211 679M1014 458L1019 471M1252 575L1263 574M1241 662L1229 669M1194 570L1207 567M1052 631L1062 636M1107 365L1102 369M983 646L974 633M1095 685L1094 688M1110 539L1100 541M1065 560L1055 556M1023 373L1027 375M1386 571L1375 578M1182 624L1173 621M1324 577L1327 573M1113 634L1112 647M1040 376L1042 373M1023 373L1016 374M1127 419L1114 413M1191 628L1199 629M1109 451L1115 457M965 558L962 553M1074 485L1075 473M962 553L968 551M1077 548L1071 555M1438 637L1431 640M1047 348L1048 348M1146 591L1157 601M1052 631L1039 625M977 509L983 507M1236 629L1223 631M1052 381L1042 380M1408 597L1406 588M1314 571L1320 572M1029 513L1016 507M1146 582L1136 570M1405 581L1411 582M1186 608L1173 621M1074 485L1064 475M1006 627L1004 642M1062 583L1054 578M1148 566L1158 557M1004 435L1003 429M1035 363L1035 362M1047 513L1045 522M1017 403L1022 403M1073 586L1062 583M1055 537L1062 550M1054 484L1064 475M1354 661L1348 653M991 529L986 524M1181 585L1169 592M962 538L964 538M1099 616L1110 610M1006 669L1007 663M1081 347L1080 362M1052 564L1063 574M1190 590L1202 590M1382 579L1387 579M1001 440L1005 441M1413 637L1419 642M1061 351L1071 357M1330 596L1318 596M998 424L1004 426M1244 560L1248 552M1110 677L1122 672M1087 396L1098 395M1029 475L1033 467M990 460L985 462M1035 408L1021 408M955 633L969 626M1035 366L1040 367M1436 613L1431 609M1330 596L1319 586M1259 652L1272 655M1212 660L1218 651M957 562L963 561M998 555L984 552M971 526L973 523M1108 396L1119 395M1140 539L1151 551M1010 386L1013 380M1048 348L1048 344M1084 478L1075 473M1084 617L1078 624M1380 602L1395 599M1147 635L1159 638M969 545L962 545M1186 523L1184 520M1287 643L1280 650M1212 631L1199 629M1163 464L1166 460M985 466L989 463M1094 405L1104 405M1095 478L1101 469M1008 412L1009 408M1438 625L1431 628M989 668L995 660M963 502L967 513M1156 468L1154 459M1149 648L1138 648M1145 531L1145 522M1195 672L1196 687M1032 358L1035 355M1024 554L1037 557M972 553L970 548M952 546L956 542M1368 649L1371 649M1117 607L1118 597M983 496L987 497M985 504L991 502M1069 671L1079 669M1369 578L1375 578M1192 600L1202 590M1282 607L1288 613M999 664L1001 662M1382 654L1371 649M1054 611L1060 599M1029 589L1038 589M1143 680L1153 674M1008 660L1007 663M1006 627L1016 630M1280 659L1282 665M1032 399L1024 400M1144 690L1138 690M1123 481L1111 483M1410 627L1400 639M1001 483L996 489M1044 390L1036 386M1042 366L1045 365M1007 400L1004 398M1007 505L1007 489M1253 683L1247 676M1180 484L1171 479M1039 394L1046 400M1344 602L1338 594M1199 655L1201 665M1241 543L1242 550M998 424L996 427M1247 552L1244 560M1331 572L1327 573M1203 526L1211 524M1062 550L1050 548M1308 593L1294 595M1018 380L1016 377M930 621L940 620M1093 358L1092 353M988 514L988 513M1374 607L1365 619M1054 335L1055 341M1008 435L1012 436M990 468L993 464M1319 634L1319 645M1017 382L1024 382M1045 504L1047 513M1016 377L1016 374M1069 379L1058 371M1208 691L1206 688M1003 406L1006 404M996 596L995 586M1361 569L1354 575M1223 622L1215 618M1112 440L1110 424M1386 571L1387 579M1080 426L1086 429M1267 632L1267 646M962 549L968 551M1189 541L1184 550M1019 471L1027 486M1357 589L1348 592M978 521L981 518M1055 341L1065 340M1069 379L1066 394M1110 677L1105 663M959 518L962 524M1409 650L1413 643M1085 442L1075 444M969 626L974 633M1254 603L1257 587M1267 612L1278 620M1127 567L1130 559M969 654L972 653M1073 586L1082 586M1341 656L1342 654M1387 579L1393 580M1015 406L1017 403M1138 690L1131 690M1361 609L1354 615M1030 658L1024 668M1312 650L1304 639M941 613L929 612M1353 649L1354 652M1020 388L1025 387M944 635L940 637M1397 629L1388 625M1054 578L1055 590M1023 370L1026 366M1124 578L1126 586M955 550L954 548M1099 364L1102 369M970 514L967 513M1085 442L1080 426M990 491L997 493M1163 625L1168 615M1149 513L1145 522M1185 468L1178 475M1109 580L1118 588M1001 440L995 435M1413 637L1407 644M995 435L1002 433M989 415L1001 410M1422 601L1413 604M1003 429L1009 431M1206 557L1207 567M1031 382L1036 386M1052 564L1065 560M1400 639L1390 635M1360 645L1360 651M1213 588L1212 577M1055 511L1047 513M1436 613L1431 621M1017 489L1027 486M1014 619L1018 605M1074 564L1089 569M983 480L986 481M1099 643L1112 647M1109 506L1094 517M1027 602L1038 589M1050 346L1048 344M1042 380L1042 373M1143 411L1133 416M1074 564L1071 555M1120 536L1132 537M969 545L973 549M1076 456L1068 454M1007 402L1007 400M1057 466L1064 475M1379 626L1388 625M989 668L983 657M1431 647L1431 640M963 502L971 502M1024 554L1018 547M1088 377L1072 368M984 552L976 547M1109 506L1102 500M1199 655L1192 650M1162 671L1169 678M1099 586L1094 594M1146 582L1153 587M1134 471L1140 478M1085 442L1083 450M1039 483L1046 488M1250 672L1253 674M1109 474L1103 488M1108 379L1112 385M978 490L984 488M1323 660L1324 656M1159 638L1172 630M1073 586L1070 596M1425 638L1421 626M1132 473L1123 481M1078 636L1087 634M998 555L990 559M1082 685L1077 683M962 534L967 536M1354 615L1365 619M965 543L972 541M1075 424L1073 419M1031 382L1025 383M980 533L981 530M994 496L990 491M1388 592L1398 590M1190 590L1184 596M1127 419L1120 426M1055 590L1047 587M1229 669L1222 661M1206 557L1219 557M957 558L953 553M981 671L983 657M1130 549L1130 559M960 548L957 547M996 473L997 470M1031 669L1030 658M1051 663L1067 661M1191 628L1180 635M1426 615L1413 604M1114 685L1119 690M1168 489L1180 484M1084 617L1091 607M1024 378L1023 373M1201 580L1213 588M950 591L944 590M1422 601L1431 603M1149 491L1156 496M1045 570L1054 578M1144 656L1157 660M1313 620L1303 620M1113 634L1122 635M1042 540L1028 535M1042 358L1045 365M1373 662L1371 649M989 463L990 460M1357 576L1363 577M959 518L967 513M1156 468L1151 478M1024 504L1016 507M1193 549L1206 557M1282 607L1278 620M996 596L1008 595M1130 607L1137 600M1020 411L1021 408M1155 521L1157 508M1035 355L1039 354M1196 519L1199 509M1259 652L1256 665M958 544L962 545M983 646L983 657M1006 627L999 633M1146 591L1148 600M1070 596L1055 590M1265 558L1271 561M1358 624L1372 631M1085 442L1092 434M976 528L976 524M1044 390L1039 394M1181 647L1171 655M1004 642L999 633M1192 600L1184 596M990 491L985 485M1038 441L1024 449M1083 409L1086 418M997 431L1002 433M934 640L935 633M1164 534L1149 539M1063 485L1074 485M1210 539L1215 529M1075 606L1091 607M1119 690L1112 690M1199 695L1194 690M1336 564L1339 575M1256 665L1253 674M1145 434L1147 436M1000 461L993 461M990 456L988 450M940 624L935 625M1038 517L1047 513M1151 478L1140 478M1032 355L1036 352M1249 541L1247 552M1102 500L1090 496M1035 408L1023 405M1395 599L1408 597M1035 366L1039 368M1153 496L1156 496M1235 584L1237 572M1131 619L1141 607M968 517L970 514M1042 347L1048 344M1095 414L1104 405M1175 687L1169 678M1027 602L1033 609M969 545L965 543M1005 468L1005 464M1009 394L1006 392M1362 636L1349 628M1006 404L1007 400M980 626L974 619M953 601L942 608M1138 483L1142 494M1169 455L1159 451M997 494L994 496M1109 506L1126 506M1115 457L1120 460M1396 575L1393 580M967 555L972 553M981 518L981 514M1112 529L1100 528M1036 547L1050 548M1090 457L1083 450M978 486L984 488M1390 635L1395 645M964 527L960 530M1214 512L1203 514M995 458L994 453M1058 371L1049 370M1411 582L1417 582M992 451L988 450M1100 541L1102 553M1028 379L1031 382M1018 678L1024 668M1179 565L1162 568M1302 602L1294 595M1402 603L1413 604M1112 647L1122 635M1007 396L1009 394M1100 690L1094 688M1074 564L1063 574M1110 539L1113 548M1310 580L1301 570M1044 357L1048 355M1010 578L1017 593M1032 399L1026 397M974 524L974 520M1185 478L1188 488M1001 483L997 485M964 538L972 541M986 425L994 433M1120 536L1112 529M1100 442L1102 444M1001 613L998 604M1251 620L1247 631M1084 527L1086 514M986 524L986 520M1065 680L1059 678M1047 438L1038 441M1077 574L1089 569M1114 685L1106 690M1026 370L1029 372M1245 569L1244 580M1068 544L1071 555M1124 407L1126 405M1051 663L1055 656M1055 537L1054 525M1020 664L1030 658M962 549L970 548M1379 588L1381 579M1102 369L1105 374M1436 575L1431 584M1076 456L1083 464M980 567L972 566M1004 435L1007 438M1407 578L1399 581M1431 584L1431 590M1090 544L1093 534M1013 398L1012 396M966 490L973 496M1088 377L1080 362M1035 362L1039 362M1196 519L1206 520M972 541L975 543M1188 498L1189 491M1045 351L1048 348M1267 612L1264 602M1077 521L1072 530M1122 400L1126 405M1108 453L1099 460M1108 589L1118 597M986 481L992 484M991 544L980 537M1331 606L1339 615M990 491L996 489M1431 621L1431 628M1143 680L1139 672M1001 421L1005 422M1177 512L1184 520M1124 436L1120 426M954 642L955 647M1162 544L1151 551M991 449L990 444M1048 675L1042 673M1340 585L1333 574M1265 558L1275 557M1031 382L1037 382M1312 658L1318 657M1319 645L1318 657M1227 561L1219 557M1000 461L1005 464M1018 656L1030 658M1081 647L1072 643M1138 553L1140 539M1245 600L1239 612M1250 611L1261 620M1232 545L1227 553M1433 593L1431 590M1339 615L1340 627M988 603L986 617M1006 627L997 622M1081 347L1084 345M1042 380L1046 371M1093 358L1094 368M1012 421L1018 422M1126 393L1122 400M1208 622L1215 618M1073 692L1071 682M1130 607L1131 619M1060 676L1065 680M1009 408L1010 405M1027 375L1026 370M1416 645L1419 642M1259 652L1267 646M1033 366L1037 369M947 556L951 553M1042 373L1041 371M1147 635L1139 623M1050 548L1055 556M940 624L948 627M1045 402L1032 399M969 544L975 543M983 507L985 504M970 575L972 566M1133 416L1137 421M1191 628L1200 618M1082 692L1088 687M975 489L978 486M1006 425L1005 422M1169 555L1162 544M1021 408L1023 405M1206 610L1200 618M1018 678L1012 665M1012 436L1009 431M1186 695L1194 690M1395 618L1402 612M927 634L935 633M954 511L967 513M974 647L978 655M1057 457L1050 463M1410 627L1402 612M999 512L1006 517M1045 365L1047 361M1057 413L1059 410M1340 646L1348 653M986 425L997 421M964 538L962 534M987 638L999 633M1227 561L1237 554M1169 555L1162 568M1171 575L1162 568M1266 588L1264 602M1083 537L1077 548M1074 564L1065 560M1120 426L1114 413M995 477L999 478M1259 652L1264 665M1226 592L1235 602M1289 661L1295 648M968 612L972 599M1032 392L1033 387M1135 685L1144 689M1295 667L1300 660M1211 679L1218 685M993 464L993 461M983 646L974 647M1395 645L1389 646M1004 426L1001 421M1237 688L1235 679M960 548L958 544M1105 415L1114 413M1022 415L1019 415M1019 379L1024 378M1087 396L1096 383M1368 599L1371 584M997 622L1001 613M1102 500L1094 517M1102 444L1109 451M1207 640L1199 629M1162 544L1158 557M1330 596L1331 606M1070 435L1075 444M1099 460L1101 469M1005 464L1007 461M1017 426L1012 421M1042 358L1047 361M1090 646L1087 634M1407 578L1411 582M1021 361L1020 368M1023 526L1014 516M1017 403L1020 400M1018 605L1008 595M1162 544L1172 544M966 490L977 485M1105 663L1098 652M963 588L962 578M999 512L988 514M1070 435L1080 426M1226 537L1222 546M1272 655L1267 646M1188 498L1196 503M1216 643L1212 631M1112 385L1115 390M1094 450L1083 450M954 610L961 621M1171 646L1172 630M1166 460L1170 465M986 481L984 477M1014 619L1001 613M1310 610L1295 609M1192 636L1180 635M997 431L1003 429M1009 394L1010 390M1077 683L1071 682M1045 402L1039 394M993 445L990 444M1035 366L1033 366M1033 380L1037 382M1073 678L1069 671M1171 575L1166 584M1080 362L1092 353M1340 585L1345 575M1054 364L1058 363M1312 658L1306 659M1113 634L1103 624M1236 563L1225 570M1154 459L1145 455M1217 609L1229 609M1149 504L1156 496M986 520L987 516M984 477L989 479M985 522L981 518M1097 343L1092 353M1009 431L1016 429M1066 404L1075 401M980 626L986 617M1001 459L1000 455M941 613L942 608M1012 421L1009 416M1216 643L1207 640M1135 661L1147 668M1026 366L1031 369M1180 503L1178 494M1066 404L1056 396M1134 441L1144 431M1060 676L1053 677M1027 375L1034 376M1421 626L1431 621M1273 595L1286 599M953 560L952 556M997 494L997 493M1156 496L1164 501M1061 351L1060 354M1145 434L1145 446M1024 449L1012 447M1016 537L1028 535M1057 457L1068 454M991 449L993 445M1017 593L1018 605M1431 609L1431 615M1082 692L1077 683M979 481L979 479M1058 371L1051 366M1084 527L1100 528M1024 554L1027 562M1081 647L1074 652M1028 379L1033 380M1052 381L1044 390M1186 695L1181 690M1059 678L1053 677M1333 634L1320 626M964 596L953 601M1075 444L1083 450M974 647L966 652M1007 489L996 489M1048 348L1050 346M962 566L957 562M1032 399L1028 394M1003 410L1001 410M1340 646L1336 655M964 531L968 532M1201 580L1194 570M964 538L971 537M1137 453L1145 455M992 488L997 485M1057 413L1045 419M1146 582L1154 575M1154 575L1162 568M995 435L992 439M1380 602L1379 588M1180 484L1178 494M1101 430L1097 439M1002 417L1006 419M1091 430L1101 430M1295 667L1288 664M1236 563L1237 572M1180 503L1171 509M1330 585L1319 586M1159 638L1149 648M1024 668L1018 667M1025 464L1033 467M1036 547L1028 535M1124 578L1127 567M1033 642L1022 641M1375 643L1368 649M1350 639L1349 628M974 504L974 500M1063 574L1065 560M1201 534L1203 526M1007 505L999 512M991 529L980 537M1193 549L1191 560M1191 560L1177 555M1038 529L1028 535M1153 587L1157 601M1019 415L1016 410M1004 435L1008 435M1105 521L1100 528M1103 682L1100 690M1013 398L1016 394M1039 354L1041 351M1095 670L1095 685M1103 563L1095 559M1083 409L1094 405M974 500L973 496M944 596L944 590M1067 661L1055 656M972 541L977 540M1016 537L1018 547M1147 436L1151 441M1188 488L1185 486M1071 357L1072 368M1121 555L1113 559M953 560L949 559M1222 546L1221 533M967 524L962 524M1202 498L1196 503M1093 624L1087 634M1264 676L1265 671M1062 583L1055 590M1169 602L1177 606M999 443L1001 440M1407 644L1401 645M1044 334L1042 347M976 512L976 512M998 576L1002 568M1108 453L1109 451M1344 602L1348 592M1045 402L1052 405M1007 663L1001 662M1177 512L1168 520M967 536L964 531M1154 575L1166 584M1045 616L1033 609M1117 607L1126 598M1425 638L1413 637M971 526L976 528M1118 374L1105 374M1210 670L1212 660M1124 451L1115 457M1137 504L1142 494M1083 409L1073 419M1344 602L1331 606M1041 351L1036 352M1244 580L1240 593M968 612L954 610M1008 412L1013 413M1139 623L1150 612M1052 381L1058 371M1007 400L1007 396M972 653L966 652M1171 479L1178 475M1007 391L1009 394M1163 439L1159 451M1062 362L1072 368M1032 358L1035 362M1002 452L1008 454M996 521L1000 529M1013 481L1001 483M1119 624L1122 635M1042 373L1045 370M1177 457L1170 465M1154 459L1159 451M981 514L983 511M1105 374L1108 379M981 499L983 496M1099 586L1089 578M1159 451L1163 456M1135 661L1138 648M996 443L1001 440M1149 513L1157 508M1029 589L1017 593M1167 512L1157 508M978 490L975 490M1042 366L1045 370M1136 570L1130 559M1182 624L1180 635M1043 457L1050 463M1148 487L1149 491M1048 355L1050 352M1149 624L1163 625M1145 531L1140 539M967 514L968 517M1038 653L1030 658M962 566L967 566M956 542L958 536M1161 590L1169 602M1188 488L1194 475M1331 606L1318 596M1144 472L1140 478M1146 582L1135 583M1431 628L1431 634M1043 685L1051 676M962 648L966 652M1027 602L1025 612M1039 625L1029 621M1054 525L1047 513M1354 652L1348 653M1060 626L1070 631M1126 598L1126 586M1095 685L1100 690M1157 648L1157 660M1273 676L1271 669M1022 415L1020 411M1073 586L1077 574M1058 363L1060 360M1090 544L1077 548M1042 358L1039 362M1318 596L1319 586M977 509L977 505M1172 697L1175 690M1134 403L1126 405M1201 534L1191 532M1000 455L1001 452M1349 583L1357 589M1159 482L1151 478M1015 406L1021 408M1220 681L1228 679M1229 609L1235 620M1012 396L1016 394M1371 584L1357 589M1273 641L1278 630M1018 656L1012 665M1196 519L1186 523M1058 645L1055 656M1154 459L1155 447M952 556L953 553M1398 590L1406 588M986 617L974 619M971 537L977 540M1091 430L1092 434M1006 586L998 576M1070 596L1065 607M1043 457L1045 447M1042 601L1027 602M1034 389L1033 389M1047 438L1045 447M954 610L953 601M1099 460L1091 469M990 510L992 506M1137 421L1140 426M1084 617L1077 614M1237 649L1247 640M1222 546L1232 541M1192 497L1196 503M1382 579L1381 579M1051 496L1054 484M1164 473L1163 464M1303 648L1312 650M1013 529L1014 516M1024 400L1026 397M1036 672L1030 670M1042 380L1036 386M1287 643L1295 648M1053 686L1051 676M1030 658L1043 659M998 576L995 586M1035 366L1035 363M1033 380L1039 379M1250 611L1245 600M1056 355L1060 354M1009 605L1018 605M985 466L985 462M1148 566L1162 568M986 617L1001 613M1099 572L1089 569M1027 602L1017 593M988 603L996 596M957 562L957 559M1421 626L1418 619M1108 396L1115 390M1199 655L1212 660M1264 665L1265 671M984 477L989 475M1114 668L1110 677M1000 463L1005 464M1007 402L1010 405M1278 620L1278 630M1137 517L1149 513M1251 620L1235 620M1069 379L1072 368M933 600L942 608M968 563L969 559M1033 642L1034 633M942 608L943 602M1055 511L1059 503M1091 506L1079 507M1144 689L1144 690M1193 549L1199 563M1006 425L1009 431M1095 478L1103 488M1189 541L1202 545M1024 449L1012 444M1009 450L1012 447M999 664L1007 663M1382 654L1377 648M1232 545L1232 541M980 567L990 559M1207 567L1199 563M1235 602L1223 601M1060 626L1053 620M1256 636L1247 631M1021 393L1025 392M980 541L977 540M1253 683L1253 674M1045 419L1052 405M947 571L948 565M1159 610L1163 625M1095 685L1087 683M1241 543L1237 546M957 558L957 559M1170 465L1174 470M992 484L989 479M1072 530L1084 527M960 548L962 553M1402 603L1410 614M996 473L1000 475M1054 335L1048 344M990 468L989 463M962 648L955 647M1362 655L1366 650M1371 649L1366 650M1297 584L1301 570M1118 588L1126 586M983 657L978 655M1016 377L1013 380M1132 537L1137 529M1208 691L1212 686M1029 475L1019 471M1259 652L1249 657M992 451L992 453M1386 571L1381 579M1139 426L1140 426M1006 517L1000 529M1414 591L1413 604M944 597L953 601M972 566L972 557M1088 655L1098 652M1033 642L1025 650M1020 570L1010 578M989 463L993 464M1172 697L1162 690M1171 646L1159 638M1134 403L1133 416M1018 422L1014 417M1072 643L1062 636M1014 417L1019 415M1131 676L1127 662M991 529L980 533M1015 406L1012 401M1035 355L1039 362M1119 624L1131 619M1004 435L1009 431M1038 441L1025 432M1069 463L1057 466M1051 366L1054 364M1126 506L1137 517M944 635L945 640M1078 624L1077 614M957 547L958 544M951 553L954 548M1139 426L1134 441M1147 668L1153 674M1143 680L1152 687M976 528L981 530M1014 458L1024 449M1185 468L1174 470M1112 647L1105 663M1333 634L1350 639M1330 585L1333 574M1413 637L1413 643M1135 583L1126 586M995 435L997 431M1141 462L1145 455M1366 650L1360 651M989 415L999 415M1382 579L1379 588M1118 588L1118 597M1013 529L1006 517M1010 390L1011 387M954 642L955 633M1006 473L1000 475M976 512L977 509M996 521L986 524M1329 643L1330 654M1016 630L1013 642M1360 645L1366 650M966 652L960 650M1094 450L1085 442M990 460L987 456M1113 568L1124 578M985 522L984 527M968 517L974 520M1203 514L1206 520M1148 487L1151 478M1023 526L1028 535M1010 428L1017 426M1006 404L1010 405M1063 445L1057 436M935 633L930 630M963 502L969 507M941 576L945 583M1071 347L1065 340M1051 639L1050 648M1099 586L1109 580M1095 670L1110 677M1352 600L1357 589M1007 391L1010 390M933 600L944 596M981 518L986 520M1072 368L1058 371M996 443L993 445M1100 601L1094 594M1414 591L1406 588M1069 508L1079 498M1185 478L1185 486M977 505L980 502M1117 607L1123 614M979 481L982 484M1038 653L1033 642M995 458L1001 459M978 490L978 486M1032 399L1023 405M1323 660L1330 655M1070 435L1085 442M993 445L994 442M1257 587L1266 588M1020 400L1019 397M1044 357L1047 361M974 524L976 524M1021 408L1022 403M1137 517L1145 522M957 547L956 542M1295 609L1288 613M991 656L1001 650M1050 346L1054 346M1094 517L1086 514M1201 665L1190 660M1139 623L1131 619M971 502L973 496M967 514L970 514M1287 643L1295 633M1141 462L1134 471M1006 445L1005 441M1093 358L1095 358M1401 645L1395 645M1159 638L1163 625M1051 639L1062 636M1054 335L1065 340M1312 658L1306 659M1362 655L1354 652M1038 517L1030 522M1159 482L1171 479M1034 376L1040 376M1208 691L1200 690M1022 415L1021 408M1055 511L1054 525M1436 613L1431 606M950 591L944 596M1386 571L1393 580M1054 346L1055 341M957 559L960 556M1114 685L1103 682M973 523L968 517M1217 609L1223 601M1422 601L1431 596M1140 539L1137 529M976 512L981 514M1109 580L1108 589M1042 358L1041 358M974 500L977 497M1186 523L1175 524M1188 687L1195 672M1126 643L1138 648M959 518L965 519M1013 413L1019 415M1123 682L1131 690M1193 549L1184 550M942 586L945 583M1095 559L1102 553M1256 636L1251 620M1413 604L1418 619M970 575L962 566M998 604L1008 595M1017 593L1008 595M1212 660L1222 661M987 501L987 497M1163 456L1166 460M1034 389L1036 386M1265 558L1265 559M1181 585L1171 575M1023 526L1029 513M1272 655L1273 667M1244 580L1257 587M1077 521L1084 527M1055 511L1045 504M1024 449L1025 464M934 640L940 637M1001 440L1002 437M1020 570L1027 562M1025 392L1025 387M1131 619L1129 627M1199 695L1200 690M997 390L1004 398M1053 357L1056 355M1124 436L1134 441M1374 617L1372 631M1042 380L1037 382M990 456L987 456M1145 531L1137 529M1179 565L1177 555M1032 355L1031 356M1265 558L1257 553M944 635L936 631M1309 630L1320 626M1035 366L1035 362M1153 496L1149 491M1164 502L1171 509M1098 395L1094 405M997 470L1004 472M996 470L997 470M1125 463L1137 453M1009 466L1007 461M1035 408L1045 402M1312 650L1319 645M1348 653L1342 654M984 552L972 557M1105 351L1095 358M1124 697L1125 690M1124 578L1136 570M1007 402L1012 401M1303 648L1304 639M1009 408L1016 410M1113 634L1102 634M1069 463L1068 454M1114 668L1127 662M1142 494L1144 485M1162 671L1157 660M950 643L945 640M963 502L973 496M1144 472L1151 478M941 576L947 571M1103 563L1099 572M1006 473L1019 471M1102 500L1091 506M967 555L968 551M1250 672L1247 676M1117 607L1110 600M1099 643L1090 646M983 496L984 492M1006 425L1010 428M1299 568L1301 570M1018 656L1008 660M1018 678L1030 670M1028 379L1024 378M1100 541L1100 528M1323 660L1318 657M1223 622L1223 631M984 490L984 492M1199 629L1200 618M1082 586L1094 594M964 596L970 584M1040 367L1035 362M1181 677L1185 670M1060 599L1055 590M975 489L977 485M958 544L956 542M1045 365L1049 370M1327 622L1339 615M1037 369L1041 371M1044 357L1045 351M979 481L964 478M960 530L962 524M1034 425L1020 419M980 541L980 537M1006 586L995 586M1100 442L1097 439M981 457L984 465M1001 421L997 421M1213 588L1202 590M1031 382L1033 387M1198 490L1188 488M984 465L985 466M994 496L997 493M980 626L974 633M1196 503L1199 509M1192 600L1186 608M1210 539L1201 534M993 464L998 466M960 548L962 549M1214 512L1202 514M1201 580L1207 567M1349 583L1348 592M1330 655L1324 656M1099 460L1090 457M952 579L950 591M1033 389L1036 386M945 640L940 637M1295 648L1295 633M1091 506L1079 498M1212 552L1210 539M1060 360L1063 359M1247 631L1235 620M1029 513L1030 522M970 514L974 515M992 451L991 449M1410 614L1418 619M1226 584L1213 588M1422 601L1431 609M1241 662L1232 657M1088 377L1096 383M1267 632L1256 636M968 612L974 619M1164 473L1174 470M1058 645L1072 643M1373 662L1366 650M989 463L993 461M1178 494L1164 501M1294 662L1288 664M1081 647L1090 646M1004 435L1002 437M1013 413L1009 408M1123 682L1119 690M963 588L970 584M1035 362L1035 355M1035 355L1041 358M1196 519L1203 514M953 553L955 550M1212 631L1208 622M1066 498L1059 503M986 583L998 576M1229 609L1223 601M1210 539L1221 533M1353 558L1354 575M973 549L976 547M967 513L969 507M983 646L978 655M972 511L969 507M994 453L1000 455M1038 517L1045 504M1127 567L1121 555M1009 605L1001 613M962 534L958 536M1010 578L1002 568M1009 394L1012 396M1083 537L1084 527M1087 683L1087 665M993 568L990 559M1257 587L1264 602M1295 609L1294 595M954 642L966 640M1042 540L1048 532M1125 463L1141 462M1177 512L1177 512M1026 397L1028 394M1410 627L1421 626M1025 632L1016 630M1116 386L1119 395M1006 473L1004 472M1051 496L1045 504M1319 645L1324 656M1076 660L1069 671M1302 602L1310 610M979 479L981 473M1410 614L1402 612M1215 567L1212 577M1174 470L1178 475M991 529L996 521M971 557L967 555M985 522L986 524M968 517L974 515M983 480L984 477M1433 593L1431 584M1237 546L1242 550M1012 564L1010 578M1081 347L1075 340M1108 453L1113 461M1215 567L1225 570M1032 358L1026 362M1169 555L1177 555M1022 385L1024 382M1368 599L1379 588M1095 670L1095 660M1009 408L1006 404M1416 645L1425 641M966 640L974 633M953 601L943 602M1002 452L1000 455M953 560L957 562M1050 648L1058 645M1014 619L1006 627M1152 687L1156 690M981 518L987 516M1240 593L1245 600M1426 615L1431 609M977 497L978 494M996 443L994 442M1083 464L1091 469M1031 669L1030 670M944 597L943 602M964 527L962 524M991 449L996 450M1309 630L1304 639M1032 399L1023 401M1012 447L1012 444M1189 512L1199 509M1021 408L1017 403M1018 678L1018 667M1068 544L1072 530M1212 552L1219 557M962 538L958 536M1034 389L1039 394M1123 544L1130 549M1288 613L1278 620M978 612L968 612M1048 348L1050 352M1043 468L1039 483M1072 530L1063 526M1043 457L1033 456M954 548L956 542M986 425L996 427M985 462L987 456M1204 684L1212 686M1047 438L1055 422M1247 631L1247 640M989 475L996 473M1002 437L1002 433M1310 610L1311 601M1224 527L1221 533M929 612L941 614M1009 605L1008 595M995 431L986 425M1212 577L1207 567M1249 657L1251 648M1019 379L1021 376M960 650L955 647M1006 586L1008 595M1188 687L1188 690M1371 584L1375 578M1016 497L1030 495M1226 537L1234 528M1099 643L1102 634M1204 684L1195 672M974 520L978 521M1135 685L1138 690M1431 584L1422 575M974 504L977 505M1011 387L1010 386M1095 559L1089 569M1033 456L1033 467M1288 568L1294 569M1159 610L1157 601M1042 358L1044 357M1084 478L1091 469M954 571L953 560M1123 544L1132 537M1407 578L1405 581M1050 472L1054 484M1108 381L1096 383M930 630L935 625M983 646L994 645M944 635L940 624M954 610L948 618M966 490L975 490M1039 354L1041 358M1023 370L1023 373M1154 435L1147 436M1374 617L1379 626M1028 379L1025 383M1006 627L1013 642M1374 617L1374 607M958 544L960 541M984 447L987 456M951 653L960 650M1211 521L1206 520M1004 642L1013 642M1109 506L1112 515M1138 648L1127 652M999 443L1006 445M1126 598L1133 591M1053 357L1048 355M1075 606L1070 596M1176 669L1162 671M1099 460L1094 450M997 431L997 427M1052 564L1045 556M1025 632L1033 642M1047 361L1051 366M1269 621L1278 630M986 583L993 568M1207 640L1212 631M1221 517L1211 524M1181 585L1166 584M1130 607L1126 598M1042 380L1039 379M1126 506L1112 515M973 496L975 490M1181 677L1181 690M1308 593L1311 601M1076 660L1087 665M1069 463L1075 473M978 588L980 576M984 477L981 473M1319 634L1320 626M1136 636L1126 643M1108 381L1108 379M1433 593L1431 596M1217 609L1215 618M1081 347L1092 353M1097 343L1084 345M997 470L1005 468M996 470L998 466M1009 431L1010 428M1306 659L1300 660M1321 611L1331 606M941 613L941 614M1018 425L1012 421M1109 474L1095 478M1069 463L1064 475M984 552L972 553M950 591L944 597M1007 400L1012 401M936 631L935 625M1087 683L1082 685M1070 631L1072 643M1195 672L1201 665M1009 408L1015 406M1027 375L1029 372M940 620L935 625M1112 440L1101 430M1063 445L1045 447M1034 425L1047 438M1207 640L1198 644M1061 351L1056 349M962 545L965 543M981 514L987 516M1082 385L1075 391M1053 686L1053 677M1206 610L1215 618M1426 615L1431 621M1402 603L1408 597M1054 611L1053 620M1090 544L1102 553M993 482L992 480M978 486L982 484M1082 692L1082 685M1033 568L1031 577M979 481L977 485M1020 400L1023 401M1006 425L1011 424M1091 506L1086 514M1286 599L1294 595M1012 564L1027 562M984 490L984 488M1069 463L1057 457M1038 529L1045 522M1121 555L1130 549M1186 695L1188 690M1126 506L1137 504M927 634L930 630M1201 580L1190 590M1040 367L1039 362M1048 355L1050 359M1151 551L1149 539M1121 555L1130 559M1340 646L1342 654M1002 381L1010 386M1141 607L1137 600M1362 636L1350 639M1204 684L1200 690M992 488L992 484M986 583L980 576M1227 537L1232 541M1309 630L1295 633M1091 607L1077 614M1201 580L1212 577M1101 430L1092 434M1087 396L1075 401M994 442L992 439M1098 395L1104 405M960 548L962 545M1288 664L1282 665M1256 636L1251 648M1177 512L1175 524M1091 506L1090 496M991 460L990 456M1116 402L1104 405M1029 475L1027 486M1118 656L1126 643M1105 415L1104 405M1362 636L1368 649M1256 565L1268 567M1354 575L1357 576M990 444L992 439M1079 498L1087 486M1105 415L1110 424M1098 395L1108 396M1149 648L1157 660M1259 557L1265 559M1180 484L1182 480M1063 445L1068 454M1212 631L1215 618M1000 455L1006 457M1212 552L1202 545M1283 590L1286 599M1391 581L1387 579M1253 674L1247 676M1204 684L1210 670M1103 563L1102 553M1173 466L1174 470M952 556L957 559M1043 685L1042 673M1063 686L1071 682M1105 663L1095 660M1390 635L1388 625M1154 435L1155 446M972 557L972 553M1105 415L1095 414M1164 502L1167 512M1050 648L1055 656M1023 370L1020 368M972 541L971 537M1029 621L1034 633M984 447L990 444M1194 570L1191 560M951 653L950 643M1029 621L1025 612M1066 404L1059 410M1264 676L1271 669M1055 422L1045 419M976 512L972 511M1163 625L1172 630M1100 601L1110 610M1100 601L1099 616M1017 489L1030 495M968 612L961 621M1029 475L1043 468M1086 418L1086 429M1256 636L1247 640M1312 650L1318 657M1025 387L1027 385M1045 402L1046 400M1267 632L1278 630M1047 361L1048 355M1003 406L1002 404M1035 366L1037 369M1034 425L1035 408M1056 355L1060 360M1075 401L1072 414M1006 473L1005 468M1062 362L1071 357M1269 621L1267 632M986 470L983 468M1036 386L1039 394M1346 570L1345 575M1019 379L1016 377M991 529L1000 529M1019 471L1013 481M999 482L999 478M1276 564L1282 566M985 522L986 520M1358 624L1349 628M970 584L980 576M1294 624L1309 630M1003 410L1009 408M1118 656L1114 668M1153 496L1142 494M1119 624L1111 619M1237 649L1233 638M1280 659L1272 655M1155 696L1162 690M1035 408L1032 399M1099 572L1089 578M1099 572L1095 559M1422 601L1423 590M1163 439L1155 446M1215 529L1203 526M1114 413L1110 424M1421 626L1431 628M999 512L996 521M1002 452L1001 452M1016 537L1008 540M1137 453L1124 451M1061 351L1063 359M981 514L977 509M1181 585L1189 578M1113 548L1113 559M1155 447L1159 451M1226 592L1215 600M1259 652L1256 636M1199 629L1198 644M1148 566L1146 582M1135 583L1133 591M996 443L995 438M1051 600L1045 616M1043 468L1050 463M1069 508L1059 503M1200 690L1194 690M1256 565L1265 559M974 524L971 526M1319 634L1304 639M1069 671L1065 680M1066 394L1052 381M1148 600L1137 600M1039 362L1045 365M954 571L947 571M1148 487L1144 485M1020 664L1018 667M1388 610L1374 607M986 583L995 586M1048 348L1053 351M960 541L962 538M969 507L971 502M962 566L962 564M952 556L951 553M1144 472L1134 471M1017 489L1013 481M997 493L996 489M1103 488L1110 493M995 435L994 433M997 427L998 424M1014 516L1006 517M991 529L991 544M1149 624L1150 612M1090 646L1088 655M1095 670L1087 665M1017 382L1022 385M1112 529L1121 518M1273 676L1276 667M1036 386L1037 382M1045 570L1039 578M998 555L991 544M1232 657L1229 669M972 511L976 512M987 516L983 511M1045 351L1042 347M1050 472L1046 488M974 520L981 518M1439 600L1431 603M1304 663L1312 658M1304 639L1319 645M1172 697L1181 690M1134 403L1122 400M1095 414L1101 430M1333 574L1339 575M1168 489L1160 491M1000 455L996 450M1136 636L1138 648M954 571L962 578M1087 396L1075 391M1381 636L1383 647M1172 630L1173 621M1029 372L1031 369M1051 639L1041 638M1012 396L1010 390M1165 661L1171 655M1054 611L1065 607M1066 394L1075 391M1172 544L1184 550M1008 446L1012 447M1039 354L1044 357M1333 634L1329 643M1023 370L1026 370M1063 686L1059 678M1091 430L1086 429M1086 558L1074 564M976 547L975 543M1054 578L1047 587M990 510L985 504M996 450L1001 452M982 484L983 480M1222 546L1227 537M1283 590L1294 595M1129 522L1122 528M995 435L1002 437M1264 676L1259 672M1063 485L1054 484M1016 433L1016 429M1010 390L1016 394M1053 357L1050 352M1283 576L1288 568M998 540L991 544M1024 400L1021 393M1051 676L1053 677M976 512L981 514M1086 558L1077 548M1312 650L1306 659M1166 584L1169 592M1047 361L1054 364M1330 596L1338 594M1415 580L1417 582M967 536L968 532M985 466L983 468M987 456L988 450M996 470L990 471M1011 416L1009 416M1108 396L1112 385M1264 665L1271 669M1175 687L1175 690M1007 402L1006 404M1005 422L1006 419M1265 671L1259 672M1282 607L1273 605M1091 506L1094 517M1176 669L1171 655M1093 534L1100 528M1286 599L1282 607M984 552L973 549M1155 696L1150 690M984 504L985 504M1007 400L1013 398M1093 624L1078 624M1026 366L1029 364M962 648L974 647M1169 678L1169 690M1177 606L1184 596M1285 625L1278 630M1024 554L1009 552M997 421L999 415M1113 634L1119 624M1130 607L1123 614M1068 544L1055 537M977 505L983 507M1364 578L1357 589M1144 689L1150 690M1114 668L1105 663M1077 521L1079 507M1071 357L1081 347M1294 569L1301 570M1029 589L1031 577M993 445L999 447M1016 630L1029 621M1016 394L1019 397M1054 611L1051 600M1060 599L1065 607M1042 540L1050 548M1020 400L1022 403M1119 624L1129 627M1209 649L1198 644M1038 653L1043 659M1050 346L1053 351M962 566L962 578M1039 625L1033 609M1111 619L1110 610M953 553L951 553M1051 663L1043 659M1395 618L1397 629M1070 435L1075 424M1063 526L1068 519M1410 627L1397 629M1241 543L1232 541M1065 423L1073 419M1001 650L1010 650M1159 482L1156 468M989 479L989 475M960 548L955 550M997 431L994 433M1193 549L1189 541M1227 553L1219 557M962 648L966 640M962 648L960 650M1039 578L1038 589M1051 663L1060 676M1297 584L1294 569M1002 417L1002 414M1002 411L1002 414M952 579L954 571M1060 354L1063 359M1257 553L1254 554M1139 426L1137 421M957 559L963 561M1294 624L1303 620M1340 585L1338 594M1113 461L1120 460M1223 631L1224 641M1083 464L1075 473M1002 404L1004 398M1223 622L1229 609M1052 381L1049 370M1425 638L1431 634M1060 676L1067 661M1164 688L1158 682M1410 627L1413 637M1022 385L1025 383M974 500L980 502M1134 695L1131 690M1172 697L1169 690M1134 403L1129 410M1228 649L1218 651M1014 417L1013 413M1018 656L1020 664M1212 686L1206 688M1007 489L1001 483M1423 590L1417 582M1084 478L1083 464M1235 602L1239 612M1212 552L1222 546M1176 669L1185 670M1421 626L1429 630M1012 564L1002 568M1084 617L1093 624M1200 506L1199 509M1338 594L1348 592M987 501L991 502M1075 444L1068 454M1025 432L1018 439M1095 559L1090 544M966 520L965 519M1176 669L1181 657M1063 445L1057 457M996 450L993 445M1036 501L1051 496M989 415L997 421M1217 609L1206 610M991 398L1002 404M1137 453L1145 446M1025 392L1028 394M1131 676L1139 672M1168 520L1167 512M1074 485L1066 498M1181 535L1164 534M1061 351L1071 347M1232 695L1229 681M1212 660L1201 665M1139 623L1129 627M1164 688L1162 690M1353 649L1350 639M996 489L997 485M1099 572L1109 580M1018 425L1016 429M1264 665L1259 672M1085 594L1091 607M1210 670L1195 672M1010 428L1011 424M1398 590L1408 597M966 640L974 647M1254 603L1267 612M997 494L993 499M1059 410L1067 415M1036 373L1041 371M933 600L943 602M1002 452L1003 448M1185 478L1182 480M1181 657L1171 655M1036 352L1042 347M977 505L974 500M1358 624L1365 619M1091 430L1095 414M1073 678L1077 683M1144 689L1138 690M978 612L974 619M990 456L994 453" stroke="#0e1f33" stroke-width="1.4" fill="none" clip-path="url(#c5)"/><path d="M949 559L967 513L985 462L1006 392L1020 368L1031 356L1042 347L1055 341L1065 339.5L1075 340L1084 345L1092 353L1115 390L1151 441L1182 480L1206 520L1242 550L1288 568L1333 574L1423 583L1470 590L1519 604" stroke="#0e1f33" stroke-width="1.8" fill="none" stroke-linejoin="round"/><clipPath id="bandclip"><polygon points="940.0,585.0 949.0,559.0 967.0,513.0 985.0,462.0 1006.0,392.0 1020.0,366.0 1031.0,356.0 1045.0,345.0 1036.0,362.0 1029.0,372.0 1018.0,400.0 1005.0,450.0 993.0,500.0 982.0,540.0 970.0,585.0"/></clipPath><polygon points="940.0,585.0 949.0,559.0 967.0,513.0 985.0,462.0 1006.0,392.0 1020.0,366.0 1031.0,356.0 1045.0,345.0 1036.0,362.0 1029.0,372.0 1018.0,400.0 1005.0,450.0 993.0,500.0 982.0,540.0 970.0,585.0" fill="#2c3745"/><path d="M954 560l-0.8 -4.6M1022 386l-0.4 -3.4M959 543l-2.0 -6.8M1008 392l-0.1 -3.4M1023 380l-0.2 -3.5M965 556l-3.1 -6.0M970 529l3.0 -7.2M987 457l2.7 -5.0M994 482l0.6 -5.6M982 492l2.9 -6.0M970 570l-1.6 -7.4M982 513l2.2 -5.8M990 487l2.6 -5.8M958 560l2.3 -4.4M947 582l-3.5 -6.2M1027 375l-1.7 -3.0M996 435l-2.2 -3.6M1040 354l0.3 -5.1M960 534l-1.5 -6.1M962 575l-0.1 -7.1M1015 387l0.2 -7.0M1018 394l0.7 -3.4M962 563l-1.1 -6.8M988 462l-1.5 -2.9M1036 353l-2.2 -4.8M1028 367l-1.9 -7.0M959 578l0.8 -3.3M1001 463l0.0 -3.6M971 567l2.5 -5.0M1011 384l-1.9 -5.0M991 454l2.1 -4.1M979 525l1.2 -7.4M983 496l1.6 -5.6M977 515l-0.7 -4.8M968 528l0.9 -6.4M999 421l-2.4 -5.0M996 440l3.3 -5.4M965 525l0.3 -5.6M964 546l-2.6 -4.2M985 464l-2.9 -5.7M1016 397l-1.6 -5.2M1002 460l2.0 -6.4M970 521l-4.2 -6.1M988 469l-0.3 -3.5M1034 361l2.5 -4.3M990 471l1.5 -6.1M1023 376l1.5 -5.7M974 544l2.6 -4.3M1010 431l-0.6 -6.5M991 483l3.6 -6.1M986 476l1.4 -3.5M1019 390l4.5 -6.3M966 544l2.5 -3.5M947 574l2.4 -3.7M974 547l2.6 -6.1M962 556l-3.8 -6.5M961 579l-0.1 -3.7M973 524l1.6 -5.0M1003 453l0.1 -4.6M997 434l-1.6 -3.3M998 437l-0.3 -4.4M963 563l3.6 -4.6M987 513l3.8 -6.1M975 528l-2.0 -5.7M961 581l1.9 -2.8M975 537l-0.6 -6.7M952 566l-0.8 -3.8M981 522l-0.5 -3.4M993 482l0.1 -3.6M952 574l0.3 -4.4M1018 388l-0.9 -4.3M982 500l0.5 -4.2M1005 402l-3.2 -6.8M990 491l3.6 -6.4M982 537l-1.8 -3.2M1006 410l1.0 -5.5M1013 419l-4.2 -6.4M980 493l0.4 -3.5M984 489l1.7 -3.1M975 522l-1.6 -3.3M948 577l-1.3 -7.3M948 573l-2.5 -6.2M994 453l2.0 -6.1M975 542l1.0 -4.7M976 553l-1.9 -3.4M968 578l-0.3 -4.1M966 548l-0.5 -3.4M975 495l-1.4 -6.3M971 516l0.8 -4.9M1002 454l-0.2 -3.7M969 541l0.5 -4.0M983 505l-1.0 -4.5M964 548l2.9 -4.8M983 486l1.0 -4.9M1005 421l2.5 -3.4M964 530l-0.8 -5.3M984 523l1.0 -6.6M975 562l-2.0 -5.4M1039 354l1.8 -6.3M975 504l-1.4 -4.7M976 536l3.1 -4.6M973 524l0.5 -3.3M944 577l-0.0 -3.0M962 543l-2.3 -6.7M950 568l-0.3 -4.2M1024 381l0.4 -3.6M970 576l0.9 -6.9M1029 365l1.4 -5.6M989 458l-2.2 -4.6M1022 386l-0.5 -5.9M957 539l-1.2 -6.6M983 524l0.8 -5.3M986 508l-1.3 -5.2M986 466l2.6 -4.4M1004 414l4.1 -6.3M980 523l-0.7 -3.8M1034 356l-0.0 -3.9M967 522l-3.3 -5.6M957 565l-0.1 -5.1M976 558l1.0 -4.7M965 535l-1.1 -3.7M983 515l-0.5 -4.6M1017 377l-0.3 -3.4M963 525l1.6 -5.7M984 506l1.8 -6.4M974 559l-0.5 -5.2M972 521l0.7 -5.0M995 443l-0.7 -6.7M1011 420l-3.0 -4.7M987 466l-0.3 -3.3M967 570l0.7 -3.2M1002 411l3.0 -6.0M975 533l-1.8 -7.6M953 558l2.7 -5.1M981 530l-0.1 -5.1M1019 374l0.4 -4.7M997 481l-0.6 -7.6M1008 397l-0.1 -6.9M962 549l-1.6 -4.6M995 435l0.3 -6.2M966 574l1.0 -3.7M969 511l1.4 -4.8M951 567l2.9 -5.1M976 509l1.1 -7.3M993 471l-0.4 -3.6M1005 438l1.5 -6.2M951 573l1.6 -5.3M967 564l2.1 -3.3M1021 372l-3.3 -6.0M981 523l3.5 -5.1M964 528l0.2 -5.0M1028 360l0.9 -4.3M1003 438l-1.7 -2.6M1007 437l-1.0 -3.9M1000 435l0.1 -7.6M963 526l1.0 -3.4M988 474l0.2 -5.4M973 505l2.2 -4.1M1014 386l-1.4 -6.4M961 551l-1.0 -4.0M958 564l-1.6 -5.4M950 562l1.8 -3.5M993 470l-2.2 -7.0M999 447l-1.2 -6.1M970 575l1.4 -5.6M1016 404l-1.9 -4.0M970 567l0.8 -3.4M983 473l-1.4 -5.0M993 459l-2.2 -6.2M998 459l3.5 -5.6M1020 386l0.1 -6.2M1013 393l0.4 -6.1M958 541l-2.5 -6.5M971 554l-1.4 -5.0M987 474l1.6 -2.6M1002 426l-2.3 -4.7M971 513l-1.5 -6.3M1017 388l1.6 -2.8M962 543l-1.5 -5.5M1013 388l-4.0 -5.9M959 580l-1.9 -3.2M1027 371l-2.3 -3.5M967 525l-1.8 -5.7M963 533l0.5 -6.2M965 521l0.2 -5.3M1018 371l-0.6 -6.4M980 540l2.2 -3.3M959 570l-2.0 -3.8M1019 388l1.8 -4.6M1001 422l0.0 -5.3M976 505l0.6 -3.2M984 478l0.4 -4.5M988 464l1.5 -3.4M982 471l-0.3 -3.2M1011 423l1.2 -4.1M1028 364l-1.0 -3.1M1008 395l3.1 -4.2M950 559l2.4 -6.4M988 503l2.8 -6.1M958 555l-1.8 -3.3M956 556l4.0 -5.1M994 434l-0.9 -4.7M953 563l-2.9 -6.1M960 555l0.1 -4.6M993 497l-2.0 -4.1M1007 395l-1.5 -6.6M991 507l-1.1 -4.2M973 535l-4.1 -5.9M976 557l3.4 -7.1M951 555l1.3 -4.2M964 573l-0.5 -3.5M1025 372l-1.8 -3.2M1025 364l-3.0 -5.1M957 554l-1.3 -3.2M1003 423l-1.7 -4.8M982 497l-2.8 -7.2M976 554l2.4 -5.8M1016 400l0.2 -7.4M995 455l-2.6 -5.4M990 460l-0.8 -7.5M972 547l1.8 -3.4M1004 441l2.4 -5.2M1009 434l0.2 -6.4M950 561l1.4 -3.3M1014 396l0.1 -6.9M988 496l1.6 -5.7M985 504l0.5 -3.4M982 528l-1.3 -4.9M971 533l-2.7 -4.1M1017 388l-0.2 -3.3M973 550l-0.1 -6.3M980 484l-1.6 -4.6M961 577l2.0 -2.9M971 519l-2.4 -6.8M1012 399l-2.7 -4.4M961 578l-1.1 -6.8M963 571l2.4 -6.5M1023 371l3.3 -6.1M959 544l1.3 -6.3M1013 413l2.5 -7.1M966 553l-1.7 -2.6M987 472l1.9 -2.6M1001 445l1.6 -4.7M1006 397l-0.1 -5.3M1003 449l-1.6 -5.2M1009 396l2.9 -6.2M974 550l-0.1 -5.3M1025 378l0.9 -3.3M1002 456l-2.1 -5.1M977 504l3.0 -5.9M958 568l-0.2 -4.5M968 572l-1.6 -7.6M1029 370l-1.4 -4.9M971 528l1.8 -3.9M969 521l-0.2 -4.9M982 494l1.6 -7.7M992 465l-1.8 -5.2M941 582l-1.3 -6.7M971 559l-0.4 -3.8M969 519l1.4 -5.8M973 512l-0.7 -3.3M959 540l2.9 -6.2M966 521l0.5 -6.9M946 581l-2.9 -6.0M975 530l-0.3 -7.6M966 569l-1.5 -2.7M994 452l-2.2 -4.5M1021 382l-0.7 -3.7M1025 366l2.9 -3.8M1002 418l0.4 -6.7M1011 414l2.2 -7.5M956 559l-1.9 -7.3M992 444l-1.0 -6.3M957 541l-3.9 -5.6M1017 403l0.7 -4.4M962 557l-1.0 -3.5M959 569l-0.9 -3.8M988 507l-4.1 -6.2M963 568l-0.7 -7.1M975 535l1.4 -7.3M1016 375l-1.3 -4.5M949 564l1.7 -5.6M955 552l2.0 -4.3M994 454l-0.7 -4.4M998 433l1.8 -4.3M963 575l-2.5 -6.5M964 555l-2.9 -6.0M981 534l0.1 -5.9M979 524l1.9 -3.4M956 541l0.0 -5.1M963 576l2.9 -4.8M1003 439l-2.4 -5.0M974 557l-0.5 -3.5M980 505l3.4 -6.3M1017 399l-1.8 -6.2M966 547l-0.5 -7.4M975 533l-3.0 -4.4M992 474l0.7 -3.3M963 540l-3.2 -7.3M1029 362l0.7 -3.0M1010 429l0.2 -6.4M979 548l-1.9 -2.9M987 459l-3.7 -5.8M967 559l0.7 -5.5M987 465l-2.0 -4.9M997 459l-1.0 -3.8M1007 413l0.3 -5.0M1026 369l-2.1 -3.9M1006 414l0.5 -4.4M1005 411l0.2 -3.9M955 565l3.0 -5.7M991 487l-4.1 -6.2M953 558l0.9 -5.4M979 543l-2.5 -5.0M958 553l-1.6 -6.1M974 542l-1.6 -4.6M956 570l-1.7 -3.8M1005 398l1.4 -3.2M1007 418l-0.6 -6.6M959 542l-1.6 -5.6M1009 419l3.2 -5.9M1003 421l-0.5 -4.1M972 542l1.9 -5.2M984 501l-1.4 -5.9M986 473l1.2 -3.4M1032 358l0.4 -6.4M1008 428l-2.4 -3.5M1000 430l-1.7 -4.7M963 526l-1.3 -3.5M1009 417l1.0 -5.2M989 465l-0.5 -5.2M953 569l-2.4 -6.1M1002 418l-1.0 -3.5M985 498l-3.4 -4.8M1018 387l-1.8 -4.4M994 447l2.9 -5.3M945 570l0.4 -6.6M963 560l-3.0 -5.7M1022 384l0.7 -5.0M1002 405l-2.9 -4.5M1012 420l-2.8 -3.9M957 542l2.1 -6.3M990 477l-1.7 -2.8M975 538l2.5 -3.2M1000 437l0.8 -4.9M1005 421l2.7 -7.5M964 565l-1.1 -3.3M1004 434l1.4 -5.7M1043 348l-2.1 -3.5M1010 408l-0.8 -5.7M996 439l-2.4 -4.2M941 583l-1.5 -6.4M1008 410l-1.7 -5.5M977 537l-0.4 -4.9M1007 400l2.8 -5.0M988 488l2.0 -5.5M999 469l-0.3 -6.9M986 475l-2.7 -4.0M1008 418l1.6 -3.8M981 485l-1.0 -5.0M985 465l2.9 -3.8M982 518l0.9 -6.6M1025 368l-1.5 -5.6M994 434l-0.7 -4.9M1006 422l-3.1 -5.4M994 476l-1.8 -2.8M964 565l2.2 -4.1M980 497l2.1 -4.8M970 521l-2.2 -6.2M969 577l-2.5 -7.0M994 494l0.5 -4.5M970 510l1.4 -3.3M973 518l-1.5 -3.9M994 483l-3.9 -6.7M1013 398l-1.4 -3.8M996 442l2.1 -7.1M992 476l2.9 -4.8M964 546l4.2 -6.1M970 536l1.6 -4.8M965 569l2.6 -6.4M970 532l-2.5 -4.0M961 541l0.7 -6.5M1021 375l-1.6 -3.1M993 495l1.2 -3.0M962 538l2.8 -3.9M1017 390l-1.3 -4.4M974 524l-1.5 -4.2M976 547l-1.4 -4.0M1043 348l0.7 -3.6M1008 435l-1.4 -3.2M965 569l-2.0 -7.5M982 524l-0.4 -7.9M1003 439l-1.4 -3.8M951 568l4.3 -5.7M1003 414l-2.3 -3.2M997 475l1.7 -7.1M963 528l-0.1 -3.4M974 563l1.7 -2.5M964 548l-3.3 -4.6M1001 416l-1.7 -4.4M962 577l0.1 -4.4M1003 451l-2.2 -5.2M976 524l2.4 -6.4M999 457l0.6 -7.9M997 466l-3.4 -5.8M1017 389l3.7 -6.0M950 579l-1.9 -6.3M1000 464l1.6 -4.2M985 506l0.3 -6.5M1007 397l-3.1 -6.6M996 452l-2.0 -6.8M995 458l-1.9 -6.2M987 478l-2.4 -7.3M963 534l-2.4 -4.1M950 569l2.2 -4.4M969 507l1.1 -5.5M962 566l-1.0 -3.0M970 524l3.5 -5.5M1005 439l4.3 -6.4M989 461l1.9 -4.7" stroke="#7d848e" stroke-width="0.9" fill="none" clip-path="url(#bandclip)"/><polygon points="405.0,348.0 492.0,385.0 521.5,433.5 516.0,434.5 502.0,531.0 503.0,538.0 460.0,524.0 405.0,509.0" fill="#656565"/><path d="M405 348L492 385L521.5 433.5M405 369L490 385M516 434.5L502 531M413 431L430 423L491 451M413 431L475 440L491 451M413 431L406 508M420 431L412 510M426 430L418 512M433 428L423 514M435 435L463 520M491 451L480 522M487 451L476 521" stroke="#0e1f33" stroke-width="1.35" fill="none" stroke-linejoin="round"/><polygon points="405.0,391.0 520.5,432.0 520.5,437.0 405.0,398.0" fill="#2a3442"/><path d="M405 394.5L520.5 434.5" stroke="#6a6a6a" stroke-width="0.8" fill="none" stroke-linejoin="round"/><polygon points="405.0,396.0 407.0,387.0 408.5,368.0 410.0,387.0 412.0,396.0 411.5,399.0 405.5,399.0" fill="#172233"/><polygon points="424.0,401.0 426.0,392.0 433.5,370.0 441.0,392.0 443.0,401.0 436.5,404.0 430.5,404.0" fill="#172233"/><polygon points="485.0,424.0 487.0,415.0 493.0,398.0 499.0,415.0 501.0,424.0 496.0,427.0 490.0,427.0" fill="#172233"/><polygon points="503.0,510.0 508.0,498.0 517.5,514.5 514.0,533.0 503.0,532.0" fill="#5f5f5f"/><path d="M503 510L508 498L517.5 514.5L514 535M506 514L517 516" stroke="#0e1f33" stroke-width="1.1" fill="none" stroke-linejoin="round"/><path d="M503,532 L644,544 L644,571 L628,568 Q605,538 576,545 Q552,549 540,556 L503,538 Z" fill="#1b1b1b"/><polygon points="664.0,508.0 710.0,477.0 738.0,517.0 733.0,520.0 732.0,582.0 650.0,580.0 655.0,512.0" fill="#636363"/><path d="M664 508L710 477L738 517M676 500L733 516M676 500L676 582M680 500L725 580M732 520L728 580" stroke="#0e1f33" stroke-width="1.6" fill="none" stroke-linejoin="round"/><polygon points="628.0,524.0 650.0,512.0 652.0,578.0 630.0,576.0" fill="#5b5b5b" stroke="#0e1f33" stroke-width="1.2" stroke-linejoin="round"/><polygon points="666.0,429.0 668.0,448.0 676.0,460.0 676.0,468.0 672.0,470.0 673.0,577.0 647.0,577.0 650.0,470.0 648.0,465.0 656.0,458.0 664.0,446.0" fill="#1c2838"/><path d="M653 472L652 577M657 472L656.5 577M661 472L661 577M665 472L665.5 577M669 472L670 577" stroke="#55606e" stroke-width="0.8" fill="none" stroke-linejoin="round"/><polygon points="645.0,492.0 679.0,491.0 678.0,501.0 646.0,502.0" fill="#1a2432"/><polygon points="648.0,458.0 678.0,458.0 677.0,470.0 649.0,470.0" fill="#1a2432"/><polygon points="523.0,569.0 753.0,583.0 775.0,638.0 769.0,641.0 764.0,752.0 687.0,766.0 686.0,774.0 656.0,785.0 619.0,793.0 440.0,819.0 446.0,767.0 455.0,722.0 454.0,706.0 509.0,685.0 513.0,685.0 509.0,644.0 508.0,644.0 517.0,614.0" fill="#3f3f3f"/><polygon points="458.0,722.0 501.0,719.0 501.0,761.0 455.0,767.0" fill="#a9a9a9"/><path d="M458 736L501 730M456 750L501 747M475 721L462 765M490 720L501 745" stroke="#0e1f33" stroke-width="1.2" fill="none" stroke-linejoin="round"/><path d="M523 569L517 614L509 644M753 583L775 638M509 644L600 638M600 637L690 636M705 640L775 638M509 648L600 642M705 644L769 642M558 638L629 590L677 637M566 638L629 596M707 637L729 606L742 637M580 573L583 618M580 573L520 625M646 578L653 622M690 585L720 640M720 585L700 612M753 583L740 640M454 706L509 685L690 693M454 706L690 700M454 722L690 713M446 767L686 735M440 819L686 774M686 735L686 774M619 770L656 764L656 785M620 777L656 771M620 784L656 778M619 793L619 770M700 645L764 752M740 645L735 755M600 712L650 752M540 715L548 745M520 690L515 720M640 645L690 700" stroke="#0e1f33" stroke-width="1.45" fill="none" stroke-linejoin="round"/><path d="M457 722L450 768M514 719L509 770M577 714L572 763M684 713L681 742" stroke="#0e1f33" stroke-width="3.2" fill="none" stroke-linejoin="round"/><polygon points="904.0,583.0 1063.0,585.0 1067.0,593.0 1080.0,600.0 1100.0,610.0 1100.0,720.0 1013.0,737.5 870.0,745.6 870.0,728.4 876.0,726.0 876.0,683.3 870.8,683.3 904.0,665.3 906.0,637.0 902.4,636.4" fill="#404040"/><polygon points="878.0,688.0 901.0,686.0 901.0,726.0 878.0,727.0" fill="#a4a4a4"/><path d="M880 700L901 697M880 712L901 714M885 690L880 726" stroke="#0e1f33" stroke-width="1.1" fill="none" stroke-linejoin="round"/><path d="M904 583L902.4 636.4M902.4 636.4L937.6 636.4M902 632.8L937.6 632.8M925 630L962.9 594.9L1000.8 630M930 630L962.9 600M986.4 632.8L1031.5 632.8M986.4 637L1031.5 637M937.6 630L986.4 630M1031.5 630L1066.7 593M904 620L935 590M935 583L937 632M990 585L1030 630M1000 610L1040 586M870.8 683.3L904 665.3L972 667L972 683.3L870.8 683.3M906 683L930 725M940 640L950 665M995 690L1000 735M970 690L990 735M870 728.4L1013.4 727.5L1013 737.5L870 745.6M965.6 728L965.6 740M967 732L990 731M967 736L990 735" stroke="#0e1f33" stroke-width="1.4" fill="none" stroke-linejoin="round"/><path d="M876 684L876 727M903 684L903 727M937 684L937 727M1010 685L1010 727" stroke="#0e1f33" stroke-width="3.0" fill="none" stroke-linejoin="round"/><polygon points="1210.5,581.0 1421.2,568.8 1430.6,633.7 1424.3,634.8 1440.1,757.0 1330.6,750.6 1331.0,752.0 1265.3,745.3 1169.5,734.8 1169.5,719.0 1170.5,679.0 1170.5,676.9 1209.5,663.2 1205.0,635.0 1196.9,634.8 1199.0,621.0" fill="#404040"/><polygon points="1172.0,686.0 1206.0,684.0 1206.0,720.0 1172.0,720.0" fill="#a6a6a6"/><path d="M1172 696L1206 692M1172 706L1206 708M1185 686L1178 720" stroke="#0e1f33" stroke-width="1.1" fill="none" stroke-linejoin="round"/><path d="M1210.5 581L1199 621L1196.9 634.8M1421.2 568.8L1430.6 633.7M1197 635L1232.7 633M1197 631L1232.7 629M1290.6 631.6L1350.6 628M1290.6 627.6L1350.6 624M1372.7 632L1430 633M1372.7 628L1430 629M1232.7 625L1290.6 624M1218 629.5L1259 590.5L1309.5 628.5M1225 629.5L1259 596M1339 628L1358 596.9L1383.3 628M1345 628L1358 603M1424.3 634.8L1440.1 757M1309.5 635L1355.9 750M1345.3 635L1393.8 755M1383.3 635L1440 757M1311.6 635L1323 686M1229.5 635L1252.7 663M1269.5 686L1305.3 730M1212 636L1215 663M1244.2 578L1237.9 605M1296.9 574L1294.8 630M1351.7 571L1351.7 600M1371.7 570L1370.6 615M1349.6 571L1296.9 612M1421 569L1372.7 617M1294.8 576L1269.5 598M1210 600L1240 581M1170.5 676.9L1209.5 663.2L1324.3 666.4L1322.2 686.4L1170.5 679M1209.5 663.2L1322.2 686.4M1169.5 719L1331.6 731.7L1331 752M1169.5 734.8L1265.3 745.3M1265.3 737L1265.3 745.3M1267 740L1300 742M1267 736L1300 738" stroke="#0e1f33" stroke-width="1.4" fill="none" stroke-linejoin="round"/><path d="M1171 679L1171 722M1184 680L1184 722M1198 681L1198 723M1233 682L1234 725M1321 686L1322 730" stroke="#0e1f33" stroke-width="3.0" fill="none" stroke-linejoin="round"/><clipPath id="fclip"><rect x="405" y="139" width="1114" height="822"/></clipPath><g clip-path="url(#fclip)"><polygon points="848.9,907.6 848.9,911.9 849.6,916.2 850.9,920.5 853.0,924.9 855.7,929.3 859.1,933.6 863.1,938.0 867.8,942.3 873.1,946.5 879.0,950.7 885.5,954.9 892.6,959.0 900.3,962.9 908.5,966.8 917.2,970.6 926.4,974.2 936.1,977.7 946.2,981.1 956.7,984.3 967.6,987.3 978.8,990.2 990.3,992.9 1002.2,995.4 1014.3,997.7 1026.5,999.8 1039.0,1001.7 1051.6,1003.4 1064.4,1004.9 1077.2,1006.1 1090.0,1007.2 1102.8,1008.0 1115.6,1008.6 1128.4,1008.9 1141.0,1009.0 1153.5,1008.9 1165.8,1008.5 1177.8,1008.0 1189.7,1007.2 1201.2,1006.1 1212.5,1004.8 1223.3,1003.4 1233.9,1001.7 1244.0,999.7 1253.6,997.6 1262.8,995.3 1271.5,992.8 1279.7,990.1 1287.4,987.2 1294.5,984.2 1301.0,981.0 1306.9,977.6 1312.2,974.1 1316.9,970.4 1320.9,966.7 1324.3,962.8 1327.0,958.8 1329.1,954.8 1330.4,950.6 1331.1,946.4 1325.2,833.9 1325.2,829.8 1324.6,825.6 1323.2,821.3 1321.2,817.1 1318.6,812.8 1315.3,808.6 1311.4,804.3 1306.8,800.1 1301.6,795.9 1295.8,791.8 1289.5,787.8 1282.6,783.8 1275.1,779.9 1267.1,776.2 1258.6,772.5 1249.6,769.0 1240.2,765.5 1230.3,762.3 1220.1,759.1 1209.5,756.2 1198.5,753.4 1187.2,750.7 1175.7,748.3 1163.9,746.0 1151.9,744.0 1139.7,742.1 1127.4,740.5 1115.0,739.0 1102.5,737.8 1090.0,736.8 1077.5,736.0 1065.0,735.4 1052.6,735.1 1040.2,735.0 1028.1,735.1 1016.1,735.4 1004.3,736.0 992.8,736.8 981.5,737.8 970.5,739.1 959.9,740.5 949.7,742.2 939.8,744.0 930.4,746.1 921.4,748.4 912.9,750.8 904.9,753.4 897.4,756.2 890.5,759.2 884.1,762.4 878.4,765.6 873.2,769.1 868.6,772.6 864.7,776.3 861.4,780.1 858.8,783.9 856.8,787.9 855.4,792.0 854.8,796.1" fill="#8f8f8f"/><polygon points="1274.6,810.6 1273.8,815.0 1271.7,819.3 1268.5,823.5 1264.1,827.5 1258.5,831.3 1251.9,835.0 1244.2,838.4 1235.5,841.5 1225.9,844.4 1215.3,847.0 1204.0,849.3 1191.8,851.3 1179.1,853.0 1165.7,854.3 1151.8,855.2 1137.5,855.8 1122.8,856.1 1107.9,856.0 1092.9,855.5 1077.8,854.7 1062.8,853.5 1047.9,851.9 1033.2,850.1 1018.9,847.9 1005.0,845.4 991.6,842.6 978.7,839.5 966.6,836.2 955.2,832.7 944.6,828.9 934.9,824.9 926.2,820.8 918.4,816.5 911.8,812.2 906.2,807.7 901.7,803.2 898.4,798.7 896.3,794.1 895.4,789.6 895.6,785.2 897.1,780.8 899.8,776.6 903.6,772.5 908.6,768.6 914.7,764.8 921.8,761.3 930.0,758.0 939.2,755.0 949.3,752.2 960.3,749.8 972.0,747.6 984.5,745.8 997.6,744.3 1011.2,743.2 1025.3,742.4 1039.8,742.0 1054.6,741.9 1069.6,742.2 1084.6,742.9 1099.7,743.9 1114.7,745.3 1129.5,747.0 1144.0,749.0 1158.1,751.3 1171.8,754.0 1184.9,756.9 1197.4,760.1 1209.2,763.5 1220.2,767.2 1230.3,771.1 1239.6,775.1 1247.8,779.3 1255.0,783.6 1261.2,788.0 1266.2,792.5 1270.1,797.1 1272.8,801.6 1274.3,806.1 1274.6,810.6" fill="#898989"/><clipPath id="innerclip"><polygon points="1274.6,810.6 1273.8,815.0 1271.7,819.3 1268.5,823.5 1264.1,827.5 1258.5,831.3 1251.9,835.0 1244.2,838.4 1235.5,841.5 1225.9,844.4 1215.3,847.0 1204.0,849.3 1191.8,851.3 1179.1,853.0 1165.7,854.3 1151.8,855.2 1137.5,855.8 1122.8,856.1 1107.9,856.0 1092.9,855.5 1077.8,854.7 1062.8,853.5 1047.9,851.9 1033.2,850.1 1018.9,847.9 1005.0,845.4 991.6,842.6 978.7,839.5 966.6,836.2 955.2,832.7 944.6,828.9 934.9,824.9 926.2,820.8 918.4,816.5 911.8,812.2 906.2,807.7 901.7,803.2 898.4,798.7 896.3,794.1 895.4,789.6 895.6,785.2 897.1,780.8 899.8,776.6 903.6,772.5 908.6,768.6 914.7,764.8 921.8,761.3 930.0,758.0 939.2,755.0 949.3,752.2 960.3,749.8 972.0,747.6 984.5,745.8 997.6,744.3 1011.2,743.2 1025.3,742.4 1039.8,742.0 1054.6,741.9 1069.6,742.2 1084.6,742.9 1099.7,743.9 1114.7,745.3 1129.5,747.0 1144.0,749.0 1158.1,751.3 1171.8,754.0 1184.9,756.9 1197.4,760.1 1209.2,763.5 1220.2,767.2 1230.3,771.1 1239.6,775.1 1247.8,779.3 1255.0,783.6 1261.2,788.0 1266.2,792.5 1270.1,797.1 1272.8,801.6 1274.3,806.1 1274.6,810.6"/></clipPath><path d="M1020.0 838.0L899.3 822.6M1020.3 836.9L900.9 816.8M1021.3 835.8L904.7 811.2M1022.9 834.7L910.8 805.8M1025.1 833.7L919.1 800.8M1028.0 832.7L929.5 796.2M1031.3 831.8L941.9 792.1M1035.2 830.9L956.0 788.6M1039.6 830.2L971.8 785.6M1044.3 829.5L989.0 783.2M1049.4 829.0L1007.4 781.4M1054.8 828.6L1026.7 780.3M1060.4 828.3L1046.8 779.9M1066.2 828.1L1067.4 780.2M1072.0 828.0L1088.2 781.1M1077.8 828.1L1109.0 782.7M1083.6 828.3L1129.5 785.0M1089.2 828.6L1149.4 787.8M1094.6 829.0L1168.5 791.3M1099.7 829.5L1186.5 795.2M1104.4 830.2L1203.3 799.7M1108.8 830.9L1218.6 804.6M1112.7 831.8L1232.2 809.9M1116.0 832.7L1243.9 815.5M1118.9 833.7L1253.7 821.3M1121.1 834.7L1261.3 827.2M1122.7 835.8L1266.7 833.3M1123.7 836.9L1269.8 839.4M1124.0 838.0L1270.7 845.4M1123.7 839.1L1269.1 851.2M1122.7 840.2L1265.3 856.8M1121.1 841.3L1259.2 862.2M1118.9 842.3L1250.9 867.2M1116.0 843.3L1240.5 871.8M1112.7 844.2L1228.1 875.9M1108.8 845.1L1214.0 879.4M1104.4 845.8L1198.2 882.4M1099.7 846.5L1181.0 884.8M1094.6 847.0L1162.6 886.6M1089.2 847.4L1143.3 887.7M1049.4 847.0L1001.5 876.7M1044.3 846.5L983.5 872.8M1039.6 845.8L966.7 868.3M1035.2 845.1L951.4 863.4M1031.3 844.2L937.8 858.1M1028.0 843.3L926.1 852.5M1025.1 842.3L916.3 846.7M1022.9 841.3L908.7 840.8M1021.3 840.2L903.3 834.7M1020.3 839.1L900.2 828.6M899.3 822.6L900.2 818.4L902.3 814.3L905.5 810.3L909.9 806.5L915.5 802.8L922.1 799.4L929.8 796.1L938.5 793.1L948.2 790.4L958.7 788.0L970.1 785.8L982.2 784.0L995.0 782.5L1008.3 781.3L1022.2 780.5L1036.5 780.0L1051.0 779.9L1065.8 780.1L1080.8 780.7L1095.7 781.6L1110.6 782.9L1125.3 784.4L1139.8 786.3L1153.9 788.6L1167.5 791.1L1180.6 793.9L1193.1 796.9L1204.9 800.2L1215.9 803.7L1226.1 807.4L1235.4 811.3L1243.6 815.3L1250.9 819.5L1257.1 823.7L1262.1 828.0L1266.0 832.4L1268.8 836.7L1270.3 841.1L1270.7 845.4" stroke="#0e1f33" stroke-width="1.15" fill="none" clip-path="url(#innerclip)"/><polygon points="896.5,782.2 899.5,776.9 904.3,771.8 910.9,767.0 919.1,762.5 928.9,758.4 940.3,754.7 953.0,751.3 967.1,748.5 982.2,746.1 998.4,744.3 1015.4,742.9 1033.1,742.1 1051.3,741.9 1069.8,742.2 1088.4,743.1 1107.0,744.5 1125.4,746.5 1143.5,748.9 1160.9,751.8 1177.6,755.2 1193.4,759.0 1208.2,763.2 1221.8,767.8 1234.0,772.6 1244.9,777.7 1254.1,783.0 1261.7,788.5 1267.6,794.1 1271.8,799.7 1274.1,805.3 1273.2,813.8 1270.3,812.8 1265.8,810.9 1259.6,808.6 1251.8,806.0 1242.4,803.3 1231.6,800.5 1219.4,797.7 1205.9,795.0 1191.3,792.4 1175.7,790.0 1159.3,787.7 1142.2,785.7 1124.5,783.9 1106.5,782.4 1088.2,781.1 1070.0,780.1 1051.9,779.5 1034.0,779.1 1016.7,779.0 1000.0,779.3 984.1,779.8 969.1,780.6 955.2,781.6 942.5,782.8 931.2,784.3 921.3,785.8 912.9,787.4 906.1,788.9 901.0,790.2 897.5,790.8" fill="#919191"/><path d="M896.5 782.2L897.5 790.8M896.5 782.2L901.0 790.2M899.5 776.9L901.0 790.2M899.5 776.9L906.1 788.9M904.3 771.8L906.1 788.9M904.3 771.8L912.9 787.4M910.9 767.0L912.9 787.4M910.9 767.0L921.3 785.8M919.1 762.5L921.3 785.8M919.1 762.5L931.2 784.3M928.9 758.4L931.2 784.3M928.9 758.4L942.5 782.8M940.3 754.7L942.5 782.8M940.3 754.7L955.2 781.6M953.0 751.3L955.2 781.6M953.0 751.3L969.1 780.6M967.1 748.5L969.1 780.6M967.1 748.5L984.1 779.8M982.2 746.1L984.1 779.8M982.2 746.1L1000.0 779.3M998.4 744.3L1000.0 779.3M998.4 744.3L1016.7 779.0M1015.4 742.9L1016.7 779.0M1015.4 742.9L1034.0 779.1M1033.1 742.1L1034.0 779.1M1033.1 742.1L1051.9 779.5M1051.3 741.9L1051.9 779.5M1051.3 741.9L1070.0 780.1M1069.8 742.2L1070.0 780.1M1069.8 742.2L1088.2 781.1M1088.4 743.1L1088.2 781.1M1088.4 743.1L1106.5 782.4M1107.0 744.5L1106.5 782.4M1107.0 744.5L1124.5 783.9M1125.4 746.5L1124.5 783.9M1125.4 746.5L1142.2 785.7M1143.5 748.9L1142.2 785.7M1143.5 748.9L1159.3 787.7M1160.9 751.8L1159.3 787.7M1160.9 751.8L1175.7 790.0M1177.6 755.2L1175.7 790.0M1177.6 755.2L1191.3 792.4M1193.4 759.0L1191.3 792.4M1193.4 759.0L1205.9 795.0M1208.2 763.2L1205.9 795.0M1208.2 763.2L1219.4 797.7M1221.8 767.8L1219.4 797.7M1221.8 767.8L1231.6 800.5M1234.0 772.6L1231.6 800.5M1234.0 772.6L1242.4 803.3M1244.9 777.7L1242.4 803.3M1244.9 777.7L1251.8 806.0M1254.1 783.0L1251.8 806.0M1254.1 783.0L1259.6 808.6M1261.7 788.5L1259.6 808.6M1261.7 788.5L1265.8 810.9M1267.6 794.1L1265.8 810.9M1267.6 794.1L1270.3 812.8M1271.8 799.7L1270.3 812.8M1271.8 799.7L1273.2 813.8M1274.1 805.3L1273.2 813.8M897.5 790.8L901.0 790.2L906.1 788.9L912.9 787.4L921.3 785.8L931.2 784.3L942.5 782.8L955.2 781.6L969.1 780.6L984.1 779.8L1000.0 779.3L1016.7 779.0L1034.0 779.1L1051.9 779.5L1070.0 780.1L1088.2 781.1L1106.5 782.4L1124.5 783.9L1142.2 785.7L1159.3 787.7L1175.7 790.0L1191.3 792.4L1205.9 795.0L1219.4 797.7L1231.6 800.5L1242.4 803.3L1251.8 806.0L1259.6 808.6L1265.8 810.9L1270.3 812.8L1273.2 813.8M854.7 797.3L863.3 819.8L890.0 841.9L932.5 861.8L987.5 878.1L1050.7 889.3L1117.0 894.6L1181.1 893.6L1238.0 886.4L1283.2 873.5L1313.0 856.0L1325.1 835.1M854.9 817.8L856.2 840.1L876.2 862.7L913.1 883.8L964.0 901.8L1025.0 915.2L1091.1 922.9L1157.2 924.4L1217.9 919.6L1268.4 908.7L1304.8 892.7L1324.1 872.8M851.6 855.3L860.4 878.1L887.3 900.5L930.4 920.7L986.2 937.1L1050.1 948.5L1117.3 953.9L1182.3 952.9L1239.9 945.6L1285.7 932.5L1315.9 914.7L1328.2 893.6M851.8 875.7L853.2 898.3L873.4 921.1L910.8 942.6L962.4 960.8L1024.2 974.3L1091.1 982.2L1158.0 983.7L1219.5 978.8L1270.7 967.8L1307.6 951.6L1327.1 931.4M848.6 913.3L857.4 936.4L884.7 959.0L928.4 979.5L984.8 996.2L1049.6 1007.7L1117.7 1013.2L1183.5 1012.2L1241.9 1004.7L1288.2 991.5L1318.8 973.5L1331.2 952.1M854.7 797.3L854.9 817.8M854.7 797.3L856.2 840.1M863.3 819.8L856.2 840.1M863.3 819.8L876.2 862.7M890.0 841.9L876.2 862.7M890.0 841.9L913.1 883.8M932.5 861.8L913.1 883.8M932.5 861.8L964.0 901.8M987.5 878.1L964.0 901.8M987.5 878.1L1025.0 915.2M1050.7 889.3L1025.0 915.2M1050.7 889.3L1091.1 922.9M1117.0 894.6L1091.1 922.9M1117.0 894.6L1157.2 924.4M1181.1 893.6L1157.2 924.4M1181.1 893.6L1217.9 919.6M1238.0 886.4L1217.9 919.6M1238.0 886.4L1268.4 908.7M1283.2 873.5L1268.4 908.7M1283.2 873.5L1304.8 892.7M1313.0 856.0L1304.8 892.7M1313.0 856.0L1324.1 872.8M1325.1 835.1L1324.1 872.8M854.9 817.8L851.6 855.3M854.9 817.8L860.4 878.1M856.2 840.1L860.4 878.1M856.2 840.1L887.3 900.5M876.2 862.7L887.3 900.5M876.2 862.7L930.4 920.7M913.1 883.8L930.4 920.7M913.1 883.8L986.2 937.1M964.0 901.8L986.2 937.1M964.0 901.8L1050.1 948.5M1025.0 915.2L1050.1 948.5M1025.0 915.2L1117.3 953.9M1091.1 922.9L1117.3 953.9M1091.1 922.9L1182.3 952.9M1157.2 924.4L1182.3 952.9M1157.2 924.4L1239.9 945.6M1217.9 919.6L1239.9 945.6M1217.9 919.6L1285.7 932.5M1268.4 908.7L1285.7 932.5M1268.4 908.7L1315.9 914.7M1304.8 892.7L1315.9 914.7M1304.8 892.7L1328.2 893.6M1324.1 872.8L1328.2 893.6M851.6 855.3L851.8 875.7M851.6 855.3L853.2 898.3M860.4 878.1L853.2 898.3M860.4 878.1L873.4 921.1M887.3 900.5L873.4 921.1M887.3 900.5L910.8 942.6M930.4 920.7L910.8 942.6M930.4 920.7L962.4 960.8M986.2 937.1L962.4 960.8M986.2 937.1L1024.2 974.3M1050.1 948.5L1024.2 974.3M1050.1 948.5L1091.1 982.2M1117.3 953.9L1091.1 982.2M1117.3 953.9L1158.0 983.7M1182.3 952.9L1158.0 983.7M1182.3 952.9L1219.5 978.8M1239.9 945.6L1219.5 978.8M1239.9 945.6L1270.7 967.8M1285.7 932.5L1270.7 967.8M1285.7 932.5L1307.6 951.6M1315.9 914.7L1307.6 951.6M1315.9 914.7L1327.1 931.4M1328.2 893.6L1327.1 931.4M851.8 875.7L848.6 913.3M851.8 875.7L857.4 936.4M853.2 898.3L857.4 936.4M853.2 898.3L884.7 959.0M873.4 921.1L884.7 959.0M873.4 921.1L928.4 979.5M910.8 942.6L928.4 979.5M910.8 942.6L984.8 996.2M962.4 960.8L984.8 996.2M962.4 960.8L1049.6 1007.7M1024.2 974.3L1049.6 1007.7M1024.2 974.3L1117.7 1013.2M1091.1 982.2L1117.7 1013.2M1091.1 982.2L1183.5 1012.2M1158.0 983.7L1183.5 1012.2M1158.0 983.7L1241.9 1004.7M1219.5 978.8L1241.9 1004.7M1219.5 978.8L1288.2 991.5M1270.7 967.8L1288.2 991.5M1270.7 967.8L1318.8 973.5M1307.6 951.6L1318.8 973.5M1307.6 951.6L1331.2 952.1M1327.1 931.4L1331.2 952.1M1325.2 833.9L1318.8 849.7L1302.4 863.9L1276.6 876.0L1242.8 885.4L1202.2 891.8L1156.7 894.8L1108.4 894.3L1059.2 890.3L1011.4 883.1L967.0 872.9L927.9 860.1L896.0 845.4L872.6 829.3L858.6 812.7L854.8 796.1L861.2 780.3L877.6 766.1L903.4 754.0L937.2 744.6L977.8 738.2L1023.3 735.2L1071.6 735.7L1120.8 739.7L1168.6 746.9L1213.0 757.1L1252.1 769.9L1284.0 784.6L1307.4 800.7L1321.4 817.3L1325.2 833.9M1273.4 816.1L1264.6 827.1L1248.0 836.8L1224.3 844.9L1194.4 850.9L1159.8 854.7L1122.0 856.1L1082.5 854.9L1043.1 851.4L1005.6 845.5L971.5 837.6L942.4 828.0L919.5 817.2L903.8 805.5L896.1 793.6L896.6 781.9L905.4 770.9L922.0 761.2L945.7 753.1L975.6 747.1L1010.2 743.3L1048.0 741.9L1087.5 743.1L1126.9 746.6L1164.4 752.5L1198.5 760.4L1227.6 770.0L1250.5 780.8L1266.2 792.5L1273.9 804.4L1273.4 816.1M1325.2 833.9L1273.4 816.1M1325.2 833.9L1264.6 827.1M1318.8 849.7L1264.6 827.1M1318.8 849.7L1248.0 836.8M1302.4 863.9L1248.0 836.8M1302.4 863.9L1224.3 844.9M1276.6 876.0L1224.3 844.9M1276.6 876.0L1194.4 850.9M1242.8 885.4L1194.4 850.9M1242.8 885.4L1159.8 854.7M1202.2 891.8L1159.8 854.7M1202.2 891.8L1122.0 856.1M1156.7 894.8L1122.0 856.1M1156.7 894.8L1082.5 854.9M1108.4 894.3L1082.5 854.9M1108.4 894.3L1043.1 851.4M1059.2 890.3L1043.1 851.4M1059.2 890.3L1005.6 845.5M1011.4 883.1L1005.6 845.5M1011.4 883.1L971.5 837.6M967.0 872.9L971.5 837.6M967.0 872.9L942.4 828.0M927.9 860.1L942.4 828.0M927.9 860.1L919.5 817.2M896.0 845.4L919.5 817.2M896.0 845.4L903.8 805.5M872.6 829.3L903.8 805.5M872.6 829.3L896.1 793.6M858.6 812.7L896.1 793.6M858.6 812.7L896.6 781.9M854.8 796.1L896.6 781.9M854.8 796.1L905.4 770.9M861.2 780.3L905.4 770.9M861.2 780.3L922.0 761.2M877.6 766.1L922.0 761.2M877.6 766.1L945.7 753.1M903.4 754.0L945.7 753.1M903.4 754.0L975.6 747.1M937.2 744.6L975.6 747.1M937.2 744.6L1010.2 743.3M977.8 738.2L1010.2 743.3M977.8 738.2L1048.0 741.9M1023.3 735.2L1048.0 741.9M1023.3 735.2L1087.5 743.1M1071.6 735.7L1087.5 743.1M1071.6 735.7L1126.9 746.6M1120.8 739.7L1126.9 746.6M1120.8 739.7L1164.4 752.5M1168.6 746.9L1164.4 752.5M1168.6 746.9L1198.5 760.4M1213.0 757.1L1198.5 760.4M1213.0 757.1L1227.6 770.0M1252.1 769.9L1227.6 770.0M1252.1 769.9L1250.5 780.8M1284.0 784.6L1250.5 780.8M1284.0 784.6L1266.2 792.5M1307.4 800.7L1266.2 792.5M1307.4 800.7L1273.9 804.4M1321.4 817.3L1273.9 804.4M1321.4 817.3L1273.4 816.1" stroke="#0e1f33" stroke-width="1.25" fill="none"/></g><polygon points="1038.0,712.0 1046.0,724.0 1051.0,736.0 1042.0,748.0 1032.0,758.0 1026.0,766.0 1023.0,776.0 1021.0,785.0 1019.0,792.0 1019.0,840.0 1019.0,840.0 1019.5,841.6 1021.0,843.1 1023.4,844.6 1026.7,846.1 1030.9,847.4 1035.8,848.5 1041.4,849.5 1047.6,850.4 1054.3,851.0 1061.2,851.4 1068.4,851.6 1075.6,851.6 1082.8,851.4 1089.7,851.0 1096.4,850.4 1102.6,849.5 1108.2,848.5 1113.1,847.4 1117.3,846.1 1120.6,844.6 1123.0,843.1 1124.5,841.6 1125.0,840.0 1125.0,792.0 1123.0,785.0 1121.0,776.0 1118.0,766.0 1112.0,758.0 1102.0,748.0 1093.0,736.0 1098.0,724.0 1106.0,712.0 1106.0,712.0 1105.7,711.0 1104.7,710.0 1103.2,709.0 1101.1,708.1 1098.4,707.3 1095.2,706.5 1091.6,705.9 1087.6,705.4 1083.4,705.0 1078.9,704.7 1074.3,704.5 1069.7,704.5 1065.1,704.7 1060.6,705.0 1056.4,705.4 1052.4,705.9 1048.8,706.5 1045.6,707.3 1042.9,708.1 1040.8,709.0 1039.3,710.0 1038.3,711.0 1038.0,712.0" fill="#8a8a8a"/><path d="M1038.0 712.0L1038.7 713.5L1040.6 714.9L1043.7 716.2L1048.0 717.3L1053.1 718.2L1059.0 718.9L1065.4 719.3L1072.0 719.5L1078.6 719.3L1085.0 718.9L1090.9 718.2L1096.0 717.3L1100.3 716.2L1103.4 714.9L1105.3 713.5L1106.0 712.0M1046.0 724.0L1046.5 725.1L1048.0 726.2L1050.4 727.2L1053.6 728.0L1057.6 728.8L1062.1 729.3L1066.9 729.6L1072.0 729.7L1077.1 729.6L1081.9 729.3L1086.4 728.8L1090.4 728.0L1093.6 727.2L1096.0 726.2L1097.5 725.1L1098.0 724.0M1051.0 736.0L1051.4 736.9L1052.6 737.8L1054.5 738.6L1057.2 739.3L1060.3 739.8L1064.0 740.3L1067.9 740.5L1072.0 740.6L1076.1 740.5L1080.0 740.3L1083.7 739.8L1086.8 739.3L1089.5 738.6L1091.4 737.8L1092.6 736.9L1093.0 736.0M1042.0 748.0L1042.6 749.3L1044.3 750.5L1047.1 751.7L1050.8 752.7L1055.3 753.5L1060.5 754.1L1066.1 754.5L1072.0 754.6L1077.9 754.5L1083.5 754.1L1088.7 753.5L1093.2 752.7L1096.9 751.7L1099.7 750.5L1101.4 749.3L1102.0 748.0M1032.0 758.0L1032.8 759.7L1035.0 761.4L1038.7 762.9L1043.7 764.2L1049.8 765.3L1056.7 766.1L1064.2 766.6L1072.0 766.8L1079.8 766.6L1087.3 766.1L1094.2 765.3L1100.3 764.2L1105.3 762.9L1109.0 761.4L1111.2 759.7L1112.0 758.0M1026.0 766.0L1026.9 768.0L1029.5 769.9L1033.8 771.6L1039.5 773.2L1046.4 774.4L1054.4 775.3L1063.0 775.9L1072.0 776.1L1081.0 775.9L1089.6 775.3L1097.6 774.4L1104.5 773.2L1110.2 771.6L1114.5 769.9L1117.1 768.0L1118.0 766.0M1023.0 776.0L1023.9 778.1L1026.7 780.1L1031.3 782.0L1037.4 783.6L1044.8 785.0L1053.2 786.0L1062.4 786.6L1072.0 786.8L1081.6 786.6L1090.8 786.0L1099.2 785.0L1106.6 783.6L1112.7 782.0L1117.3 780.1L1120.1 778.1L1121.0 776.0M1021.0 785.0L1022.0 787.2L1024.9 789.3L1029.6 791.2L1035.9 792.9L1043.7 794.3L1052.5 795.4L1062.1 796.0L1072.0 796.2L1081.9 796.0L1091.5 795.4L1100.3 794.3L1108.1 792.9L1114.4 791.2L1119.1 789.3L1122.0 787.2L1123.0 785.0M1019.0 792.0L1020.0 794.3L1023.0 796.5L1027.9 798.5L1034.5 800.2L1042.6 801.7L1051.7 802.8L1061.7 803.4L1072.0 803.7L1082.3 803.4L1092.3 802.8L1101.4 801.7L1109.5 800.2L1116.1 798.5L1121.0 796.5L1124.0 794.3L1125.0 792.0M1019.0 840.0L1020.0 842.3L1023.0 844.5L1027.9 846.5L1034.5 848.2L1042.6 849.7L1051.7 850.8L1061.7 851.4L1072.0 851.7L1082.3 851.4L1092.3 850.8L1101.4 849.7L1109.5 848.2L1116.1 846.5L1121.0 844.5L1124.0 842.3L1125.0 840.0M1038.0 712.0L1046.0 724.0M1038.0 712.0L1046.5 725.1M1038.7 713.5L1046.5 725.1M1038.7 713.5L1048.0 726.2M1040.6 714.9L1048.0 726.2M1040.6 714.9L1050.4 727.2M1043.7 716.2L1050.4 727.2M1043.7 716.2L1053.6 728.0M1048.0 717.3L1053.6 728.0M1048.0 717.3L1057.6 728.8M1053.1 718.2L1057.6 728.8M1053.1 718.2L1062.1 729.3M1059.0 718.9L1062.1 729.3M1059.0 718.9L1066.9 729.6M1065.4 719.3L1066.9 729.6M1065.4 719.3L1072.0 729.7M1072.0 719.5L1072.0 729.7M1072.0 719.5L1077.1 729.6M1078.6 719.3L1077.1 729.6M1078.6 719.3L1081.9 729.3M1085.0 718.9L1081.9 729.3M1085.0 718.9L1086.4 728.8M1090.9 718.2L1086.4 728.8M1090.9 718.2L1090.4 728.0M1096.0 717.3L1090.4 728.0M1096.0 717.3L1093.6 727.2M1100.3 716.2L1093.6 727.2M1100.3 716.2L1096.0 726.2M1103.4 714.9L1096.0 726.2M1103.4 714.9L1097.5 725.1M1105.3 713.5L1097.5 725.1M1105.3 713.5L1098.0 724.0M1106.0 712.0L1098.0 724.0M1046.0 724.0L1051.0 736.0M1046.0 724.0L1051.4 736.9M1046.5 725.1L1051.4 736.9M1046.5 725.1L1052.6 737.8M1048.0 726.2L1052.6 737.8M1048.0 726.2L1054.5 738.6M1050.4 727.2L1054.5 738.6M1050.4 727.2L1057.2 739.3M1053.6 728.0L1057.2 739.3M1053.6 728.0L1060.3 739.8M1057.6 728.8L1060.3 739.8M1057.6 728.8L1064.0 740.3M1062.1 729.3L1064.0 740.3M1062.1 729.3L1067.9 740.5M1066.9 729.6L1067.9 740.5M1066.9 729.6L1072.0 740.6M1072.0 729.7L1072.0 740.6M1072.0 729.7L1076.1 740.5M1077.1 729.6L1076.1 740.5M1077.1 729.6L1080.0 740.3M1081.9 729.3L1080.0 740.3M1081.9 729.3L1083.7 739.8M1086.4 728.8L1083.7 739.8M1086.4 728.8L1086.8 739.3M1090.4 728.0L1086.8 739.3M1090.4 728.0L1089.5 738.6M1093.6 727.2L1089.5 738.6M1093.6 727.2L1091.4 737.8M1096.0 726.2L1091.4 737.8M1096.0 726.2L1092.6 736.9M1097.5 725.1L1092.6 736.9M1097.5 725.1L1093.0 736.0M1098.0 724.0L1093.0 736.0M1051.0 736.0L1042.0 748.0M1051.0 736.0L1042.6 749.3M1051.4 736.9L1042.6 749.3M1051.4 736.9L1044.3 750.5M1052.6 737.8L1044.3 750.5M1052.6 737.8L1047.1 751.7M1054.5 738.6L1047.1 751.7M1054.5 738.6L1050.8 752.7M1057.2 739.3L1050.8 752.7M1057.2 739.3L1055.3 753.5M1060.3 739.8L1055.3 753.5M1060.3 739.8L1060.5 754.1M1064.0 740.3L1060.5 754.1M1064.0 740.3L1066.1 754.5M1067.9 740.5L1066.1 754.5M1067.9 740.5L1072.0 754.6M1072.0 740.6L1072.0 754.6M1072.0 740.6L1077.9 754.5M1076.1 740.5L1077.9 754.5M1076.1 740.5L1083.5 754.1M1080.0 740.3L1083.5 754.1M1080.0 740.3L1088.7 753.5M1083.7 739.8L1088.7 753.5M1083.7 739.8L1093.2 752.7M1086.8 739.3L1093.2 752.7M1086.8 739.3L1096.9 751.7M1089.5 738.6L1096.9 751.7M1089.5 738.6L1099.7 750.5M1091.4 737.8L1099.7 750.5M1091.4 737.8L1101.4 749.3M1092.6 736.9L1101.4 749.3M1092.6 736.9L1102.0 748.0M1093.0 736.0L1102.0 748.0M1042.0 748.0L1032.0 758.0M1042.0 748.0L1032.8 759.7M1042.6 749.3L1032.8 759.7M1042.6 749.3L1035.0 761.4M1044.3 750.5L1035.0 761.4M1044.3 750.5L1038.7 762.9M1047.1 751.7L1038.7 762.9M1047.1 751.7L1043.7 764.2M1050.8 752.7L1043.7 764.2M1050.8 752.7L1049.8 765.3M1055.3 753.5L1049.8 765.3M1055.3 753.5L1056.7 766.1M1060.5 754.1L1056.7 766.1M1060.5 754.1L1064.2 766.6M1066.1 754.5L1064.2 766.6M1066.1 754.5L1072.0 766.8M1072.0 754.6L1072.0 766.8M1072.0 754.6L1079.8 766.6M1077.9 754.5L1079.8 766.6M1077.9 754.5L1087.3 766.1M1083.5 754.1L1087.3 766.1M1083.5 754.1L1094.2 765.3M1088.7 753.5L1094.2 765.3M1088.7 753.5L1100.3 764.2M1093.2 752.7L1100.3 764.2M1093.2 752.7L1105.3 762.9M1096.9 751.7L1105.3 762.9M1096.9 751.7L1109.0 761.4M1099.7 750.5L1109.0 761.4M1099.7 750.5L1111.2 759.7M1101.4 749.3L1111.2 759.7M1101.4 749.3L1112.0 758.0M1102.0 748.0L1112.0 758.0M1032.0 758.0L1026.0 766.0M1032.0 758.0L1026.9 768.0M1032.8 759.7L1026.9 768.0M1032.8 759.7L1029.5 769.9M1035.0 761.4L1029.5 769.9M1035.0 761.4L1033.8 771.6M1038.7 762.9L1033.8 771.6M1038.7 762.9L1039.5 773.2M1043.7 764.2L1039.5 773.2M1043.7 764.2L1046.4 774.4M1049.8 765.3L1046.4 774.4M1049.8 765.3L1054.4 775.3M1056.7 766.1L1054.4 775.3M1056.7 766.1L1063.0 775.9M1064.2 766.6L1063.0 775.9M1064.2 766.6L1072.0 776.1M1072.0 766.8L1072.0 776.1M1072.0 766.8L1081.0 775.9M1079.8 766.6L1081.0 775.9M1079.8 766.6L1089.6 775.3M1087.3 766.1L1089.6 775.3M1087.3 766.1L1097.6 774.4M1094.2 765.3L1097.6 774.4M1094.2 765.3L1104.5 773.2M1100.3 764.2L1104.5 773.2M1100.3 764.2L1110.2 771.6M1105.3 762.9L1110.2 771.6M1105.3 762.9L1114.5 769.9M1109.0 761.4L1114.5 769.9M1109.0 761.4L1117.1 768.0M1111.2 759.7L1117.1 768.0M1111.2 759.7L1118.0 766.0M1112.0 758.0L1118.0 766.0M1026.0 766.0L1023.0 776.0M1026.0 766.0L1023.9 778.1M1026.9 768.0L1023.9 778.1M1026.9 768.0L1026.7 780.1M1029.5 769.9L1026.7 780.1M1029.5 769.9L1031.3 782.0M1033.8 771.6L1031.3 782.0M1033.8 771.6L1037.4 783.6M1039.5 773.2L1037.4 783.6M1039.5 773.2L1044.8 785.0M1046.4 774.4L1044.8 785.0M1046.4 774.4L1053.2 786.0M1054.4 775.3L1053.2 786.0M1054.4 775.3L1062.4 786.6M1063.0 775.9L1062.4 786.6M1063.0 775.9L1072.0 786.8M1072.0 776.1L1072.0 786.8M1072.0 776.1L1081.6 786.6M1081.0 775.9L1081.6 786.6M1081.0 775.9L1090.8 786.0M1089.6 775.3L1090.8 786.0M1089.6 775.3L1099.2 785.0M1097.6 774.4L1099.2 785.0M1097.6 774.4L1106.6 783.6M1104.5 773.2L1106.6 783.6M1104.5 773.2L1112.7 782.0M1110.2 771.6L1112.7 782.0M1110.2 771.6L1117.3 780.1M1114.5 769.9L1117.3 780.1M1114.5 769.9L1120.1 778.1M1117.1 768.0L1120.1 778.1M1117.1 768.0L1121.0 776.0M1118.0 766.0L1121.0 776.0M1023.0 776.0L1021.0 785.0M1023.0 776.0L1022.0 787.2M1023.9 778.1L1022.0 787.2M1023.9 778.1L1024.9 789.3M1026.7 780.1L1024.9 789.3M1026.7 780.1L1029.6 791.2M1031.3 782.0L1029.6 791.2M1031.3 782.0L1035.9 792.9M1037.4 783.6L1035.9 792.9M1037.4 783.6L1043.7 794.3M1044.8 785.0L1043.7 794.3M1044.8 785.0L1052.5 795.4M1053.2 786.0L1052.5 795.4M1053.2 786.0L1062.1 796.0M1062.4 786.6L1062.1 796.0M1062.4 786.6L1072.0 796.2M1072.0 786.8L1072.0 796.2M1072.0 786.8L1081.9 796.0M1081.6 786.6L1081.9 796.0M1081.6 786.6L1091.5 795.4M1090.8 786.0L1091.5 795.4M1090.8 786.0L1100.3 794.3M1099.2 785.0L1100.3 794.3M1099.2 785.0L1108.1 792.9M1106.6 783.6L1108.1 792.9M1106.6 783.6L1114.4 791.2M1112.7 782.0L1114.4 791.2M1112.7 782.0L1119.1 789.3M1117.3 780.1L1119.1 789.3M1117.3 780.1L1122.0 787.2M1120.1 778.1L1122.0 787.2M1120.1 778.1L1123.0 785.0M1121.0 776.0L1123.0 785.0M1021.0 785.0L1019.0 792.0M1021.0 785.0L1020.0 794.3M1022.0 787.2L1020.0 794.3M1022.0 787.2L1023.0 796.5M1024.9 789.3L1023.0 796.5M1024.9 789.3L1027.9 798.5M1029.6 791.2L1027.9 798.5M1029.6 791.2L1034.5 800.2M1035.9 792.9L1034.5 800.2M1035.9 792.9L1042.6 801.7M1043.7 794.3L1042.6 801.7M1043.7 794.3L1051.7 802.8M1052.5 795.4L1051.7 802.8M1052.5 795.4L1061.7 803.4M1062.1 796.0L1061.7 803.4M1062.1 796.0L1072.0 803.7M1072.0 796.2L1072.0 803.7M1072.0 796.2L1082.3 803.4M1081.9 796.0L1082.3 803.4M1081.9 796.0L1092.3 802.8M1091.5 795.4L1092.3 802.8M1091.5 795.4L1101.4 801.7M1100.3 794.3L1101.4 801.7M1100.3 794.3L1109.5 800.2M1108.1 792.9L1109.5 800.2M1108.1 792.9L1116.1 798.5M1114.4 791.2L1116.1 798.5M1114.4 791.2L1121.0 796.5M1119.1 789.3L1121.0 796.5M1119.1 789.3L1124.0 794.3M1122.0 787.2L1124.0 794.3M1122.0 787.2L1125.0 792.0M1123.0 785.0L1125.0 792.0M1019.0 792.0L1019.0 840.0M1019.0 792.0L1020.0 842.3M1020.0 794.3L1020.0 842.3M1020.0 794.3L1023.0 844.5M1023.0 796.5L1023.0 844.5M1023.0 796.5L1027.9 846.5M1027.9 798.5L1027.9 846.5M1027.9 798.5L1034.5 848.2M1034.5 800.2L1034.5 848.2M1034.5 800.2L1042.6 849.7M1042.6 801.7L1042.6 849.7M1042.6 801.7L1051.7 850.8M1051.7 802.8L1051.7 850.8M1051.7 802.8L1061.7 851.4M1061.7 803.4L1061.7 851.4M1061.7 803.4L1072.0 851.7M1072.0 803.7L1072.0 851.7M1072.0 803.7L1082.3 851.4M1082.3 803.4L1082.3 851.4M1082.3 803.4L1092.3 850.8M1092.3 802.8L1092.3 850.8M1092.3 802.8L1101.4 849.7M1101.4 801.7L1101.4 849.7M1101.4 801.7L1109.5 848.2M1109.5 800.2L1109.5 848.2M1109.5 800.2L1116.1 846.5M1116.1 798.5L1116.1 846.5M1116.1 798.5L1121.0 844.5M1121.0 796.5L1121.0 844.5M1121.0 796.5L1124.0 842.3M1124.0 794.3L1124.0 842.3M1124.0 794.3L1125.0 840.0M1125.0 792.0L1125.0 840.0M1106.0 712.0L1105.7 711.0L1104.7 710.0L1103.2 709.0L1101.1 708.1L1098.4 707.3L1095.2 706.5L1091.6 705.9L1087.6 705.4L1083.4 705.0L1078.9 704.7L1074.3 704.5L1069.7 704.5L1065.1 704.7L1060.6 705.0L1056.4 705.4L1052.4 705.9L1048.8 706.5L1045.6 707.3L1042.9 708.1L1040.8 709.0L1039.3 710.0L1038.3 711.0L1038.0 712.0M1103.6 713.5L1103.3 712.6L1102.4 711.6L1101.0 710.7L1099.0 709.9L1096.5 709.1L1093.6 708.4L1090.2 707.8L1086.5 707.3L1082.6 706.9L1078.4 706.7L1074.2 706.6L1069.8 706.6L1065.6 706.7L1061.4 706.9L1057.5 707.3L1053.8 707.8L1050.4 708.4L1047.5 709.1L1045.0 709.9L1043.0 710.7L1041.6 711.6L1040.7 712.6L1040.4 713.5" stroke="#0e1f33" stroke-width="1.0" fill="none"/><polygon points="970.0,662.0 972.0,672.0 977.0,688.0 988.0,702.0 1008.0,709.0 1034.0,712.0 1034.0,712.0 1034.3,712.4 1035.3,712.7 1037.0,713.1 1039.2,713.4 1042.1,713.7 1045.4,714.0 1049.2,714.2 1053.4,714.4 1057.9,714.5 1062.7,714.6 1067.5,714.7 1072.5,714.7 1077.3,714.6 1082.1,714.5 1086.6,714.4 1090.8,714.2 1094.6,714.0 1097.9,713.7 1100.8,713.4 1103.0,713.1 1104.7,712.7 1105.7,712.4 1106.0,712.0 1132.0,709.0 1152.0,702.0 1163.0,688.0 1168.0,672.0 1170.0,662.0 1170.0,662.0 1169.1,661.0 1166.3,660.0 1161.7,659.0 1155.4,658.1 1147.6,657.3 1138.3,656.5 1127.7,655.9 1116.0,655.3 1103.5,654.9 1090.3,654.7 1076.8,654.5 1063.2,654.5 1049.7,654.7 1036.5,654.9 1024.0,655.3 1012.3,655.9 1001.7,656.5 992.4,657.3 984.6,658.1 978.3,659.0 973.7,660.0 970.9,661.0 970.0,662.0" fill="#979797"/><path d="M970.0 662.0L971.5 663.3L976.0 664.6L983.4 665.8L993.4 666.8L1005.7 667.7L1020.0 668.5L1035.8 669.0L1052.6 669.4L1070.0 669.5L1087.4 669.4L1104.2 669.0L1120.0 668.5L1134.3 667.7L1146.6 666.8L1156.6 665.8L1164.0 664.6L1168.5 663.3L1170.0 662.0M972.0 672.0L973.5 673.3L977.9 674.5L985.1 675.7L994.9 676.7L1007.0 677.6L1021.0 678.4L1036.5 678.9L1053.0 679.2L1070.0 679.4L1087.0 679.2L1103.5 678.9L1119.0 678.4L1133.0 677.6L1145.1 676.7L1154.9 675.7L1162.1 674.5L1166.5 673.3L1168.0 672.0M977.0 688.0L978.4 689.2L982.6 690.4L989.5 691.5L998.8 692.5L1010.2 693.3L1023.5 694.0L1038.2 694.6L1053.9 694.9L1070.0 695.0L1086.1 694.9L1101.8 694.6L1116.5 694.0L1129.8 693.3L1141.2 692.5L1150.5 691.5L1157.4 690.4L1161.6 689.2L1163.0 688.0M988.0 702.0L989.2 703.1L992.9 704.1L999.0 705.1L1007.2 706.0L1017.3 706.7L1029.0 707.3L1042.0 707.8L1055.8 708.1L1070.0 708.1L1084.2 708.1L1098.0 707.8L1111.0 707.3L1122.7 706.7L1132.8 706.0L1141.0 705.1L1147.1 704.1L1150.8 703.1L1152.0 702.0M1008.0 709.0L1008.9 709.8L1011.7 710.6L1016.3 711.3L1022.5 712.0L1030.1 712.6L1039.0 713.0L1048.8 713.4L1059.2 713.6L1070.0 713.6L1080.8 713.6L1091.2 713.4L1101.0 713.0L1109.9 712.6L1117.5 712.0L1123.7 711.3L1128.3 710.6L1131.1 709.8L1132.0 709.0M1034.0 712.0L1034.5 712.5L1036.2 712.9L1038.8 713.4L1042.4 713.7L1046.9 714.1L1052.0 714.3L1057.7 714.5L1063.7 714.7L1070.0 714.7L1076.3 714.7L1082.3 714.5L1088.0 714.3L1093.1 714.1L1097.6 713.7L1101.2 713.4L1103.8 712.9L1105.5 712.5L1106.0 712.0M970.0 662.0L972.0 672.0M970.0 662.0L973.5 673.3M971.5 663.3L973.5 673.3M971.5 663.3L977.9 674.5M976.0 664.6L977.9 674.5M976.0 664.6L985.1 675.7M983.4 665.8L985.1 675.7M983.4 665.8L994.9 676.7M993.4 666.8L994.9 676.7M993.4 666.8L1007.0 677.6M1005.7 667.7L1007.0 677.6M1005.7 667.7L1021.0 678.4M1020.0 668.5L1021.0 678.4M1020.0 668.5L1036.5 678.9M1035.8 669.0L1036.5 678.9M1035.8 669.0L1053.0 679.2M1052.6 669.4L1053.0 679.2M1052.6 669.4L1070.0 679.4M1070.0 669.5L1070.0 679.4M1070.0 669.5L1087.0 679.2M1087.4 669.4L1087.0 679.2M1087.4 669.4L1103.5 678.9M1104.2 669.0L1103.5 678.9M1104.2 669.0L1119.0 678.4M1120.0 668.5L1119.0 678.4M1120.0 668.5L1133.0 677.6M1134.3 667.7L1133.0 677.6M1134.3 667.7L1145.1 676.7M1146.6 666.8L1145.1 676.7M1146.6 666.8L1154.9 675.7M1156.6 665.8L1154.9 675.7M1156.6 665.8L1162.1 674.5M1164.0 664.6L1162.1 674.5M1164.0 664.6L1166.5 673.3M1168.5 663.3L1166.5 673.3M1168.5 663.3L1168.0 672.0M1170.0 662.0L1168.0 672.0M972.0 672.0L977.0 688.0M972.0 672.0L978.4 689.2M973.5 673.3L978.4 689.2M973.5 673.3L982.6 690.4M977.9 674.5L982.6 690.4M977.9 674.5L989.5 691.5M985.1 675.7L989.5 691.5M985.1 675.7L998.8 692.5M994.9 676.7L998.8 692.5M994.9 676.7L1010.2 693.3M1007.0 677.6L1010.2 693.3M1007.0 677.6L1023.5 694.0M1021.0 678.4L1023.5 694.0M1021.0 678.4L1038.2 694.6M1036.5 678.9L1038.2 694.6M1036.5 678.9L1053.9 694.9M1053.0 679.2L1053.9 694.9M1053.0 679.2L1070.0 695.0M1070.0 679.4L1070.0 695.0M1070.0 679.4L1086.1 694.9M1087.0 679.2L1086.1 694.9M1087.0 679.2L1101.8 694.6M1103.5 678.9L1101.8 694.6M1103.5 678.9L1116.5 694.0M1119.0 678.4L1116.5 694.0M1119.0 678.4L1129.8 693.3M1133.0 677.6L1129.8 693.3M1133.0 677.6L1141.2 692.5M1145.1 676.7L1141.2 692.5M1145.1 676.7L1150.5 691.5M1154.9 675.7L1150.5 691.5M1154.9 675.7L1157.4 690.4M1162.1 674.5L1157.4 690.4M1162.1 674.5L1161.6 689.2M1166.5 673.3L1161.6 689.2M1166.5 673.3L1163.0 688.0M1168.0 672.0L1163.0 688.0M977.0 688.0L988.0 702.0M977.0 688.0L989.2 703.1M978.4 689.2L989.2 703.1M978.4 689.2L992.9 704.1M982.6 690.4L992.9 704.1M982.6 690.4L999.0 705.1M989.5 691.5L999.0 705.1M989.5 691.5L1007.2 706.0M998.8 692.5L1007.2 706.0M998.8 692.5L1017.3 706.7M1010.2 693.3L1017.3 706.7M1010.2 693.3L1029.0 707.3M1023.5 694.0L1029.0 707.3M1023.5 694.0L1042.0 707.8M1038.2 694.6L1042.0 707.8M1038.2 694.6L1055.8 708.1M1053.9 694.9L1055.8 708.1M1053.9 694.9L1070.0 708.1M1070.0 695.0L1070.0 708.1M1070.0 695.0L1084.2 708.1M1086.1 694.9L1084.2 708.1M1086.1 694.9L1098.0 707.8M1101.8 694.6L1098.0 707.8M1101.8 694.6L1111.0 707.3M1116.5 694.0L1111.0 707.3M1116.5 694.0L1122.7 706.7M1129.8 693.3L1122.7 706.7M1129.8 693.3L1132.8 706.0M1141.2 692.5L1132.8 706.0M1141.2 692.5L1141.0 705.1M1150.5 691.5L1141.0 705.1M1150.5 691.5L1147.1 704.1M1157.4 690.4L1147.1 704.1M1157.4 690.4L1150.8 703.1M1161.6 689.2L1150.8 703.1M1161.6 689.2L1152.0 702.0M1163.0 688.0L1152.0 702.0M988.0 702.0L1008.0 709.0M988.0 702.0L1008.9 709.8M989.2 703.1L1008.9 709.8M989.2 703.1L1011.7 710.6M992.9 704.1L1011.7 710.6M992.9 704.1L1016.3 711.3M999.0 705.1L1016.3 711.3M999.0 705.1L1022.5 712.0M1007.2 706.0L1022.5 712.0M1007.2 706.0L1030.1 712.6M1017.3 706.7L1030.1 712.6M1017.3 706.7L1039.0 713.0M1029.0 707.3L1039.0 713.0M1029.0 707.3L1048.8 713.4M1042.0 707.8L1048.8 713.4M1042.0 707.8L1059.2 713.6M1055.8 708.1L1059.2 713.6M1055.8 708.1L1070.0 713.6M1070.0 708.1L1070.0 713.6M1070.0 708.1L1080.8 713.6M1084.2 708.1L1080.8 713.6M1084.2 708.1L1091.2 713.4M1098.0 707.8L1091.2 713.4M1098.0 707.8L1101.0 713.0M1111.0 707.3L1101.0 713.0M1111.0 707.3L1109.9 712.6M1122.7 706.7L1109.9 712.6M1122.7 706.7L1117.5 712.0M1132.8 706.0L1117.5 712.0M1132.8 706.0L1123.7 711.3M1141.0 705.1L1123.7 711.3M1141.0 705.1L1128.3 710.6M1147.1 704.1L1128.3 710.6M1147.1 704.1L1131.1 709.8M1150.8 703.1L1131.1 709.8M1150.8 703.1L1132.0 709.0M1152.0 702.0L1132.0 709.0M1008.0 709.0L1034.0 712.0M1008.0 709.0L1034.5 712.5M1008.9 709.8L1034.5 712.5M1008.9 709.8L1036.2 712.9M1011.7 710.6L1036.2 712.9M1011.7 710.6L1038.8 713.4M1016.3 711.3L1038.8 713.4M1016.3 711.3L1042.4 713.7M1022.5 712.0L1042.4 713.7M1022.5 712.0L1046.9 714.1M1030.1 712.6L1046.9 714.1M1030.1 712.6L1052.0 714.3M1039.0 713.0L1052.0 714.3M1039.0 713.0L1057.7 714.5M1048.8 713.4L1057.7 714.5M1048.8 713.4L1063.7 714.7M1059.2 713.6L1063.7 714.7M1059.2 713.6L1070.0 714.7M1070.0 713.6L1070.0 714.7M1070.0 713.6L1076.3 714.7M1080.8 713.6L1076.3 714.7M1080.8 713.6L1082.3 714.5M1091.2 713.4L1082.3 714.5M1091.2 713.4L1088.0 714.3M1101.0 713.0L1088.0 714.3M1101.0 713.0L1093.1 714.1M1109.9 712.6L1093.1 714.1M1109.9 712.6L1097.6 713.7M1117.5 712.0L1097.6 713.7M1117.5 712.0L1101.2 713.4M1123.7 711.3L1101.2 713.4M1123.7 711.3L1103.8 712.9M1128.3 710.6L1103.8 712.9M1128.3 710.6L1105.5 712.5M1131.1 709.8L1105.5 712.5M1131.1 709.8L1106.0 712.0M1132.0 709.0L1106.0 712.0M1170.0 662.0L1169.1 661.0L1166.3 660.0L1161.7 659.0L1155.4 658.1L1147.6 657.3L1138.3 656.5L1127.7 655.9L1116.0 655.3L1103.5 654.9L1090.3 654.7L1076.8 654.5L1063.2 654.5L1049.7 654.7L1036.5 654.9L1024.0 655.3L1012.3 655.9L1001.7 656.5L992.4 657.3L984.6 658.1L978.3 659.0L973.7 660.0L970.9 661.0L970.0 662.0M1163.0 663.5L1162.1 662.6L1159.6 661.6L1155.3 660.7L1149.5 659.9L1142.1 659.1L1133.5 658.4L1123.6 657.8L1112.8 657.3L1101.1 656.9L1088.9 656.7L1076.3 656.5L1063.7 656.5L1051.1 656.7L1038.9 656.9L1027.2 657.3L1016.4 657.8L1006.5 658.4L997.9 659.1L990.5 659.9L984.7 660.7L980.4 661.6L977.9 662.6L977.0 663.5" stroke="#0e1f33" stroke-width="1.1" fill="none"/><polygon points="1058.0,621.0 1056.0,632.0 1052.0,645.0 1046.0,655.0 1042.0,664.0 1042.0,664.0 1042.3,664.9 1043.2,665.7 1044.6,666.5 1046.7,667.3 1049.2,668.0 1052.2,668.7 1055.5,669.2 1059.3,669.7 1063.3,670.0 1067.5,670.3 1071.8,670.4 1076.2,670.4 1080.5,670.3 1084.7,670.0 1088.7,669.7 1092.5,669.2 1095.8,668.7 1098.8,668.0 1101.3,667.3 1103.4,666.5 1104.8,665.7 1105.7,664.9 1106.0,664.0 1102.0,655.0 1096.0,645.0 1092.0,632.0 1090.0,621.0 1090.0,621.0 1089.9,620.6 1089.4,620.1 1088.7,619.7 1087.7,619.3 1086.4,619.0 1084.9,618.7 1083.2,618.4 1081.4,618.2 1079.4,618.0 1077.3,617.9 1075.1,617.8 1072.9,617.8 1070.7,617.9 1068.6,618.0 1066.6,618.2 1064.8,618.4 1063.1,618.7 1061.6,619.0 1060.3,619.3 1059.3,619.7 1058.6,620.1 1058.1,620.6 1058.0,621.0" fill="#7d7d7d"/><path d="M1058.0 621.0L1058.2 621.5L1058.8 622.0L1059.7 622.5L1061.1 622.9L1062.7 623.3L1064.6 623.6L1066.7 623.9L1069.1 624.0L1071.5 624.2L1074.0 624.2L1076.5 624.2L1078.9 624.0L1081.3 623.9L1083.4 623.6L1085.3 623.3L1086.9 622.9L1088.3 622.5L1089.2 622.0L1089.8 621.5L1090.0 621.0M1056.0 632.0L1056.2 632.6L1056.9 633.1L1058.0 633.6L1059.4 634.1L1061.3 634.5L1063.4 634.9L1065.8 635.2L1068.4 635.4L1071.2 635.6L1074.0 635.6L1076.8 635.6L1079.6 635.4L1082.2 635.2L1084.6 634.9L1086.7 634.5L1088.6 634.1L1090.0 633.6L1091.1 633.1L1091.8 632.6L1092.0 632.0M1052.0 645.0L1052.3 645.7L1053.1 646.4L1054.4 647.0L1056.2 647.6L1058.4 648.1L1061.1 648.6L1064.0 648.9L1067.2 649.2L1070.6 649.3L1074.0 649.4L1077.4 649.3L1080.8 649.2L1084.0 648.9L1086.9 648.6L1089.6 648.1L1091.8 647.6L1093.6 647.0L1094.9 646.4L1095.7 645.7L1096.0 645.0M1046.0 655.0L1046.3 655.9L1047.4 656.7L1049.1 657.5L1051.3 658.3L1054.2 659.0L1057.5 659.5L1061.3 660.0L1065.3 660.3L1069.6 660.5L1074.0 660.6L1078.4 660.5L1082.7 660.3L1086.7 660.0L1090.5 659.5L1093.8 659.0L1096.7 658.3L1098.9 657.5L1100.6 656.7L1101.7 655.9L1102.0 655.0M1042.0 664.0L1042.4 665.0L1043.6 666.0L1045.5 666.9L1048.1 667.8L1051.4 668.5L1055.2 669.2L1059.5 669.7L1064.1 670.1L1069.0 670.3L1074.0 670.4L1079.0 670.3L1083.9 670.1L1088.5 669.7L1092.8 669.2L1096.6 668.5L1099.9 667.8L1102.5 666.9L1104.4 666.0L1105.6 665.0L1106.0 664.0M1058.0 621.0L1056.0 632.0M1058.0 621.0L1056.2 632.6M1058.2 621.5L1056.2 632.6M1058.2 621.5L1056.9 633.1M1058.8 622.0L1056.9 633.1M1058.8 622.0L1058.0 633.6M1059.7 622.5L1058.0 633.6M1059.7 622.5L1059.4 634.1M1061.1 622.9L1059.4 634.1M1061.1 622.9L1061.3 634.5M1062.7 623.3L1061.3 634.5M1062.7 623.3L1063.4 634.9M1064.6 623.6L1063.4 634.9M1064.6 623.6L1065.8 635.2M1066.7 623.9L1065.8 635.2M1066.7 623.9L1068.4 635.4M1069.1 624.0L1068.4 635.4M1069.1 624.0L1071.2 635.6M1071.5 624.2L1071.2 635.6M1071.5 624.2L1074.0 635.6M1074.0 624.2L1074.0 635.6M1074.0 624.2L1076.8 635.6M1076.5 624.2L1076.8 635.6M1076.5 624.2L1079.6 635.4M1078.9 624.0L1079.6 635.4M1078.9 624.0L1082.2 635.2M1081.3 623.9L1082.2 635.2M1081.3 623.9L1084.6 634.9M1083.4 623.6L1084.6 634.9M1083.4 623.6L1086.7 634.5M1085.3 623.3L1086.7 634.5M1085.3 623.3L1088.6 634.1M1086.9 622.9L1088.6 634.1M1086.9 622.9L1090.0 633.6M1088.3 622.5L1090.0 633.6M1088.3 622.5L1091.1 633.1M1089.2 622.0L1091.1 633.1M1089.2 622.0L1091.8 632.6M1089.8 621.5L1091.8 632.6M1089.8 621.5L1092.0 632.0M1090.0 621.0L1092.0 632.0M1056.0 632.0L1052.0 645.0M1056.0 632.0L1052.3 645.7M1056.2 632.6L1052.3 645.7M1056.2 632.6L1053.1 646.4M1056.9 633.1L1053.1 646.4M1056.9 633.1L1054.4 647.0M1058.0 633.6L1054.4 647.0M1058.0 633.6L1056.2 647.6M1059.4 634.1L1056.2 647.6M1059.4 634.1L1058.4 648.1M1061.3 634.5L1058.4 648.1M1061.3 634.5L1061.1 648.6M1063.4 634.9L1061.1 648.6M1063.4 634.9L1064.0 648.9M1065.8 635.2L1064.0 648.9M1065.8 635.2L1067.2 649.2M1068.4 635.4L1067.2 649.2M1068.4 635.4L1070.6 649.3M1071.2 635.6L1070.6 649.3M1071.2 635.6L1074.0 649.4M1074.0 635.6L1074.0 649.4M1074.0 635.6L1077.4 649.3M1076.8 635.6L1077.4 649.3M1076.8 635.6L1080.8 649.2M1079.6 635.4L1080.8 649.2M1079.6 635.4L1084.0 648.9M1082.2 635.2L1084.0 648.9M1082.2 635.2L1086.9 648.6M1084.6 634.9L1086.9 648.6M1084.6 634.9L1089.6 648.1M1086.7 634.5L1089.6 648.1M1086.7 634.5L1091.8 647.6M1088.6 634.1L1091.8 647.6M1088.6 634.1L1093.6 647.0M1090.0 633.6L1093.6 647.0M1090.0 633.6L1094.9 646.4M1091.1 633.1L1094.9 646.4M1091.1 633.1L1095.7 645.7M1091.8 632.6L1095.7 645.7M1091.8 632.6L1096.0 645.0M1092.0 632.0L1096.0 645.0M1052.0 645.0L1046.0 655.0M1052.0 645.0L1046.3 655.9M1052.3 645.7L1046.3 655.9M1052.3 645.7L1047.4 656.7M1053.1 646.4L1047.4 656.7M1053.1 646.4L1049.1 657.5M1054.4 647.0L1049.1 657.5M1054.4 647.0L1051.3 658.3M1056.2 647.6L1051.3 658.3M1056.2 647.6L1054.2 659.0M1058.4 648.1L1054.2 659.0M1058.4 648.1L1057.5 659.5M1061.1 648.6L1057.5 659.5M1061.1 648.6L1061.3 660.0M1064.0 648.9L1061.3 660.0M1064.0 648.9L1065.3 660.3M1067.2 649.2L1065.3 660.3M1067.2 649.2L1069.6 660.5M1070.6 649.3L1069.6 660.5M1070.6 649.3L1074.0 660.6M1074.0 649.4L1074.0 660.6M1074.0 649.4L1078.4 660.5M1077.4 649.3L1078.4 660.5M1077.4 649.3L1082.7 660.3M1080.8 649.2L1082.7 660.3M1080.8 649.2L1086.7 660.0M1084.0 648.9L1086.7 660.0M1084.0 648.9L1090.5 659.5M1086.9 648.6L1090.5 659.5M1086.9 648.6L1093.8 659.0M1089.6 648.1L1093.8 659.0M1089.6 648.1L1096.7 658.3M1091.8 647.6L1096.7 658.3M1091.8 647.6L1098.9 657.5M1093.6 647.0L1098.9 657.5M1093.6 647.0L1100.6 656.7M1094.9 646.4L1100.6 656.7M1094.9 646.4L1101.7 655.9M1095.7 645.7L1101.7 655.9M1095.7 645.7L1102.0 655.0M1096.0 645.0L1102.0 655.0M1046.0 655.0L1042.0 664.0M1046.0 655.0L1042.4 665.0M1046.3 655.9L1042.4 665.0M1046.3 655.9L1043.6 666.0M1047.4 656.7L1043.6 666.0M1047.4 656.7L1045.5 666.9M1049.1 657.5L1045.5 666.9M1049.1 657.5L1048.1 667.8M1051.3 658.3L1048.1 667.8M1051.3 658.3L1051.4 668.5M1054.2 659.0L1051.4 668.5M1054.2 659.0L1055.2 669.2M1057.5 659.5L1055.2 669.2M1057.5 659.5L1059.5 669.7M1061.3 660.0L1059.5 669.7M1061.3 660.0L1064.1 670.1M1065.3 660.3L1064.1 670.1M1065.3 660.3L1069.0 670.3M1069.6 660.5L1069.0 670.3M1069.6 660.5L1074.0 670.4M1074.0 660.6L1074.0 670.4M1074.0 660.6L1079.0 670.3M1078.4 660.5L1079.0 670.3M1078.4 660.5L1083.9 670.1M1082.7 660.3L1083.9 670.1M1082.7 660.3L1088.5 669.7M1086.7 660.0L1088.5 669.7M1086.7 660.0L1092.8 669.2M1090.5 659.5L1092.8 669.2M1090.5 659.5L1096.6 668.5M1093.8 659.0L1096.6 668.5M1093.8 659.0L1099.9 667.8M1096.7 658.3L1099.9 667.8M1096.7 658.3L1102.5 666.9M1098.9 657.5L1102.5 666.9M1098.9 657.5L1104.4 666.0M1100.6 656.7L1104.4 666.0M1100.6 656.7L1105.6 665.0M1101.7 655.9L1105.6 665.0M1101.7 655.9L1106.0 664.0M1102.0 655.0L1106.0 664.0M1090.0 621.0L1089.9 620.6L1089.4 620.1L1088.7 619.7L1087.7 619.3L1086.4 619.0L1084.9 618.7L1083.2 618.4L1081.4 618.2L1079.4 618.0L1077.3 617.9L1075.1 617.8L1072.9 617.8L1070.7 617.9L1068.6 618.0L1066.6 618.2L1064.8 618.4L1063.1 618.7L1061.6 619.0L1060.3 619.3L1059.3 619.7L1058.6 620.1L1058.1 620.6L1058.0 621.0M1088.9 622.5L1088.7 622.1L1088.3 621.7L1087.6 621.3L1086.7 621.0L1085.5 620.6L1084.2 620.3L1082.6 620.1L1080.8 619.9L1079.0 619.7L1077.0 619.6L1075.0 619.5L1073.0 619.5L1071.0 619.6L1069.0 619.7L1067.2 619.9L1065.4 620.1L1063.8 620.3L1062.5 620.6L1061.3 621.0L1060.4 621.3L1059.7 621.7L1059.3 622.1L1059.1 622.5" stroke="#0e1f33" stroke-width="1.0" fill="none"/><polygon points="1020.0,595.0 1024.0,603.0 1034.0,611.0 1044.0,618.0 1050.0,622.0 1050.0,622.0 1050.1,622.2 1050.6,622.4 1051.3,622.6 1052.3,622.8 1053.6,623.0 1055.1,623.2 1056.8,623.3 1058.6,623.4 1060.6,623.5 1062.7,623.6 1064.9,623.6 1067.1,623.6 1069.3,623.6 1071.4,623.5 1073.4,623.4 1075.2,623.3 1076.9,623.2 1078.4,623.0 1079.7,622.8 1080.7,622.6 1081.4,622.4 1081.9,622.2 1082.0,622.0 1088.0,618.0 1098.0,611.0 1108.0,603.0 1112.0,595.0 1112.0,595.0 1111.6,594.4 1110.3,593.8 1108.2,593.2 1105.3,592.6 1101.7,592.1 1097.4,591.6 1092.5,591.2 1087.2,590.9 1081.4,590.7 1075.4,590.5 1069.1,590.4 1062.9,590.4 1056.6,590.5 1050.6,590.7 1044.8,590.9 1039.5,591.2 1034.6,591.6 1030.3,592.1 1026.7,592.6 1023.8,593.2 1021.7,593.8 1020.4,594.4 1020.0,595.0" fill="#8c8c8c"/><path d="M1020.0 595.0L1020.9 595.9L1023.5 596.8L1027.8 597.6L1033.5 598.3L1040.4 598.8L1048.4 599.2L1057.0 599.5L1066.0 599.6L1075.0 599.5L1083.6 599.2L1091.6 598.8L1098.5 598.3L1104.2 597.6L1108.5 596.8L1111.1 595.9L1112.0 595.0M1024.0 603.0L1024.8 603.8L1027.2 604.6L1031.1 605.3L1036.3 606.0L1042.7 606.5L1049.9 606.9L1057.8 607.1L1066.0 607.2L1074.2 607.1L1082.1 606.9L1089.3 606.5L1095.7 606.0L1100.9 605.3L1104.8 604.6L1107.2 603.8L1108.0 603.0M1034.0 611.0L1034.6 611.6L1036.4 612.2L1039.4 612.8L1043.4 613.3L1048.2 613.7L1053.8 614.0L1059.8 614.1L1066.0 614.2L1072.2 614.1L1078.2 614.0L1083.8 613.7L1088.6 613.3L1092.6 612.8L1095.6 612.2L1097.4 611.6L1098.0 611.0M1044.0 618.0L1044.4 618.4L1045.7 618.8L1047.7 619.2L1050.4 619.6L1053.8 619.8L1057.6 620.0L1061.7 620.2L1066.0 620.2L1070.3 620.2L1074.4 620.0L1078.2 619.8L1081.6 619.6L1084.3 619.2L1086.3 618.8L1087.6 618.4L1088.0 618.0M1050.0 622.0L1050.3 622.3L1051.2 622.6L1052.7 622.9L1054.7 623.1L1057.1 623.3L1059.9 623.5L1062.9 623.6L1066.0 623.6L1069.1 623.6L1072.1 623.5L1074.9 623.3L1077.3 623.1L1079.3 622.9L1080.8 622.6L1081.7 622.3L1082.0 622.0M1020.0 595.0L1024.0 603.0M1020.0 595.0L1024.8 603.8M1020.9 595.9L1024.8 603.8M1020.9 595.9L1027.2 604.6M1023.5 596.8L1027.2 604.6M1023.5 596.8L1031.1 605.3M1027.8 597.6L1031.1 605.3M1027.8 597.6L1036.3 606.0M1033.5 598.3L1036.3 606.0M1033.5 598.3L1042.7 606.5M1040.4 598.8L1042.7 606.5M1040.4 598.8L1049.9 606.9M1048.4 599.2L1049.9 606.9M1048.4 599.2L1057.8 607.1M1057.0 599.5L1057.8 607.1M1057.0 599.5L1066.0 607.2M1066.0 599.6L1066.0 607.2M1066.0 599.6L1074.2 607.1M1075.0 599.5L1074.2 607.1M1075.0 599.5L1082.1 606.9M1083.6 599.2L1082.1 606.9M1083.6 599.2L1089.3 606.5M1091.6 598.8L1089.3 606.5M1091.6 598.8L1095.7 606.0M1098.5 598.3L1095.7 606.0M1098.5 598.3L1100.9 605.3M1104.2 597.6L1100.9 605.3M1104.2 597.6L1104.8 604.6M1108.5 596.8L1104.8 604.6M1108.5 596.8L1107.2 603.8M1111.1 595.9L1107.2 603.8M1111.1 595.9L1108.0 603.0M1112.0 595.0L1108.0 603.0M1024.0 603.0L1034.0 611.0M1024.0 603.0L1034.6 611.6M1024.8 603.8L1034.6 611.6M1024.8 603.8L1036.4 612.2M1027.2 604.6L1036.4 612.2M1027.2 604.6L1039.4 612.8M1031.1 605.3L1039.4 612.8M1031.1 605.3L1043.4 613.3M1036.3 606.0L1043.4 613.3M1036.3 606.0L1048.2 613.7M1042.7 606.5L1048.2 613.7M1042.7 606.5L1053.8 614.0M1049.9 606.9L1053.8 614.0M1049.9 606.9L1059.8 614.1M1057.8 607.1L1059.8 614.1M1057.8 607.1L1066.0 614.2M1066.0 607.2L1066.0 614.2M1066.0 607.2L1072.2 614.1M1074.2 607.1L1072.2 614.1M1074.2 607.1L1078.2 614.0M1082.1 606.9L1078.2 614.0M1082.1 606.9L1083.8 613.7M1089.3 606.5L1083.8 613.7M1089.3 606.5L1088.6 613.3M1095.7 606.0L1088.6 613.3M1095.7 606.0L1092.6 612.8M1100.9 605.3L1092.6 612.8M1100.9 605.3L1095.6 612.2M1104.8 604.6L1095.6 612.2M1104.8 604.6L1097.4 611.6M1107.2 603.8L1097.4 611.6M1107.2 603.8L1098.0 611.0M1108.0 603.0L1098.0 611.0M1034.0 611.0L1044.0 618.0M1034.0 611.0L1044.4 618.4M1034.6 611.6L1044.4 618.4M1034.6 611.6L1045.7 618.8M1036.4 612.2L1045.7 618.8M1036.4 612.2L1047.7 619.2M1039.4 612.8L1047.7 619.2M1039.4 612.8L1050.4 619.6M1043.4 613.3L1050.4 619.6M1043.4 613.3L1053.8 619.8M1048.2 613.7L1053.8 619.8M1048.2 613.7L1057.6 620.0M1053.8 614.0L1057.6 620.0M1053.8 614.0L1061.7 620.2M1059.8 614.1L1061.7 620.2M1059.8 614.1L1066.0 620.2M1066.0 614.2L1066.0 620.2M1066.0 614.2L1070.3 620.2M1072.2 614.1L1070.3 620.2M1072.2 614.1L1074.4 620.0M1078.2 614.0L1074.4 620.0M1078.2 614.0L1078.2 619.8M1083.8 613.7L1078.2 619.8M1083.8 613.7L1081.6 619.6M1088.6 613.3L1081.6 619.6M1088.6 613.3L1084.3 619.2M1092.6 612.8L1084.3 619.2M1092.6 612.8L1086.3 618.8M1095.6 612.2L1086.3 618.8M1095.6 612.2L1087.6 618.4M1097.4 611.6L1087.6 618.4M1097.4 611.6L1088.0 618.0M1098.0 611.0L1088.0 618.0M1044.0 618.0L1050.0 622.0M1044.0 618.0L1050.3 622.3M1044.4 618.4L1050.3 622.3M1044.4 618.4L1051.2 622.6M1045.7 618.8L1051.2 622.6M1045.7 618.8L1052.7 622.9M1047.7 619.2L1052.7 622.9M1047.7 619.2L1054.7 623.1M1050.4 619.6L1054.7 623.1M1050.4 619.6L1057.1 623.3M1053.8 619.8L1057.1 623.3M1053.8 619.8L1059.9 623.5M1057.6 620.0L1059.9 623.5M1057.6 620.0L1062.9 623.6M1061.7 620.2L1062.9 623.6M1061.7 620.2L1066.0 623.6M1066.0 620.2L1066.0 623.6M1066.0 620.2L1069.1 623.6M1070.3 620.2L1069.1 623.6M1070.3 620.2L1072.1 623.5M1074.4 620.0L1072.1 623.5M1074.4 620.0L1074.9 623.3M1078.2 619.8L1074.9 623.3M1078.2 619.8L1077.3 623.1M1081.6 619.6L1077.3 623.1M1081.6 619.6L1079.3 622.9M1084.3 619.2L1079.3 622.9M1084.3 619.2L1080.8 622.6M1086.3 618.8L1080.8 622.6M1086.3 618.8L1081.7 622.3M1087.6 618.4L1081.7 622.3M1087.6 618.4L1082.0 622.0M1088.0 618.0L1082.0 622.0M1112.0 595.0L1111.6 594.4L1110.3 593.8L1108.2 593.2L1105.3 592.6L1101.7 592.1L1097.4 591.6L1092.5 591.2L1087.2 590.9L1081.4 590.7L1075.4 590.5L1069.1 590.4L1062.9 590.4L1056.6 590.5L1050.6 590.7L1044.8 590.9L1039.5 591.2L1034.6 591.6L1030.3 592.1L1026.7 592.6L1023.8 593.2L1021.7 593.8L1020.4 594.4L1020.0 595.0M1108.8 596.5L1108.4 595.9L1107.2 595.3L1105.2 594.8L1102.6 594.3L1099.2 593.8L1095.2 593.4L1090.7 593.0L1085.7 592.7L1080.3 592.5L1074.7 592.3L1068.9 592.2L1063.1 592.2L1057.3 592.3L1051.7 592.5L1046.3 592.7L1041.3 593.0L1036.8 593.4L1032.8 593.8L1029.4 594.3L1026.8 594.8L1024.8 595.3L1023.6 595.9L1023.2 596.5" stroke="#0e1f33" stroke-width="1.1" fill="none"/><path d="M682 755L958 552" stroke="#f4c01a" stroke-width="7" fill="none" stroke-linejoin="round"/><path d="M682 755L958 552" stroke="#1b8c3a" stroke-width="3.6" fill="none" stroke-linejoin="round"/><circle cx="682" cy="755" r="5.5" fill="#1b8c3a"/><polygon points="948.0,555.0 936.0,560.0 944.0,568.0" fill="#1b8c3a"/><circle cx="960" cy="551" r="5" fill="#9a9ae6"/><polygon points="970.0,540.0 975.0,532.0 985.0,524.0 987.0,529.0 980.0,538.0 973.0,544.0" fill="#9a9ae6"/><path d="M964 548L968 544" stroke="#9a9ae6" stroke-width="3" fill="none" stroke-linejoin="round"/><path d="M954 551L966 551M960 545L960 557" stroke="#1b8c3a" stroke-width="2.6" fill="none" stroke-linejoin="round"/><circle cx="1450.2" cy="178.8" r="6.5" fill="#d39aa3"/><circle cx="1477" cy="183.6" r="7" fill="#90a6c8"/><circle cx="1478.3" cy="206.1" r="6.5" fill="#c6dba2"/><path d="M1478.3 151.3L1479.7 175.2" stroke="#7aac22" stroke-width="1.5" fill="none" stroke-linejoin="round"/><path d="M1479.7 175.2L1506.5 179.4" stroke="#d0203f" stroke-width="1.5" fill="none" stroke-linejoin="round"/><circle cx="1478.3" cy="151.3" r="7" fill="#7aac22"/><circle cx="1479.7" cy="175.2" r="7" fill="#3b8df0"/><circle cx="1506.5" cy="179.4" r="7" fill="#d0203f"/><text x="1478.3" y="155.5" font-size="10" text-anchor="middle" fill="#fff" font-family="Liberation Sans">Y</text><text x="1479.7" y="179.4" font-size="10" text-anchor="middle" fill="#fff" font-family="Liberation Sans">Z</text><text x="1506.5" y="183.6" font-size="10" text-anchor="middle" fill="#fff" font-family="Liberation Sans">X</text></svg><div class="t" style="left:431.9px;top:975.43px;font-size:11.3px;line-height:11.3px;font-weight:bold;color:#111;">Circle:</div><div class="t" style="left:471.3px;top:974.84px;font-size:12px;line-height:12px;font-weight:normal;color:#111;">Origin</div><div class="t" style="left:539.2px;top:975.43px;font-size:11.3px;line-height:11.3px;font-weight:bold;color:#111;">Triangle:</div><div class="t" style="left:591.4px;top:974.84px;font-size:12px;line-height:12px;font-weight:normal;color:#111;">Direction</div><div class="t" style="left:674.3px;top:975.43px;font-size:11.3px;line-height:11.3px;font-weight:bold;color:#111;">Plus:</div><div class="t" style="left:703.6px;top:974.84px;font-size:12px;line-height:12px;font-weight:normal;color:#111;">Hit</div><div class="t" style="left:1024.6px;top:975.43px;font-size:11.3px;line-height:11.3px;font-weight:bold;color:#111;">Ray coloring:</div><div style="position:absolute;left:1106px;top:974px;width:13px;height:13px;background:#fdb913"></div><div class="t" style="left:1124.8px;top:974.84px;font-size:12px;line-height:12px;font-weight:normal;color:#111;">Selection outline</div><div style="position:absolute;left:1224px;top:974px;width:13px;height:13px;background:#138a3c"></div><div class="t" style="left:1243px;top:974.84px;font-size:12px;line-height:12px;font-weight:normal;color:#111;">Ray</div><div style="position:absolute;left:1273px;top:974px;width:13px;height:13px;background:#9595d8"></div><div class="t" style="left:1292px;top:974.84px;font-size:12px;line-height:12px;font-weight:normal;color:#111;">Accept first hit ray</div><div style="position:absolute;left:1399px;top:974px;width:13px;height:13px;background:#e3142a"></div><div class="t" style="left:1418px;top:974.84px;font-size:12px;line-height:12px;font-weight:normal;color:#111;">Zero mask ray</div><div style="position:absolute;left:1519px;top:136px;width:3px;height:828px;background:#c3c3c3"></div><div class="t" style="left:1528.3px;top:109.63px;font-size:15.8px;line-height:15.8px;font-weight:bold;color:#111;">Rendering controls</div><div class="t" style="left:1528.5px;top:140.00px;font-size:13px;line-height:13px;font-weight:normal;color:#111;">Rendering mode</div><svg style="position:absolute;left:1527.5px;top:156.4px" width="18" height="18"><circle cx="9" cy="9" r="6.2" fill="#fff" stroke="#1a78d2" stroke-width="4.2"/></svg><div class="t" style="left:1551.8px;top:158.50px;font-size:13px;line-height:13px;font-weight:normal;color:#111;">Geometry</div><svg style="position:absolute;left:1527.5px;top:176.4px" width="18" height="18"><circle cx="9" cy="9" r="7.2" fill="#fff" stroke="#111" stroke-width="1.9"/></svg><div class="t" style="left:1551.8px;top:178.50px;font-size:13px;line-height:13px;font-weight:normal;color:#111;">Traversal counter</div><svg style="position:absolute;left:1528px;top:207.2px" width="41" height="20"><rect x="0" y="0" width="40" height="19.5" rx="9.75" fill="#1a78d2"/><circle cx="30.5" cy="9.75" r="6.2" fill="#fff"/></svg><div class="t" style="left:1574.5px;top:210.00px;font-size:13px;line-height:13px;font-weight:normal;color:#111;">Show geometry</div><svg style="position:absolute;left:1528px;top:230.2px" width="41" height="20"><rect x="0" y="0" width="40" height="19.5" rx="9.75" fill="#1a78d2"/><circle cx="30.5" cy="9.75" r="6.2" fill="#fff"/></svg><div class="t" style="left:1574.5px;top:233.00px;font-size:13px;line-height:13px;font-weight:normal;color:#111;">Show bounding volumes</div><svg style="position:absolute;left:1528px;top:253.2px" width="41" height="20"><rect x="0" y="0" width="40" height="19.5" rx="9.75" fill="#1a78d2"/><circle cx="30.5" cy="9.75" r="6.2" fill="#fff"/></svg><div class="t" style="left:1574.5px;top:256.00px;font-size:13px;line-height:13px;font-weight:normal;color:#111;">Show wireframe</div><svg style="position:absolute;left:1529.5px;top:287.5px" width="16" height="11"><polyline points="1.5,1.5 7.5,8 13.5,1.5" fill="none" stroke="#9a9a9a" stroke-width="2.6"/></svg><div class="t" style="left:1550.5px;top:285.00px;font-size:13px;line-height:13px;font-weight:normal;color:#111;">No culling</div><div class="t" style="left:1528.3px;top:314.63px;font-size:15.8px;line-height:15.8px;font-weight:bold;color:#111;">Camera controls</div><svg style="position:absolute;left:1529.5px;top:346.5px" width="16" height="11"><polyline points="1.5,1.5 7.5,8 13.5,1.5" fill="none" stroke="#9a9a9a" stroke-width="2.6"/></svg><div class="t" style="left:1550.5px;top:344.00px;font-size:13px;line-height:13px;font-weight:normal;color:#111;">FPS control style</div><svg style="position:absolute;left:1830px;top:341px" width="50" height="19"><rect x="1.8" y="1.8" width="34" height="15" rx="1.5" fill="none" stroke="#1515dd" stroke-width="2"/><rect x="4" y="4" width="3" height="2.5" fill="#1515dd"/><rect x="9" y="4" width="3" height="2.5" fill="#1515dd"/><rect x="14" y="4" width="3" height="2.5" fill="#1515dd"/><rect x="19" y="4" width="3" height="2.5" fill="#1515dd"/><rect x="24" y="4" width="3" height="2.5" fill="#1515dd"/><rect x="29" y="4" width="3" height="2.5" fill="#1515dd"/><rect x="6" y="8" width="3" height="2.5" fill="#1515dd"/><rect x="11" y="8" width="3" height="2.5" fill="#1515dd"/><rect x="16" y="8" width="3" height="2.5" fill="#1515dd"/><rect x="21" y="8" width="3" height="2.5" fill="#1515dd"/><rect x="26" y="8" width="3" height="2.5" fill="#1515dd"/><rect x="4" y="12" width="3" height="2.5" fill="#1515dd"/><rect x="9" y="12" width="20" height="2.5" fill="#1515dd"/><rect x="31" y="12" width="3" height="2.5" fill="#1515dd"/><rect x="39" y="2" width="9" height="14" rx="3" fill="#1515dd"/><line x1="39" y1="7" x2="48" y2="7" stroke="#fff" stroke-width="1"/><line x1="43.5" y1="2" x2="43.5" y2="7" stroke="#fff" stroke-width="1"/></svg><div class="t" style="left:1528.5px;top:372.34px;font-size:12px;line-height:12px;font-weight:normal;color:#111;">Application 'up' axis</div><svg style="position:absolute;left:1527.6px;top:388.6px" width="18" height="18"><circle cx="9" cy="9" r="7.2" fill="#fff" stroke="#111" stroke-width="1.9"/></svg><div class="t" style="left:1551px;top:391.42px;font-size:12.5px;line-height:12.5px;font-weight:normal;color:#111;">X</div><svg style="position:absolute;left:1527.6px;top:408.6px" width="18" height="18"><circle cx="9" cy="9" r="6.2" fill="#fff" stroke="#1a78d2" stroke-width="4.2"/></svg><div class="t" style="left:1551px;top:411.42px;font-size:12.5px;line-height:12.5px;font-weight:normal;color:#111;">Y</div><svg style="position:absolute;left:1527.6px;top:428.4px" width="18" height="18"><circle cx="9" cy="9" r="7.2" fill="#fff" stroke="#111" stroke-width="1.9"/></svg><div class="t" style="left:1551px;top:431.42px;font-size:12.5px;line-height:12.5px;font-weight:normal;color:#111;">Z</div><div class="t" style="left:1705.7px;top:372.84px;font-size:12px;line-height:12px;font-weight:normal;color:#111;">Coordinate system</div><svg style="position:absolute;left:1705px;top:393.4px" width="41" height="20"><rect x="1" y="1" width="38" height="17.5" rx="8.75" fill="#fff" stroke="#111" stroke-width="2"/><circle cx="10" cy="9.75" r="6" fill="#111"/></svg><div class="t" style="left:1751px;top:396.00px;font-size:13px;line-height:13px;font-weight:normal;color:#111;">Invert vertical</div><svg style="position:absolute;left:1705px;top:420.4px" width="41" height="20"><rect x="1" y="1" width="38" height="17.5" rx="8.75" fill="#fff" stroke="#111" stroke-width="2"/><circle cx="10" cy="9.75" r="6" fill="#111"/></svg><div class="t" style="left:1751px;top:423.00px;font-size:13px;line-height:13px;font-weight:normal;color:#111;">Invert horizontal</div><div class="t" style="left:1528.5px;top:458.84px;font-size:12px;line-height:12px;font-weight:normal;color:#111;">Camera position</div><svg style="position:absolute;left:1847px;top:455px" width="32" height="18"><path d="M3.5,8 V5 Q3.5,1.5 7,1.5 Q10.5,1.5 10.5,5" fill="none" stroke="#2020d0" stroke-width="1.5"/><rect x="2.5" y="8" width="10" height="8.5" rx="1" fill="none" stroke="#2020d0" stroke-width="1.5"/><path d="M27,8.5 A5,5 0 1 1 24,3.8" fill="none" stroke="#2020d0" stroke-width="1.5"/><polyline points="22.5,1.5 25,3.8 22.5,6.5" fill="none" stroke="#2020d0" stroke-width="1.5"/></svg><div style="position:absolute;left:1528.5px;top:473.5px;width:110px;height:19.5px;border:1px solid #c8c8c8;border-radius:2px;background:#fff"></div><div style="position:absolute;left:1626.5px;top:474px;width:1px;height:19px;background:#d0d0d0"></div><svg style="position:absolute;left:1627.5px;top:474px" width="12" height="20"><polygon points="2.5,7.5 6,3.5 9.5,7.5" fill="#555"/><polygon points="2.5,12 6,16 9.5,12" fill="#555"/></svg><div class="t" style="left:1533.3px;top:478.34px;font-size:12px;line-height:12px;font-weight:normal;color:#111;">-0.5554872</div><div style="position:absolute;left:1646.4px;top:473.5px;width:110px;height:19.5px;border:1px solid #c8c8c8;border-radius:2px;background:#fff"></div><div style="position:absolute;left:1744.4px;top:474px;width:1px;height:19px;background:#d0d0d0"></div><svg style="position:absolute;left:1745.4px;top:474px" width="12" height="20"><polygon points="2.5,7.5 6,3.5 9.5,7.5" fill="#555"/><polygon points="2.5,12 6,16 9.5,12" fill="#555"/></svg><div class="t" style="left:1651.2px;top:478.34px;font-size:12px;line-height:12px;font-weight:normal;color:#111;">1.2595245</div><div style="position:absolute;left:1765.5px;top:473.5px;width:110px;height:19.5px;border:1px solid #c8c8c8;border-radius:2px;background:#fff"></div><div style="position:absolute;left:1863.5px;top:474px;width:1px;height:19px;background:#d0d0d0"></div><svg style="position:absolute;left:1864.5px;top:474px" width="12" height="20"><polygon points="2.5,7.5 6,3.5 9.5,7.5" fill="#555"/><polygon points="2.5,12 6,16 9.5,12" fill="#555"/></svg><div class="t" style="left:1770.3px;top:478.34px;font-size:12px;line-height:12px;font-weight:normal;color:#111;">4.3628688</div><div class="t" style="left:1528.5px;top:508.84px;font-size:12px;line-height:12px;font-weight:normal;color:#111;">Field of view</div><div class="t" style="right:41px;top:508.84px;font-size:12px;line-height:12px;font-weight:normal;color:#111;">75</div><div style="position:absolute;left:1528px;top:528px;width:350px;height:2px;background:#a8a8a8"></div><div style="position:absolute;left:1700px;top:522px;width:6px;height:14px;background:#1a78d2"></div><div class="t" style="left:1528.5px;top:554.84px;font-size:12px;line-height:12px;font-weight:normal;color:#111;">Movement speed</div><div class="t" style="right:41px;top:554.84px;font-size:12px;line-height:12px;font-weight:normal;color:#111;">1.000</div><div style="position:absolute;left:1528px;top:574px;width:350px;height:2px;background:#a8a8a8"></div><div style="position:absolute;left:1642px;top:568px;width:6px;height:14px;background:#1a78d2"></div><svg style="position:absolute;left:1894px;top:65px" width="26" height="30"><path d="M21.5,11 A10.3,10.3 0 1 1 14,4.6" fill="none" stroke="#1616d8" stroke-width="2.2"/><polyline points="9.5,1 14.5,4.6 10.5,9.5" fill="none" stroke="#1616d8" stroke-width="2.2"/></svg><div class="t" style="left:1900px;top:105px;font-size:12px;line-height:12px;font-weight:bold;color:#111;writing-mode:vertical-rl;">Hide controls</div>
</body></html>
